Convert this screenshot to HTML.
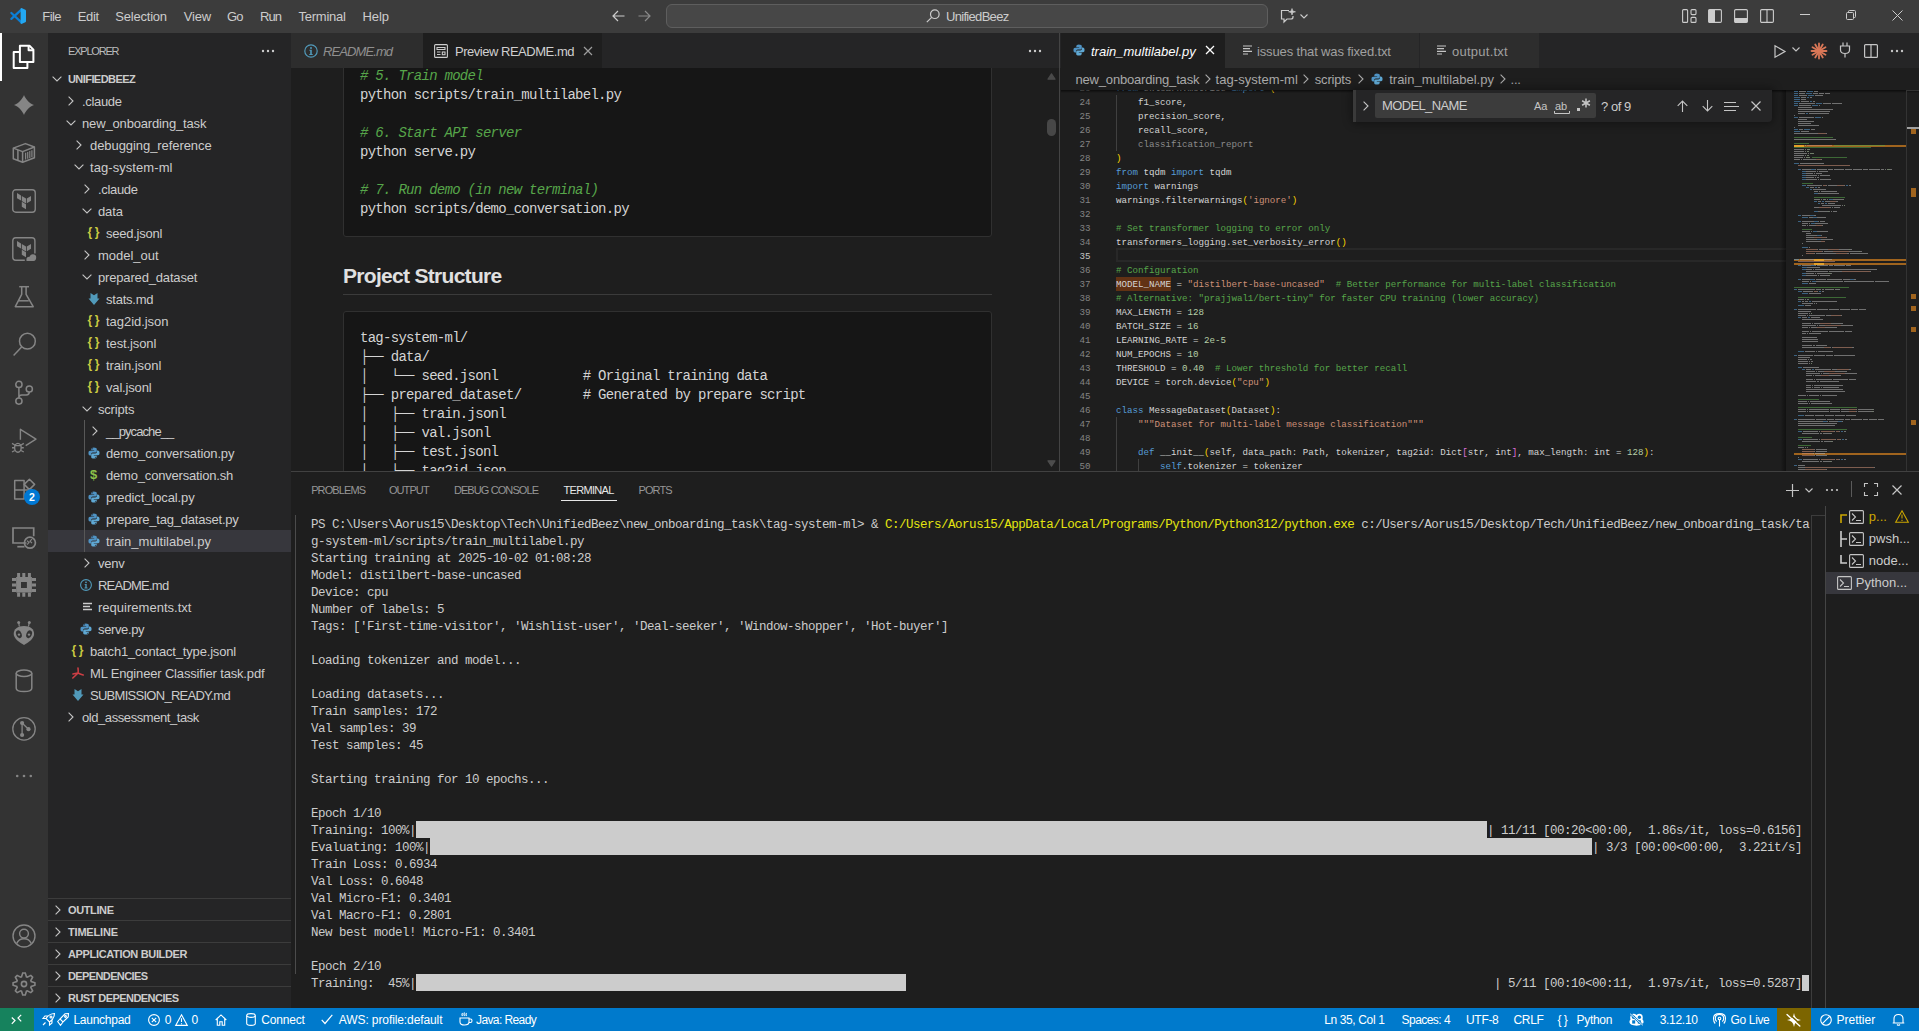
<!DOCTYPE html>
<html><head><meta charset="utf-8">
<style>
*{box-sizing:border-box;margin:0;padding:0}
html,body{width:1919px;height:1031px;overflow:hidden;background:#1e1e1e;font-family:"Liberation Sans",sans-serif;color:#cccccc}
.a{position:absolute}
.t{position:absolute;white-space:pre}
svg{position:absolute;overflow:visible}
#title{left:0;top:0;width:1919px;height:33px;background:#3c3c3c}
#act{left:0;top:33px;width:48px;height:975px;background:#333333}
#side{left:48px;top:33px;width:243px;height:975px;background:#252526}
#ed1{left:291px;top:33px;width:769px;height:438px;background:#1e1e1e}
#ed2{left:1060px;top:33px;width:859px;height:438px;background:#1e1e1e}
#panel{left:291px;top:471px;width:1628px;height:537px;background:#1e1e1e}
#status{left:0;top:1008px;width:1919px;height:23px;background:#007acc;color:#fff}
.menu{font-size:13px;top:0;line-height:33px;color:#cccccc}
.row{position:absolute;left:0;width:243px;height:22px;font-size:13px;line-height:22px;color:#cccccc}
.row span{position:absolute;white-space:pre}
.mono{font-family:"Liberation Mono",monospace}
</style></head>
<body>
<!-- title -->
<div id="title" class="a">
<svg style="left:6px;top:4px" width="24" height="24" viewBox="0 0 24 24"><path d="M5.35 8.95 L15.4 18.4 M5.35 14.9 L15.4 5.6" stroke="#0b7fd6" stroke-width="2.2" stroke-linecap="round"/><path d="M14.6 4.4 Q15.3 3.9 16 4.2 L19.4 5.8 Q20 6.1 20 6.8 V17.2 Q20 17.9 19.4 18.2 L16 19.8 Q15.3 20.1 14.6 19.6 Z" fill="#23a8f2"/></svg>
<span class="t menu" style="left:42.300000000000004px;letter-spacing:-0.554px">File</span>
<span class="t menu" style="left:77.8px;letter-spacing:-0.364px">Edit</span>
<span class="t menu" style="left:115.3px;letter-spacing:-0.212px">Selection</span>
<span class="t menu" style="left:183.7px;letter-spacing:-0.161px">View</span>
<span class="t menu" style="left:227.0px;letter-spacing:-0.9px">Go</span>
<span class="t menu" style="left:259.90000000000003px;letter-spacing:-0.9px">Run</span>
<span class="t menu" style="left:298.40000000000003px;letter-spacing:-0.22px">Terminal</span>
<span class="t menu" style="left:362.6px;letter-spacing:-0.116px">Help</span>
<svg style="left:612px;top:10px" width="13" height="12" viewBox="0 0 13 12" fill="none" stroke="#cccccc" stroke-width="1.2"><path d="M12.5 6 H1 M6 1 L1 6 L6 11"/></svg>
<svg style="left:638px;top:10px" width="13" height="12" viewBox="0 0 13 12" fill="none" stroke="#8a8a8a" stroke-width="1.2"><path d="M0.5 6 H12 M7 1 L12 6 L7 11"/></svg>
<div class="a" style="left:666px;top:4px;width:602px;height:24px;background:#474747;border:1px solid #5e5e5e;border-radius:6px"></div>
<svg style="left:926px;top:9px" width="14" height="14" viewBox="0 0 14 14" fill="none" stroke="#cccccc" stroke-width="1.2"><circle cx="8.8" cy="5.2" r="4.3"/><path d="M5.7 8.3 L0.8 13.2"/></svg>
<span class="t" style="left:946px;top:0;font-size:13px;line-height:33px;color:#cccccc;letter-spacing:-0.69px">UnifiedBeez</span>
<svg style="left:1280px;top:8px" width="17" height="16" viewBox="0 0 17 16" fill="none" stroke="#cccccc" stroke-width="1.2"><path d="M9 2.5 H1.5 V11 H4 V14 L7 11 H11 Q13 11 13 9 V8"/><path d="M12 0.5 L12.8 3 L15.5 3.8 L12.8 4.6 L12 7 L11.2 4.6 L8.5 3.8 L11.2 3 Z" fill="#cccccc" stroke-width="0.6"/></svg>
<svg style="left:1300px;top:14px" width="8" height="5" viewBox="0 0 8 5" fill="none" stroke="#cccccc" stroke-width="1.1"><path d="M0.5 0.5 L4 4 L7.5 0.5"/></svg>
<svg style="left:1682px;top:9px" width="15" height="14" viewBox="0 0 15 14" fill="none" stroke="#cccccc" stroke-width="1.1"><rect x="0.6" y="0.6" width="5" height="12.8" rx="1"/><rect x="9" y="0.6" width="5" height="5" rx="1"/><rect x="9" y="8.4" width="5" height="5" rx="1"/></svg>
<svg style="left:1708px;top:9px" width="14" height="14" viewBox="0 0 14 14"><rect x="0.6" y="0.6" width="12.8" height="12.8" rx="1.2" fill="none" stroke="#cccccc" stroke-width="1.1"/><rect x="0.6" y="0.6" width="6.4" height="12.8" fill="#cccccc"/></svg>
<svg style="left:1734px;top:9px" width="14" height="14" viewBox="0 0 14 14"><rect x="0.6" y="0.6" width="12.8" height="12.8" rx="1.2" fill="none" stroke="#cccccc" stroke-width="1.1"/><rect x="0.6" y="9" width="12.8" height="4.4" fill="#cccccc"/></svg>
<svg style="left:1760px;top:9px" width="14" height="14" viewBox="0 0 14 14" fill="none" stroke="#cccccc" stroke-width="1.1"><rect x="0.6" y="0.6" width="12.8" height="12.8" rx="1.2"/><path d="M7 0.6 V13.4"/></svg>
<div class="a" style="left:1800px;top:14px;width:10px;height:1px;background:#cccccc"></div>
<svg style="left:1846px;top:10px" width="10" height="10" viewBox="0 0 10 10" fill="none" stroke="#cccccc" stroke-width="1"><rect x="0.5" y="2.5" width="7" height="7" rx="1"/><path d="M2.5 2.5 V1.5 Q2.5 0.5 3.5 0.5 H8.5 Q9.5 0.5 9.5 1.5 V6.5 Q9.5 7.5 8.5 7.5 H7.5"/></svg>
<svg style="left:1892px;top:10px" width="11" height="11" viewBox="0 0 11 11" stroke="#cccccc" stroke-width="1"><path d="M0.5 0.5 L10.5 10.5 M10.5 0.5 L0.5 10.5"/></svg>
</div>
<!-- act -->
<div id="act" class="a">
<div class="a" style="left:0;top:0;width:2px;height:48px;background:#ffffff"></div>
<svg style="left:12px;top:11px" width="24" height="24" viewBox="0 0 24 24" fill="none" stroke="#ffffff" stroke-width="2" stroke-linejoin="round"><path d="M7.9 1.7 H17.5 L21.4 5.6 V18 H7.9 Z" /><path d="M16.6 1.7 V6.3 H21.4"/><path d="M7.9 7.9 H1.7 V24 H15.4 V18"/></svg>
<svg style="left:14px;top:62px" width="20" height="20" viewBox="0 0 20 20" ><path d="M10 0 C11 3 15 8.5 20 10 C15 11.5 11 17 10 20 C9 17 5 11.5 0 10 C5 8.5 9 3 10 0 Z" fill="#858585"/></svg>
<svg style="left:12px;top:108px" width="24" height="24" viewBox="0 0 24 24" fill="none" stroke="#858585" stroke-width="1.5" stroke-linejoin="round"><path d="M13.4 2.6 L22.4 6 V16.7 L10.6 21.3 L1.3 17.7 V7.1 Z"/><path d="M1.3 7.1 L10.6 10.6 L22.4 6"/><path d="M10.6 10.6 V21.3"/><path d="M5.9 8.9 V19.4"/><path d="M13.6 11.7 V18.6 M15.7 10.9 V17.8 M17.8 10.1 V17 M19.9 9.3 V16.2" stroke-width="1.2"/></svg>
<svg style="left:12px;top:156px" width="24" height="24" viewBox="0 0 24 24" ><rect x="0.75" y="0.75" width="22.5" height="22.5" rx="3" fill="none" stroke="#858585" stroke-width="1.4"/><path d="M5 4 L9 6.4 V11.5 L5 9.2 Z M9.8 6.9 L14 9.4 V14.4 L9.8 12 Z M14.8 9.4 L19 7 V11.8 L14.8 14.3 Z M9.8 12.8 L14 15.2 V20.2 L9.8 17.8 Z" fill="#858585"/></svg>
<svg style="left:12px;top:204px" width="24" height="24" viewBox="0 0 24 24" ><path d="M12.8 23.2 H3.7 Q0.8 23.2 0.8 20.3 V3.7 Q0.8 0.8 3.7 0.8 H20 Q22.9 0.8 22.9 3.7 V16.4" fill="none" stroke="#858585" stroke-width="1.4"/><path d="M5 4 L9 6.4 V11.5 L5 9.2 Z M9.8 6.9 L14 9.4 V14.4 L9.8 12 Z M14.8 9.4 L19 7 V11.8 L14.8 14.3 Z M9.8 12.8 L14 15.2 V20.2 L9.8 17.8 Z" fill="#858585"/><path d="M14.5 24 Q13.8 19.8 17.5 19.8 Q18.3 17 21 17.2 Q24.3 17.5 24.2 20.3 Q24.2 24 21.5 24 Z" fill="#858585"/></svg>
<svg style="left:12px;top:252px" width="24" height="24" viewBox="0 0 24 24" fill="none" stroke="#858585" stroke-width="1.5" stroke-linejoin="round"><path d="M7.2 1.7 H17"/><path d="M9.7 1.7 V9.3 L3.3 21.7 H21.2 L14.1 9.3 V1.7"/><path d="M7 15.8 H16.8"/></svg>
<svg style="left:12px;top:299px" width="24" height="24" viewBox="0 0 24 24" fill="none" stroke="#858585" stroke-width="1.5" stroke-linejoin="round"><circle cx="15.4" cy="9.2" r="7.9"/><path d="M9.6 15 L1.6 23.5"/></svg>
<svg style="left:12px;top:347px" width="24" height="24" viewBox="0 0 24 24" fill="none" stroke="#858585" stroke-width="1.5" stroke-linejoin="round"><circle cx="6.9" cy="4.4" r="3.1"/><circle cx="6.9" cy="21.1" r="3.1"/><circle cx="17.3" cy="9" r="3.1"/><path d="M6.9 7.5 V18 M17.3 12.1 Q17.3 15 14.3 15 H9.8 Q6.9 15 6.9 18"/></svg>
<svg style="left:12px;top:395px" width="24" height="24" viewBox="0 0 24 24" fill="none" stroke="#858585" stroke-width="1.4" stroke-linejoin="round"><path d="M8.4 11.8 V1.3 L24 11.2 L13.7 17.7"/><ellipse cx="5.9" cy="19.8" rx="3.3" ry="4.4"/><path d="M2.6 17.6 H9.2 M0 15.3 L2.8 17 M0 19.8 H2.6 M0 24 L2.8 22.5 M11.8 15.3 L9 17 M11.8 19.8 H9.2 M11.8 24 L9 22.5"/></svg>
<svg style="left:12px;top:443px" width="24" height="24" viewBox="0 0 24 24" fill="none" stroke="#858585" stroke-width="1.5" stroke-linejoin="round"><path d="M2.7 4.4 H12.1 V23 H2.7 Z M2.7 13.9 H21"/><path d="M17.4 3.2 L22.6 8.4 L17.4 13.6 L12.2 8.4 Z"/></svg>
<div class="a" style="left:24px;top:455.5px;width:16px;height:16px;border-radius:50%;background:#0078d4;color:#fff;font-size:10.5px;line-height:16px;text-align:center;font-weight:bold">2</div>
<svg style="left:12px;top:491px" width="24" height="24" viewBox="0 0 24 24" fill="none" stroke="#858585" stroke-width="1.7"><path d="M14.5 19 H1 V4 H21.7 V12.3"/><path d="M5.3 22.7 H12.5"/><circle cx="17.9" cy="18.7" r="5.5"/><path d="M15 16.6 L17 18.6 L15 20.6 M20 15.2 L18 17.2 L20 19.2" stroke-width="1.2"/></svg>
<svg style="left:12px;top:539px" width="24" height="24" viewBox="0 0 24 24" ><path d="M4.1 5 H19.9 V20.5 H4.1 Z M9 10.1 V15.9 H14.9 V10.1 Z" fill="#858585" fill-rule="evenodd"/><path d="M5.1 1 h3 v4 h-3 Z M10.3 1 h3 v4 h-3 Z M15.9 1 h3 v4 h-3 Z M5.1 20.5 h3 v4.3 h-3 Z M10.3 20.5 h3 v4.3 h-3 Z M15.9 20.5 h3 v4.3 h-3 Z M0 6 h4.1 v3 h-4.1 Z M0 11.4 h4.1 v3 h-4.1 Z M0 16.9 h4.1 v3 h-4.1 Z M19.9 6 h4.1 v3 h-4.1 Z M19.9 11.4 h4.1 v3 h-4.1 Z M19.9 16.9 h4.1 v3 h-4.1 Z" fill="#858585"/></svg>
<svg style="left:12px;top:587px" width="24" height="24" viewBox="0 0 24 24" ><path d="M12 5.9 C18.5 5.9 22.1 9 22.1 14 C22.1 18.5 16 23 12 24.9 C8 23 1.7 18.5 1.7 14 C1.7 9 5.5 5.9 12 5.9 Z" fill="#858585"/><path d="M7.3 6.5 L6.7 2.5 M16.5 6.5 L17.3 2.5" stroke="#858585" stroke-width="1.2"/><circle cx="6.7" cy="2.5" r="1.5" fill="#858585"/><circle cx="17.3" cy="2.5" r="1.5" fill="#858585"/><ellipse cx="6.9" cy="14.3" rx="2.7" ry="4" transform="rotate(-22 6.9 14.3)" fill="#333333"/><ellipse cx="17.1" cy="14.3" rx="2.7" ry="4" transform="rotate(22 17.1 14.3)" fill="#333333"/><circle cx="7" cy="14.6" r="1.2" fill="#858585"/><circle cx="17" cy="14.6" r="1.2" fill="#858585"/></svg>
<svg style="left:12px;top:636px" width="24" height="24" viewBox="0 0 24 24" fill="none" stroke="#858585" stroke-width="1.5" stroke-linejoin="round"><ellipse cx="12" cy="4.3" rx="7.8" ry="3.2"/><path d="M4.2 4.3 V19.3 Q4.2 22.6 12 22.6 Q19.8 22.6 19.8 19.3 V4.3"/></svg>
<svg style="left:12px;top:684px" width="24" height="24" viewBox="0 0 24 24" ><circle cx="12" cy="11.9" r="11.2" fill="none" stroke="#858585" stroke-width="1.3"/><path d="M10.1 6 V18 M10.1 6 L16.5 12.2" stroke="#858585" stroke-width="1.3"/><circle cx="10.1" cy="6" r="2.1" fill="#858585"/><circle cx="10.1" cy="18" r="2.1" fill="#858585"/><circle cx="16.5" cy="12.2" r="2.1" fill="#858585"/></svg>
<svg style="left:12px;top:731px" width="24" height="24" viewBox="0 0 24 24" fill="#858585"><circle cx="5.2" cy="12" r="1.3"/><circle cx="12" cy="12" r="1.3"/><circle cx="18.8" cy="12" r="1.3"/></svg>
<svg style="left:12px;top:890.5px" width="24" height="24" viewBox="0 0 24 24" fill="none" stroke="#858585" stroke-width="1.4"><circle cx="12" cy="12" r="11"/><circle cx="12" cy="9.6" r="4.4"/><path d="M4.6 19.6 Q6.8 14.8 12 14.8 Q17.2 14.8 19.4 19.6"/></svg>
<svg style="left:12px;top:939px" width="24" height="24" viewBox="0 0 24 24" fill="none" stroke="#858585" stroke-width="1.6" stroke-linejoin="miter"><path d="M9.54 4.81 L10.73 1.07 L13.27 1.07 L14.46 4.81 L15.34 5.17 L18.83 3.38 L20.62 5.17 L18.83 8.66 L19.19 9.54 L22.93 10.73 L22.93 13.27 L19.19 14.46 L18.83 15.34 L20.62 18.83 L18.83 20.62 L15.34 18.83 L14.46 19.19 L13.27 22.93 L10.73 22.93 L9.54 19.19 L8.66 18.83 L5.17 20.62 L3.38 18.83 L5.17 15.34 L4.81 14.46 L1.07 13.27 L1.07 10.73 L4.81 9.54 L5.17 8.66 L3.38 5.17 L5.17 3.38 L8.66 5.17 Z"/><circle cx="12" cy="12" r="2.6"/></svg>
</div>
<!-- side -->
<div id="side" class="a">
<span class="t" style="left:20px;top:11px;font-size:11px;line-height:14px;color:#bbbbbb;letter-spacing:-1.2px">EXPLORER</span>
<svg style="left:212px;top:16px" width="16" height="4" viewBox="0 0 16 4" fill="#cccccc"><circle cx="3" cy="2" r="1.2"/><circle cx="8" cy="2" r="1.2"/><circle cx="13" cy="2" r="1.2"/></svg>
<div class="a" style="left:0;top:497px;width:243px;height:22px;background:#37373d"></div>
<div class="a" style="left:36px;top:387px;width:1px;height:132px;background:#585858"></div>
<svg style="left:4px;top:43px" width="10" height="6" viewBox="0 0 10 6" fill="none" stroke="#c5c5c5" stroke-width="1.1"><path d="M0.6 0.6 L5 5 L9.4 0.6"/></svg>
<span class="t" style="left:20px;top:35px;font-size:11px;line-height:22px;font-weight:bold;color:#cccccc;letter-spacing:-0.57px">UNIFIEDBEEZ</span>
<svg style="left:20px;top:63px" width="6" height="10" viewBox="0 0 6 10" fill="none" stroke="#c5c5c5" stroke-width="1.1"><path d="M0.6 0.6 L5 5 L0.6 9.4"/></svg>
<span class="t" style="left:34px;top:57px;font-size:13px;line-height:23px;color:#cccccc;letter-spacing:-0.321px">.claude</span>
<svg style="left:18px;top:87px" width="10" height="6" viewBox="0 0 10 6" fill="none" stroke="#c5c5c5" stroke-width="1.1"><path d="M0.6 0.6 L5 5 L9.4 0.6"/></svg>
<span class="t" style="left:34px;top:79px;font-size:13px;line-height:23px;color:#cccccc;letter-spacing:-0.152px">new_onboarding_task</span>
<svg style="left:28px;top:107px" width="6" height="10" viewBox="0 0 6 10" fill="none" stroke="#c5c5c5" stroke-width="1.1"><path d="M0.6 0.6 L5 5 L0.6 9.4"/></svg>
<span class="t" style="left:42px;top:101px;font-size:13px;line-height:23px;color:#cccccc;letter-spacing:-0.066px">debugging_reference</span>
<svg style="left:26px;top:131px" width="10" height="6" viewBox="0 0 10 6" fill="none" stroke="#c5c5c5" stroke-width="1.1"><path d="M0.6 0.6 L5 5 L9.4 0.6"/></svg>
<span class="t" style="left:42px;top:123px;font-size:13px;line-height:23px;color:#cccccc;letter-spacing:0.066px">tag-system-ml</span>
<svg style="left:36px;top:151px" width="6" height="10" viewBox="0 0 6 10" fill="none" stroke="#c5c5c5" stroke-width="1.1"><path d="M0.6 0.6 L5 5 L0.6 9.4"/></svg>
<span class="t" style="left:50px;top:145px;font-size:13px;line-height:23px;color:#cccccc;letter-spacing:-0.321px">.claude</span>
<svg style="left:34px;top:175px" width="10" height="6" viewBox="0 0 10 6" fill="none" stroke="#c5c5c5" stroke-width="1.1"><path d="M0.6 0.6 L5 5 L9.4 0.6"/></svg>
<span class="t" style="left:50px;top:167px;font-size:13px;line-height:23px;color:#cccccc;letter-spacing:-0.106px">data</span>
<span class="t" style="left:39.5px;top:191px;font-size:12px;line-height:17px;color:#cbcb41;font-weight:bold;letter-spacing:2.5px">{}</span>
<span class="t" style="left:58px;top:189px;font-size:13px;line-height:23px;color:#cccccc;letter-spacing:-0.248px">seed.jsonl</span>
<svg style="left:36px;top:217px" width="6" height="10" viewBox="0 0 6 10" fill="none" stroke="#c5c5c5" stroke-width="1.1"><path d="M0.6 0.6 L5 5 L0.6 9.4"/></svg>
<span class="t" style="left:50px;top:211px;font-size:13px;line-height:23px;color:#cccccc;letter-spacing:-0.014px">model_out</span>
<svg style="left:34px;top:241px" width="10" height="6" viewBox="0 0 10 6" fill="none" stroke="#c5c5c5" stroke-width="1.1"><path d="M0.6 0.6 L5 5 L9.4 0.6"/></svg>
<span class="t" style="left:50px;top:233px;font-size:13px;line-height:23px;color:#cccccc;letter-spacing:-0.168px">prepared_dataset</span>
<svg style="left:40px;top:260px" width="12" height="12" viewBox="0 0 12 12"><path d="M2.5 0 L6 2.2 L9.5 0 V5.6 H11.5 L6 12 L0.5 5.6 H2.5 Z" fill="#519aba"/></svg>
<span class="t" style="left:58px;top:255px;font-size:13px;line-height:23px;color:#cccccc;letter-spacing:-0.234px">stats.md</span>
<span class="t" style="left:39.5px;top:279px;font-size:12px;line-height:17px;color:#cbcb41;font-weight:bold;letter-spacing:2.5px">{}</span>
<span class="t" style="left:58px;top:277px;font-size:13px;line-height:23px;color:#cccccc;letter-spacing:-0.039px">tag2id.json</span>
<span class="t" style="left:39.5px;top:301px;font-size:12px;line-height:17px;color:#cbcb41;font-weight:bold;letter-spacing:2.5px">{}</span>
<span class="t" style="left:58px;top:299px;font-size:13px;line-height:23px;color:#cccccc;letter-spacing:-0.102px">test.jsonl</span>
<span class="t" style="left:39.5px;top:323px;font-size:12px;line-height:17px;color:#cbcb41;font-weight:bold;letter-spacing:2.5px">{}</span>
<span class="t" style="left:58px;top:321px;font-size:13px;line-height:23px;color:#cccccc;letter-spacing:-0.034px">train.jsonl</span>
<span class="t" style="left:39.5px;top:345px;font-size:12px;line-height:17px;color:#cbcb41;font-weight:bold;letter-spacing:2.5px">{}</span>
<span class="t" style="left:58px;top:343px;font-size:13px;line-height:23px;color:#cccccc;letter-spacing:-0.17px">val.jsonl</span>
<svg style="left:34px;top:373px" width="10" height="6" viewBox="0 0 10 6" fill="none" stroke="#c5c5c5" stroke-width="1.1"><path d="M0.6 0.6 L5 5 L9.4 0.6"/></svg>
<span class="t" style="left:50px;top:365px;font-size:13px;line-height:23px;color:#cccccc;letter-spacing:-0.195px">scripts</span>
<svg style="left:44px;top:393px" width="6" height="10" viewBox="0 0 6 10" fill="none" stroke="#c5c5c5" stroke-width="1.1"><path d="M0.6 0.6 L5 5 L0.6 9.4"/></svg>
<span class="t" style="left:58px;top:387px;font-size:13px;line-height:23px;color:#cccccc;letter-spacing:-0.9px">__pycache__</span>
<svg style="left:40px;top:414px" width="12" height="12" viewBox="0 0 12 12"><path d="M5.8 0.4 Q3.3 0.4 3.3 2 V3.2 H6.2 V3.7 H2 Q0.4 3.7 0.4 6 Q0.4 8.6 2 8.6 H3 V7.2 Q3 5.6 4.8 5.6 H7.4 Q8.8 5.6 8.8 4.2 V2 Q8.8 0.4 5.8 0.4 Z" fill="#4f93c4"/><path d="M6.2 11.6 Q8.7 11.6 8.7 10 V8.8 H5.8 V8.3 H10 Q11.6 8.3 11.6 6 Q11.6 3.4 10 3.4 H9 V4.8 Q9 6.4 7.2 6.4 H4.6 Q3.2 6.4 3.2 7.8 V10 Q3.2 11.6 6.2 11.6 Z" fill="#5fa8d3"/><circle cx="4.6" cy="1.7" r="0.55" fill="#252526"/><circle cx="7.4" cy="10.3" r="0.55" fill="#252526"/></svg>
<span class="t" style="left:58px;top:409px;font-size:13px;line-height:23px;color:#cccccc;letter-spacing:-0.122px">demo_conversation.py</span>
<span class="t" style="left:42px;top:433px;font-size:13px;line-height:18px;color:#8dc149;font-weight:bold">$</span>
<span class="t" style="left:58px;top:431px;font-size:13px;line-height:23px;color:#cccccc;letter-spacing:-0.185px">demo_conversation.sh</span>
<svg style="left:40px;top:458px" width="12" height="12" viewBox="0 0 12 12"><path d="M5.8 0.4 Q3.3 0.4 3.3 2 V3.2 H6.2 V3.7 H2 Q0.4 3.7 0.4 6 Q0.4 8.6 2 8.6 H3 V7.2 Q3 5.6 4.8 5.6 H7.4 Q8.8 5.6 8.8 4.2 V2 Q8.8 0.4 5.8 0.4 Z" fill="#4f93c4"/><path d="M6.2 11.6 Q8.7 11.6 8.7 10 V8.8 H5.8 V8.3 H10 Q11.6 8.3 11.6 6 Q11.6 3.4 10 3.4 H9 V4.8 Q9 6.4 7.2 6.4 H4.6 Q3.2 6.4 3.2 7.8 V10 Q3.2 11.6 6.2 11.6 Z" fill="#5fa8d3"/><circle cx="4.6" cy="1.7" r="0.55" fill="#252526"/><circle cx="7.4" cy="10.3" r="0.55" fill="#252526"/></svg>
<span class="t" style="left:58px;top:453px;font-size:13px;line-height:23px;color:#cccccc;letter-spacing:-0.108px">predict_local.py</span>
<svg style="left:40px;top:480px" width="12" height="12" viewBox="0 0 12 12"><path d="M5.8 0.4 Q3.3 0.4 3.3 2 V3.2 H6.2 V3.7 H2 Q0.4 3.7 0.4 6 Q0.4 8.6 2 8.6 H3 V7.2 Q3 5.6 4.8 5.6 H7.4 Q8.8 5.6 8.8 4.2 V2 Q8.8 0.4 5.8 0.4 Z" fill="#4f93c4"/><path d="M6.2 11.6 Q8.7 11.6 8.7 10 V8.8 H5.8 V8.3 H10 Q11.6 8.3 11.6 6 Q11.6 3.4 10 3.4 H9 V4.8 Q9 6.4 7.2 6.4 H4.6 Q3.2 6.4 3.2 7.8 V10 Q3.2 11.6 6.2 11.6 Z" fill="#5fa8d3"/><circle cx="4.6" cy="1.7" r="0.55" fill="#252526"/><circle cx="7.4" cy="10.3" r="0.55" fill="#252526"/></svg>
<span class="t" style="left:58px;top:475px;font-size:13px;line-height:23px;color:#cccccc;letter-spacing:-0.212px">prepare_tag_dataset.py</span>
<svg style="left:40px;top:502px" width="12" height="12" viewBox="0 0 12 12"><path d="M5.8 0.4 Q3.3 0.4 3.3 2 V3.2 H6.2 V3.7 H2 Q0.4 3.7 0.4 6 Q0.4 8.6 2 8.6 H3 V7.2 Q3 5.6 4.8 5.6 H7.4 Q8.8 5.6 8.8 4.2 V2 Q8.8 0.4 5.8 0.4 Z" fill="#4f93c4"/><path d="M6.2 11.6 Q8.7 11.6 8.7 10 V8.8 H5.8 V8.3 H10 Q11.6 8.3 11.6 6 Q11.6 3.4 10 3.4 H9 V4.8 Q9 6.4 7.2 6.4 H4.6 Q3.2 6.4 3.2 7.8 V10 Q3.2 11.6 6.2 11.6 Z" fill="#5fa8d3"/><circle cx="4.6" cy="1.7" r="0.55" fill="#252526"/><circle cx="7.4" cy="10.3" r="0.55" fill="#252526"/></svg>
<span class="t" style="left:58px;top:497px;font-size:13px;line-height:23px;color:#cccccc;letter-spacing:0.012px">train_multilabel.py</span>
<svg style="left:36px;top:525px" width="6" height="10" viewBox="0 0 6 10" fill="none" stroke="#c5c5c5" stroke-width="1.1"><path d="M0.6 0.6 L5 5 L0.6 9.4"/></svg>
<span class="t" style="left:50px;top:519px;font-size:13px;line-height:23px;color:#cccccc;letter-spacing:-0.254px">venv</span>
<svg style="left:32px;top:546px" width="12" height="12" viewBox="0 0 12 12"><circle cx="6" cy="6" r="5.4" fill="none" stroke="#519aba" stroke-width="1.1"/><circle cx="6" cy="3.3" r="0.9" fill="#519aba"/><path d="M4.6 5 H6.7 V8.6 H7.5 V9.4 H4.5 V8.6 H5.3 V5.8 H4.6 Z" fill="#519aba"/></svg>
<span class="t" style="left:50px;top:541px;font-size:13px;line-height:23px;color:#cccccc;letter-spacing:-0.773px">README.md</span>
<svg style="left:35px;top:569px" width="10" height="10" viewBox="0 0 10 10" stroke="#cccccc" stroke-width="1.3"><path d="M0 1.5 H9 M0 4.5 H7 M0 7.5 H9"/></svg>
<span class="t" style="left:50px;top:563px;font-size:13px;line-height:23px;color:#cccccc;letter-spacing:0.013px">requirements.txt</span>
<svg style="left:32px;top:590px" width="12" height="12" viewBox="0 0 12 12"><path d="M5.8 0.4 Q3.3 0.4 3.3 2 V3.2 H6.2 V3.7 H2 Q0.4 3.7 0.4 6 Q0.4 8.6 2 8.6 H3 V7.2 Q3 5.6 4.8 5.6 H7.4 Q8.8 5.6 8.8 4.2 V2 Q8.8 0.4 5.8 0.4 Z" fill="#4f93c4"/><path d="M6.2 11.6 Q8.7 11.6 8.7 10 V8.8 H5.8 V8.3 H10 Q11.6 8.3 11.6 6 Q11.6 3.4 10 3.4 H9 V4.8 Q9 6.4 7.2 6.4 H4.6 Q3.2 6.4 3.2 7.8 V10 Q3.2 11.6 6.2 11.6 Z" fill="#5fa8d3"/><circle cx="4.6" cy="1.7" r="0.55" fill="#252526"/><circle cx="7.4" cy="10.3" r="0.55" fill="#252526"/></svg>
<span class="t" style="left:50px;top:585px;font-size:13px;line-height:23px;color:#cccccc;letter-spacing:-0.363px">serve.py</span>
<span class="t" style="left:23.5px;top:609px;font-size:12px;line-height:17px;color:#cbcb41;font-weight:bold;letter-spacing:2.5px">{}</span>
<span class="t" style="left:42px;top:607px;font-size:13px;line-height:23px;color:#cccccc;letter-spacing:-0.173px">batch1_contact_type.jsonl</span>
<svg style="left:24px;top:634px" width="12" height="12" viewBox="0 0 12 12" fill="none" stroke="#cc3e44" stroke-width="1.6" stroke-linecap="round"><path d="M6 1 Q6.5 5 6 6 M6 6 Q3 9 0.8 11 M6 6 Q9 7.5 11.2 8 M6 6 Q3 6.5 1 7"/></svg>
<span class="t" style="left:42px;top:629px;font-size:13px;line-height:23px;color:#cccccc;letter-spacing:-0.162px">ML Engineer Classifier task.pdf</span>
<svg style="left:24px;top:656px" width="12" height="12" viewBox="0 0 12 12"><path d="M2.5 0 L6 2.2 L9.5 0 V5.6 H11.5 L6 12 L0.5 5.6 H2.5 Z" fill="#519aba"/></svg>
<span class="t" style="left:42px;top:651px;font-size:13px;line-height:23px;color:#cccccc;letter-spacing:-0.724px">SUBMISSION_READY.md</span>
<svg style="left:20px;top:679px" width="6" height="10" viewBox="0 0 6 10" fill="none" stroke="#c5c5c5" stroke-width="1.1"><path d="M0.6 0.6 L5 5 L0.6 9.4"/></svg>
<span class="t" style="left:34px;top:673px;font-size:13px;line-height:23px;color:#cccccc;letter-spacing:-0.426px">old_assessment_task</span>
<div class="a" style="left:0;top:865px;width:243px;height:1px;background:#3c3c3c"></div>
<svg style="left:7px;top:872px" width="6" height="10" viewBox="0 0 6 10" fill="none" stroke="#c5c5c5" stroke-width="1.1"><path d="M0.6 0.6 L5 5 L0.6 9.4"/></svg>
<span class="t" style="left:20px;top:866px;font-size:11px;line-height:22px;font-weight:bold;color:#cccccc;letter-spacing:-0.382px">OUTLINE</span>
<div class="a" style="left:0;top:887px;width:243px;height:1px;background:#3c3c3c"></div>
<svg style="left:7px;top:894px" width="6" height="10" viewBox="0 0 6 10" fill="none" stroke="#c5c5c5" stroke-width="1.1"><path d="M0.6 0.6 L5 5 L0.6 9.4"/></svg>
<span class="t" style="left:20px;top:888px;font-size:11px;line-height:22px;font-weight:bold;color:#cccccc;letter-spacing:-0.192px">TIMELINE</span>
<div class="a" style="left:0;top:909px;width:243px;height:1px;background:#3c3c3c"></div>
<svg style="left:7px;top:916px" width="6" height="10" viewBox="0 0 6 10" fill="none" stroke="#c5c5c5" stroke-width="1.1"><path d="M0.6 0.6 L5 5 L0.6 9.4"/></svg>
<span class="t" style="left:20px;top:910px;font-size:11px;line-height:22px;font-weight:bold;color:#cccccc;letter-spacing:-0.343px">APPLICATION BUILDER</span>
<div class="a" style="left:0;top:931px;width:243px;height:1px;background:#3c3c3c"></div>
<svg style="left:7px;top:938px" width="6" height="10" viewBox="0 0 6 10" fill="none" stroke="#c5c5c5" stroke-width="1.1"><path d="M0.6 0.6 L5 5 L0.6 9.4"/></svg>
<span class="t" style="left:20px;top:932px;font-size:11px;line-height:22px;font-weight:bold;color:#cccccc;letter-spacing:-0.617px">DEPENDENCIES</span>
<div class="a" style="left:0;top:953px;width:243px;height:1px;background:#3c3c3c"></div>
<svg style="left:7px;top:960px" width="6" height="10" viewBox="0 0 6 10" fill="none" stroke="#c5c5c5" stroke-width="1.1"><path d="M0.6 0.6 L5 5 L0.6 9.4"/></svg>
<span class="t" style="left:20px;top:954px;font-size:11px;line-height:22px;font-weight:bold;color:#cccccc;letter-spacing:-0.549px">RUST DEPENDENCIES</span>
</div>
<!-- ed1 -->
<div id="ed1" class="a">
<div class="a" style="left:0;top:0;width:769px;height:35px;background:#252526"></div>
<div class="a" style="left:0;top:0;width:132px;height:35px;background:#2d2d2d"></div>
<div class="a" style="left:132px;top:0;width:179px;height:35px;background:#1e1e1e"></div>
<svg style="left:13px;top:11px" width="14" height="14" viewBox="0 0 14 14"><circle cx="7" cy="7" r="6.2" fill="none" stroke="#519aba" stroke-width="1.2"/><circle cx="7" cy="3.9" r="1" fill="#519aba"/><path d="M5.4 5.8 H7.8 V10 H8.7 V10.9 H5.3 V10 H6.2 V6.7 H5.4 Z" fill="#519aba"/></svg>
<span class="t" style="left:32px;top:0;font-size:13px;line-height:37px;font-style:italic;color:#8f8f8f;letter-spacing:-0.9px">README.md</span>
<svg style="left:143px;top:11px" width="14" height="14" viewBox="0 0 14 14" fill="none" stroke="#cccccc" stroke-width="1.1"><rect x="0.6" y="0.6" width="12.8" height="12.8" rx="1"/><path d="M3 3.5 H11 V5.5 H3 Z M3 8 H6.5 M3 10.5 H6.5"/><rect x="8.3" y="8" width="2.7" height="2.7"/></svg>
<span class="t" style="left:164px;top:0;font-size:13px;line-height:37px;color:#d0d0d0;letter-spacing:-0.48px">Preview README.md</span>
<svg style="left:292px;top:13px" width="10" height="10" viewBox="0 0 10 10" stroke="#9d9d9d" stroke-width="1.2"><path d="M1 1 L9 9 M9 1 L1 9"/></svg>
<svg style="left:736px;top:16px" width="16" height="4" viewBox="0 0 16 4" fill="#cccccc"><circle cx="3" cy="2" r="1.2"/><circle cx="8" cy="2" r="1.2"/><circle cx="13" cy="2" r="1.2"/></svg>
<div class="a" style="left:0;top:35px;width:768px;height:403px;overflow:hidden;background:#1e1e1e">
<div class="a" style="left:52px;top:-48px;width:649px;height:217px;background:#161616;border:1px solid #303030;border-radius:3px"></div>
<span class="t mono" style="left:69px;top:-0.9px;font-size:14px;line-height:19px;letter-spacing:-0.72px;color:#d4d4d4;color:#57a64a;font-style:italic"># 5. Train model</span>
<span class="t mono" style="left:69px;top:18.1px;font-size:14px;line-height:19px;letter-spacing:-0.72px;color:#d4d4d4;">python scripts/train_multilabel.py</span>
<span class="t mono" style="left:69px;top:56.1px;font-size:14px;line-height:19px;letter-spacing:-0.72px;color:#d4d4d4;color:#57a64a;font-style:italic"># 6. Start API server</span>
<span class="t mono" style="left:69px;top:75.1px;font-size:14px;line-height:19px;letter-spacing:-0.72px;color:#d4d4d4;">python serve.py</span>
<span class="t mono" style="left:69px;top:113.1px;font-size:14px;line-height:19px;letter-spacing:-0.72px;color:#d4d4d4;color:#57a64a;font-style:italic"># 7. Run demo (in new terminal)</span>
<span class="t mono" style="left:69px;top:132.1px;font-size:14px;line-height:19px;letter-spacing:-0.72px;color:#d4d4d4;">python scripts/demo_conversation.py</span>
<span class="t" style="left:52px;top:194.8px;font-size:21px;line-height:26px;font-weight:bold;letter-spacing:-0.7px;color:#e0e0e0">Project Structure</span>
<div class="a" style="left:52px;top:226px;width:649px;height:1px;background:#3b3b3b"></div>
<div class="a" style="left:52px;top:243px;width:649px;height:300px;background:#161616;border:1px solid #303030;border-radius:3px"></div>
<span class="t mono" style="left:69px;top:261.0px;font-size:14px;line-height:19px;letter-spacing:-0.72px;color:#d4d4d4">tag-system-ml/</span>
<span class="t mono" style="left:69px;top:280.0px;font-size:14px;line-height:19px;letter-spacing:-0.72px;color:#d4d4d4">├── data/</span>
<span class="t mono" style="left:69px;top:299.0px;font-size:14px;line-height:19px;letter-spacing:-0.72px;color:#d4d4d4">│   └── seed.jsonl           # Original training data</span>
<span class="t mono" style="left:69px;top:318.0px;font-size:14px;line-height:19px;letter-spacing:-0.72px;color:#d4d4d4">├── prepared_dataset/        # Generated by prepare script</span>
<span class="t mono" style="left:69px;top:337.0px;font-size:14px;line-height:19px;letter-spacing:-0.72px;color:#d4d4d4">│   ├── train.jsonl</span>
<span class="t mono" style="left:69px;top:356.0px;font-size:14px;line-height:19px;letter-spacing:-0.72px;color:#d4d4d4">│   ├── val.jsonl</span>
<span class="t mono" style="left:69px;top:375.0px;font-size:14px;line-height:19px;letter-spacing:-0.72px;color:#d4d4d4">│   ├── test.jsonl</span>
<span class="t mono" style="left:69px;top:394.0px;font-size:14px;line-height:19px;letter-spacing:-0.72px;color:#d4d4d4">│   └── tag2id.json</span>
</div>
<svg style="left:756px;top:40px" width="9" height="7" viewBox="0 0 9 7"><path d="M1 6.2 H8 L4.5 0.8 Z" fill="#4a4a4a" stroke="#4a4a4a" stroke-width="1.2" stroke-linejoin="round"/></svg>
<div class="a" style="left:756px;top:86px;width:9px;height:17px;border-radius:5px;background:#474747"></div>
<svg style="left:756px;top:427px" width="9" height="7" viewBox="0 0 9 7"><path d="M1 0.8 H8 L4.5 6.2 Z" fill="#4d4d4d" stroke="#4d4d4d" stroke-width="1.2" stroke-linejoin="round"/></svg>
<div class="a" style="left:768px;top:0;width:1px;height:438px;background:#444444"></div>
</div>
<!-- ed2 -->
<div id="ed2" class="a">
<div class="a" style="left:0;top:0;width:859px;height:35px;background:#252526"></div>
<div class="a" style="left:1px;top:0;width:164px;height:35px;background:#1e1e1e"></div>
<div class="a" style="left:165px;top:0;width:194px;height:35px;background:#2d2d2d"></div>
<div class="a" style="left:359px;top:0;width:1px;height:35px;background:#252526"></div>
<div class="a" style="left:360px;top:0;width:119px;height:35px;background:#2d2d2d"></div>
<svg style="left:13px;top:11px" width="12" height="12" viewBox="0 0 12 12"><path d="M5.8 0.4 Q3.3 0.4 3.3 2 V3.2 H6.2 V3.7 H2 Q0.4 3.7 0.4 6 Q0.4 8.6 2 8.6 H3 V7.2 Q3 5.6 4.8 5.6 H7.4 Q8.8 5.6 8.8 4.2 V2 Q8.8 0.4 5.8 0.4 Z" fill="#4f93c4"/><path d="M6.2 11.6 Q8.7 11.6 8.7 10 V8.8 H5.8 V8.3 H10 Q11.6 8.3 11.6 6 Q11.6 3.4 10 3.4 H9 V4.8 Q9 6.4 7.2 6.4 H4.6 Q3.2 6.4 3.2 7.8 V10 Q3.2 11.6 6.2 11.6 Z" fill="#5fa8d3"/></svg>
<span class="t" style="left:31px;top:0;font-size:13px;line-height:37px;font-style:italic;color:#ffffff">train_multilabel.py</span>
<svg style="left:145px;top:12px" width="10" height="10" viewBox="0 0 10 10" stroke="#ffffff" stroke-width="1.3"><path d="M1 1 L9 9 M9 1 L1 9"/></svg>
<svg style="left:182.5px;top:12px" width="10" height="10" viewBox="0 0 10 10" stroke="#c5c5c5" stroke-width="1.2"><path d="M0 1 H9 M0 3.7 H7 M0 6.3 H9 M0 9 H5"/></svg>
<span class="t" style="left:197px;top:0;font-size:13px;line-height:37px;color:#a0a0a0;letter-spacing:-0.14px">issues that was fixed.txt</span>
<svg style="left:377.3px;top:12px" width="10" height="10" viewBox="0 0 10 10" stroke="#c5c5c5" stroke-width="1.2"><path d="M0 1 H9 M0 3.7 H7 M0 6.3 H9 M0 9 H5"/></svg>
<span class="t" style="left:392px;top:0;font-size:13px;line-height:37px;color:#a0a0a0;letter-spacing:0.25px">output.txt</span>
<svg style="left:714px;top:12px" width="12" height="13" viewBox="0 0 12 13" fill="none" stroke="#c5c5c5" stroke-width="1.2"><path d="M1 0.8 L11 6.5 L1 12.2 Z"/></svg>
<svg style="left:732px;top:14px" width="8" height="5" viewBox="0 0 8 5" fill="none" stroke="#c5c5c5" stroke-width="1.1"><path d="M0.5 0.5 L4 4 L7.5 0.5"/></svg>
<svg style="left:751px;top:10px" width="16" height="16" viewBox="0 0 16 16" stroke="#d97757" stroke-width="1.8" stroke-linecap="round"><path d="M8 8 L15.50 8.00"/><path d="M8 8 L14.50 11.75"/><path d="M8 8 L11.75 14.50"/><path d="M8 8 L8.00 15.50"/><path d="M8 8 L4.25 14.50"/><path d="M8 8 L1.50 11.75"/><path d="M8 8 L0.50 8.00"/><path d="M8 8 L1.50 4.25"/><path d="M8 8 L4.25 1.50"/><path d="M8 8 L8.00 0.50"/><path d="M8 8 L11.75 1.50"/><path d="M8 8 L14.50 4.25"/><circle cx="8" cy="8" r="2.5" fill="#d97757" stroke="none"/></svg>
<svg style="left:779px;top:9px" width="12" height="16" viewBox="0 0 12 16" fill="none" stroke="#c5c5c5" stroke-width="1.2"><path d="M4 0.5 V4 M8 0.5 V4 M1.5 4 H10.5 V8 Q10.5 11.5 6 11.5 Q1.5 11.5 1.5 8 Z M6 11.5 V15.5"/></svg>
<svg style="left:804px;top:11px" width="14" height="14" viewBox="0 0 14 14" fill="none" stroke="#c5c5c5" stroke-width="1.2"><rect x="0.6" y="0.6" width="12.8" height="12.8" rx="1"/><path d="M7 0.6 V13.4"/></svg>
<svg style="left:829px;top:16px" width="16" height="4" viewBox="0 0 16 4" fill="#c5c5c5"><circle cx="3" cy="2" r="1.2"/><circle cx="8" cy="2" r="1.2"/><circle cx="13" cy="2" r="1.2"/></svg>
<span class="t" style="left:15.5px;top:35px;font-size:13px;line-height:23px;color:#a9a9a9;letter-spacing:-0.18px">new_onboarding_task</span>
<svg style="left:144.5px;top:41px" width="6" height="10" viewBox="0 0 6 10" fill="none" stroke="#a9a9a9" stroke-width="1.1"><path d="M0.6 0.6 L5 5 L0.6 9.4"/></svg>
<span class="t" style="left:155.5px;top:35px;font-size:13px;line-height:23px;color:#a9a9a9;letter-spacing:-0.18px;letter-spacing:0.06px">tag-system-ml</span>
<svg style="left:243px;top:41px" width="6" height="10" viewBox="0 0 6 10" fill="none" stroke="#a9a9a9" stroke-width="1.1"><path d="M0.6 0.6 L5 5 L0.6 9.4"/></svg>
<span class="t" style="left:254.79999999999995px;top:35px;font-size:13px;line-height:23px;color:#a9a9a9;letter-spacing:-0.18px">scripts</span>
<svg style="left:298px;top:41px" width="6" height="10" viewBox="0 0 6 10" fill="none" stroke="#a9a9a9" stroke-width="1.1"><path d="M0.6 0.6 L5 5 L0.6 9.4"/></svg>
<svg style="left:311.29999999999995px;top:40px" width="12" height="12" viewBox="0 0 12 12"><path d="M5.8 0.4 Q3.3 0.4 3.3 2 V3.2 H6.2 V3.7 H2 Q0.4 3.7 0.4 6 Q0.4 8.6 2 8.6 H3 V7.2 Q3 5.6 4.8 5.6 H7.4 Q8.8 5.6 8.8 4.2 V2 Q8.8 0.4 5.8 0.4 Z" fill="#4f93c4"/><path d="M6.2 11.6 Q8.7 11.6 8.7 10 V8.8 H5.8 V8.3 H10 Q11.6 8.3 11.6 6 Q11.6 3.4 10 3.4 H9 V4.8 Q9 6.4 7.2 6.4 H4.6 Q3.2 6.4 3.2 7.8 V10 Q3.2 11.6 6.2 11.6 Z" fill="#5fa8d3"/></svg>
<span class="t" style="left:329.20000000000005px;top:35px;font-size:13px;line-height:23px;color:#a9a9a9;letter-spacing:-0.18px;letter-spacing:0px">train_multilabel.py</span>
<svg style="left:440.4000000000001px;top:41px" width="6" height="10" viewBox="0 0 6 10" fill="none" stroke="#a9a9a9" stroke-width="1.1"><path d="M0.6 0.6 L5 5 L0.6 9.4"/></svg>
<span class="t" style="left:450.5px;top:35px;font-size:13px;line-height:23px;color:#a9a9a9;letter-spacing:-0.18px">...</span>
<div class="a" style="left:1px;top:57px;width:858px;height:382px;overflow:hidden">
<div class="a" style="left:55px;top:158.3px;width:670px;height:14px;border:2px solid #282828;border-right:none"></div>
<div class="a" style="left:55px;top:186.5px;width:55px;height:14px;background:#623214"></div>
<div class="a" style="left:55px;top:4.5px;width:1px;height:56px;background:#404040"></div>
<div class="a" style="left:55px;top:326.5px;width:1px;height:56px;background:#404040"></div>
<div class="a" style="left:77px;top:368.5px;width:1px;height:14px;background:#404040"></div>
<span class="t mono" style="left:0;width:29.5px;text-align:right;top:-7.8px;font-size:9.17px;line-height:14px;color:#858585">23</span>
<span class="t mono" style="left:55px;top:-7.8px;font-size:9.17px;line-height:14px"><span style="color:#569cd6">from</span><span style="color:#d4d4d4"> sklearn.metrics </span><span style="color:#569cd6">import</span><span style="color:#d4d4d4"> </span><span style="color:#ffd700">(</span></span>
<span class="t mono" style="left:0;width:29.5px;text-align:right;top:6.2px;font-size:9.17px;line-height:14px;color:#858585">24</span>
<span class="t mono" style="left:55px;top:6.2px;font-size:9.17px;line-height:14px"><span style="color:#d4d4d4">    f1_score,</span></span>
<span class="t mono" style="left:0;width:29.5px;text-align:right;top:20.2px;font-size:9.17px;line-height:14px;color:#858585">25</span>
<span class="t mono" style="left:55px;top:20.2px;font-size:9.17px;line-height:14px"><span style="color:#d4d4d4">    precision_score,</span></span>
<span class="t mono" style="left:0;width:29.5px;text-align:right;top:34.2px;font-size:9.17px;line-height:14px;color:#858585">26</span>
<span class="t mono" style="left:55px;top:34.2px;font-size:9.17px;line-height:14px"><span style="color:#d4d4d4">    recall_score,</span></span>
<span class="t mono" style="left:0;width:29.5px;text-align:right;top:48.2px;font-size:9.17px;line-height:14px;color:#858585">27</span>
<span class="t mono" style="left:55px;top:48.2px;font-size:9.17px;line-height:14px"><span style="color:#d4d4d4">    </span><span style="color:#8b8b8b">classification_report</span></span>
<span class="t mono" style="left:0;width:29.5px;text-align:right;top:62.2px;font-size:9.17px;line-height:14px;color:#858585">28</span>
<span class="t mono" style="left:55px;top:62.2px;font-size:9.17px;line-height:14px"><span style="color:#ffd700">)</span></span>
<span class="t mono" style="left:0;width:29.5px;text-align:right;top:76.2px;font-size:9.17px;line-height:14px;color:#858585">29</span>
<span class="t mono" style="left:55px;top:76.2px;font-size:9.17px;line-height:14px"><span style="color:#569cd6">from</span><span style="color:#d4d4d4"> tqdm </span><span style="color:#569cd6">import</span><span style="color:#d4d4d4"> tqdm</span></span>
<span class="t mono" style="left:0;width:29.5px;text-align:right;top:90.2px;font-size:9.17px;line-height:14px;color:#858585">30</span>
<span class="t mono" style="left:55px;top:90.2px;font-size:9.17px;line-height:14px"><span style="color:#569cd6">import</span><span style="color:#d4d4d4"> warnings</span></span>
<span class="t mono" style="left:0;width:29.5px;text-align:right;top:104.2px;font-size:9.17px;line-height:14px;color:#858585">31</span>
<span class="t mono" style="left:55px;top:104.2px;font-size:9.17px;line-height:14px"><span style="color:#d4d4d4">warnings.filterwarnings</span><span style="color:#ffd700">(</span><span style="color:#ce9178">&#x27;ignore&#x27;</span><span style="color:#ffd700">)</span></span>
<span class="t mono" style="left:0;width:29.5px;text-align:right;top:118.2px;font-size:9.17px;line-height:14px;color:#858585">32</span>
<span class="t mono" style="left:0;width:29.5px;text-align:right;top:132.2px;font-size:9.17px;line-height:14px;color:#858585">33</span>
<span class="t mono" style="left:55px;top:132.2px;font-size:9.17px;line-height:14px"><span style="color:#57a64a"># Set transformer logging to error only</span></span>
<span class="t mono" style="left:0;width:29.5px;text-align:right;top:146.2px;font-size:9.17px;line-height:14px;color:#858585">34</span>
<span class="t mono" style="left:55px;top:146.2px;font-size:9.17px;line-height:14px"><span style="color:#d4d4d4">transformers_logging.set_verbosity_error</span><span style="color:#ffd700">()</span></span>
<span class="t mono" style="left:0;width:29.5px;text-align:right;top:160.2px;font-size:9.17px;line-height:14px;color:#c6c6c6">35</span>
<span class="t mono" style="left:0;width:29.5px;text-align:right;top:174.2px;font-size:9.17px;line-height:14px;color:#858585">36</span>
<span class="t mono" style="left:55px;top:174.2px;font-size:9.17px;line-height:14px"><span style="color:#57a64a"># Configuration</span></span>
<span class="t mono" style="left:0;width:29.5px;text-align:right;top:188.2px;font-size:9.17px;line-height:14px;color:#858585">37</span>
<span class="t mono" style="left:55px;top:188.2px;font-size:9.17px;line-height:14px"><span style="color:#d4d4d4">MODEL_NAME = </span><span style="color:#ce9178">&quot;distilbert-base-uncased&quot;</span><span style="color:#57a64a">  # Better performance for multi-label classification</span></span>
<span class="t mono" style="left:0;width:29.5px;text-align:right;top:202.2px;font-size:9.17px;line-height:14px;color:#858585">38</span>
<span class="t mono" style="left:55px;top:202.2px;font-size:9.17px;line-height:14px"><span style="color:#57a64a"># Alternative: &quot;prajjwal1/bert-tiny&quot; for faster CPU training (lower accuracy)</span></span>
<span class="t mono" style="left:0;width:29.5px;text-align:right;top:216.2px;font-size:9.17px;line-height:14px;color:#858585">39</span>
<span class="t mono" style="left:55px;top:216.2px;font-size:9.17px;line-height:14px"><span style="color:#d4d4d4">MAX_LENGTH = </span><span style="color:#b5cea8">128</span></span>
<span class="t mono" style="left:0;width:29.5px;text-align:right;top:230.2px;font-size:9.17px;line-height:14px;color:#858585">40</span>
<span class="t mono" style="left:55px;top:230.2px;font-size:9.17px;line-height:14px"><span style="color:#d4d4d4">BATCH_SIZE = </span><span style="color:#b5cea8">16</span></span>
<span class="t mono" style="left:0;width:29.5px;text-align:right;top:244.2px;font-size:9.17px;line-height:14px;color:#858585">41</span>
<span class="t mono" style="left:55px;top:244.2px;font-size:9.17px;line-height:14px"><span style="color:#d4d4d4">LEARNING_RATE = </span><span style="color:#b5cea8">2e-5</span></span>
<span class="t mono" style="left:0;width:29.5px;text-align:right;top:258.2px;font-size:9.17px;line-height:14px;color:#858585">42</span>
<span class="t mono" style="left:55px;top:258.2px;font-size:9.17px;line-height:14px"><span style="color:#d4d4d4">NUM_EPOCHS = </span><span style="color:#b5cea8">10</span></span>
<span class="t mono" style="left:0;width:29.5px;text-align:right;top:272.2px;font-size:9.17px;line-height:14px;color:#858585">43</span>
<span class="t mono" style="left:55px;top:272.2px;font-size:9.17px;line-height:14px"><span style="color:#d4d4d4">THRESHOLD = </span><span style="color:#b5cea8">0.40</span><span style="color:#57a64a">  # Lower threshold for better recall</span></span>
<span class="t mono" style="left:0;width:29.5px;text-align:right;top:286.2px;font-size:9.17px;line-height:14px;color:#858585">44</span>
<span class="t mono" style="left:55px;top:286.2px;font-size:9.17px;line-height:14px"><span style="color:#d4d4d4">DEVICE = torch.device</span><span style="color:#ffd700">(</span><span style="color:#ce9178">&quot;cpu&quot;</span><span style="color:#ffd700">)</span></span>
<span class="t mono" style="left:0;width:29.5px;text-align:right;top:300.2px;font-size:9.17px;line-height:14px;color:#858585">45</span>
<span class="t mono" style="left:0;width:29.5px;text-align:right;top:314.2px;font-size:9.17px;line-height:14px;color:#858585">46</span>
<span class="t mono" style="left:55px;top:314.2px;font-size:9.17px;line-height:14px"><span style="color:#569cd6">class</span><span style="color:#d4d4d4"> MessageDataset</span><span style="color:#ffd700">(</span><span style="color:#d4d4d4">Dataset</span><span style="color:#ffd700">)</span><span style="color:#d4d4d4">:</span></span>
<span class="t mono" style="left:0;width:29.5px;text-align:right;top:328.2px;font-size:9.17px;line-height:14px;color:#858585">47</span>
<span class="t mono" style="left:55px;top:328.2px;font-size:9.17px;line-height:14px"><span style="color:#d4d4d4">    </span><span style="color:#ce9178">&quot;&quot;&quot;Dataset for multi-label message classification&quot;&quot;&quot;</span></span>
<span class="t mono" style="left:0;width:29.5px;text-align:right;top:342.2px;font-size:9.17px;line-height:14px;color:#858585">48</span>
<span class="t mono" style="left:0;width:29.5px;text-align:right;top:356.2px;font-size:9.17px;line-height:14px;color:#858585">49</span>
<span class="t mono" style="left:55px;top:356.2px;font-size:9.17px;line-height:14px"><span style="color:#d4d4d4">    </span><span style="color:#569cd6">def</span><span style="color:#d4d4d4"> __init__</span><span style="color:#ffd700">(</span><span style="color:#d4d4d4">self, data_path: Path, tokenizer, tag2id: Dict</span><span style="color:#da70d6">[</span><span style="color:#d4d4d4">str, int</span><span style="color:#da70d6">]</span><span style="color:#d4d4d4">, max_length: int = </span><span style="color:#b5cea8">128</span><span style="color:#ffd700">)</span><span style="color:#d4d4d4">:</span></span>
<span class="t mono" style="left:0;width:29.5px;text-align:right;top:370.2px;font-size:9.17px;line-height:14px;color:#858585">50</span>
<span class="t mono" style="left:55px;top:370.2px;font-size:9.17px;line-height:14px"><span style="color:#d4d4d4">        </span><span style="color:#569cd6">self</span><span style="color:#d4d4d4">.tokenizer = tokenizer</span></span>
<div class="a" style="left:0;top:0;width:858px;height:3px;background:linear-gradient(rgba(0,0,0,0.6),rgba(0,0,0,0))"></div>
</div>
<div class="a" style="left:293px;top:57px;width:419px;height:32px;background:#252526;border-radius:0 0 4px 4px;box-shadow:0 0 8px 2px rgba(0,0,0,0.36)"></div>
<div class="a" style="left:293px;top:57px;width:3px;height:32px;background:#3a3a3a"></div>
<svg style="left:303px;top:68px" width="6" height="10" viewBox="0 0 6 10" fill="none" stroke="#c5c5c5" stroke-width="1.1"><path d="M0.6 0.6 L5 5 L0.6 9.4"/></svg>
<div class="a" style="left:315px;top:60px;width:221px;height:25px;background:#3c3c3c;border-radius:2px"></div>
<span class="t" style="left:322px;top:60px;font-size:13px;line-height:25px;color:#cccccc;letter-spacing:-0.63px">MODEL_NAME</span>
<span class="t" style="left:474px;top:61px;font-size:11px;line-height:25px;color:#c5c5c5">Aa</span>
<span class="t" style="left:495px;top:60.5px;font-size:11px;line-height:25px;color:#c5c5c5">ab</span>
<svg style="left:494px;top:78px" width="16" height="3" viewBox="0 0 16 3" fill="none" stroke="#c5c5c5" stroke-width="1"><path d="M0.5 0 V2.5 H15.5 V0"/></svg>
<div class="a" style="left:517px;top:75px;width:3px;height:3px;background:#c5c5c5"></div>
<svg style="left:521px;top:65px" width="10" height="10" viewBox="0 0 10 10" stroke="#c5c5c5" stroke-width="1.5"><path d="M5 0.5 V9.5 M1.1 2.75 L8.9 7.25 M1.1 7.25 L8.9 2.75"/></svg>
<span class="t" style="left:541px;top:61px;font-size:13px;line-height:25px;color:#cccccc;letter-spacing:-0.44px">? of 9</span>
<svg style="left:617px;top:67px" width="11" height="12" viewBox="0 0 11 12" fill="none" stroke="#c5c5c5" stroke-width="1.1"><path d="M5.5 12 V1 M0.7 5.8 L5.5 1 L10.3 5.8"/></svg>
<svg style="left:642px;top:67px" width="11" height="12" viewBox="0 0 11 12" fill="none" stroke="#c5c5c5" stroke-width="1.1"><path d="M5.5 0 V11 M0.7 6.2 L5.5 11 L10.3 6.2"/></svg>
<svg style="left:664px;top:68px" width="16" height="11" viewBox="0 0 16 11" fill="none" stroke="#c5c5c5" stroke-width="1"><path d="M0 1.5 H12 M0 5.5 H15 M0 9.5 H12"/></svg>
<svg style="left:691px;top:68px" width="10" height="10" viewBox="0 0 10 10" stroke="#c5c5c5" stroke-width="1.2"><path d="M0.5 0.5 L9.5 9.5 M9.5 0.5 L0.5 9.5"/></svg>
</div>
<!-- minimap -->
<div id="minimap" class="a" style="left:1786px;top:90px;width:120px;height:382px;overflow:hidden">
<div class="a" style="left:8px;top:55px;width:112px;height:2px;background:#a0641e"></div>
<div class="a" style="left:8px;top:169px;width:112px;height:2px;background:#a0641e"></div>
<div class="a" style="left:8px;top:173px;width:112px;height:2px;background:#a0641e"></div>
<div class="a" style="left:8px;top:363px;width:112px;height:2px;background:#a0641e"></div>
<div class="a" style="left:8px;top:-1px;width:6px;height:1.3px;background:#569cd6;opacity:0.55"></div>
<div class="a" style="left:15px;top:-1px;width:4px;height:1.3px;background:#b4b4b4;opacity:0.55"></div>
<div class="a" style="left:8px;top:1px;width:4px;height:1.3px;background:#569cd6;opacity:0.55"></div>
<div class="a" style="left:13px;top:1px;width:7px;height:1.3px;background:#b4b4b4;opacity:0.55"></div>
<div class="a" style="left:21px;top:1px;width:6px;height:1.3px;background:#569cd6;opacity:0.55"></div>
<div class="a" style="left:28px;top:1px;width:4px;height:1.3px;background:#b4b4b4;opacity:0.55"></div>
<div class="a" style="left:8px;top:3px;width:4px;height:1.3px;background:#569cd6;opacity:0.55"></div>
<div class="a" style="left:13px;top:3px;width:6px;height:1.3px;background:#b4b4b4;opacity:0.55"></div>
<div class="a" style="left:20px;top:3px;width:6px;height:1.3px;background:#569cd6;opacity:0.55"></div>
<div class="a" style="left:27px;top:3px;width:4px;height:1.3px;background:#b4b4b4;opacity:0.55"></div>
<div class="a" style="left:31px;top:3px;width:1px;height:1.3px;background:#b4b4b4;opacity:0.55"></div>
<div class="a" style="left:33px;top:3px;width:4px;height:1.3px;background:#b4b4b4;opacity:0.55"></div>
<div class="a" style="left:37px;top:3px;width:1px;height:1.3px;background:#b4b4b4;opacity:0.55"></div>
<div class="a" style="left:39px;top:3px;width:5px;height:1.3px;background:#b4b4b4;opacity:0.55"></div>
<div class="a" style="left:8px;top:5px;width:4px;height:1.3px;background:#569cd6;opacity:0.55"></div>
<div class="a" style="left:13px;top:5px;width:8px;height:1.3px;background:#b4b4b4;opacity:0.55"></div>
<div class="a" style="left:22px;top:5px;width:6px;height:1.3px;background:#569cd6;opacity:0.55"></div>
<div class="a" style="left:29px;top:5px;width:8px;height:1.3px;background:#b4b4b4;opacity:0.55"></div>
<div class="a" style="left:8px;top:7px;width:6px;height:1.3px;background:#569cd6;opacity:0.55"></div>
<div class="a" style="left:15px;top:7px;width:5px;height:1.3px;background:#b4b4b4;opacity:0.55"></div>
<div class="a" style="left:21px;top:7px;width:2px;height:1.3px;background:#569cd6;opacity:0.55"></div>
<div class="a" style="left:24px;top:7px;width:2px;height:1.3px;background:#b4b4b4;opacity:0.55"></div>
<div class="a" style="left:8px;top:9px;width:6px;height:1.3px;background:#569cd6;opacity:0.55"></div>
<div class="a" style="left:15px;top:9px;width:5px;height:1.3px;background:#b4b4b4;opacity:0.55"></div>
<div class="a" style="left:8px;top:11px;width:6px;height:1.3px;background:#569cd6;opacity:0.55"></div>
<div class="a" style="left:15px;top:11px;width:5px;height:1.3px;background:#b4b4b4;opacity:0.55"></div>
<div class="a" style="left:20px;top:11px;width:1px;height:1.3px;background:#b4b4b4;opacity:0.55"></div>
<div class="a" style="left:21px;top:11px;width:2px;height:1.3px;background:#b4b4b4;opacity:0.55"></div>
<div class="a" style="left:24px;top:11px;width:2px;height:1.3px;background:#569cd6;opacity:0.55"></div>
<div class="a" style="left:27px;top:11px;width:2px;height:1.3px;background:#b4b4b4;opacity:0.55"></div>
<div class="a" style="left:8px;top:13px;width:4px;height:1.3px;background:#569cd6;opacity:0.55"></div>
<div class="a" style="left:13px;top:13px;width:5px;height:1.3px;background:#b4b4b4;opacity:0.55"></div>
<div class="a" style="left:18px;top:13px;width:1px;height:1.3px;background:#b4b4b4;opacity:0.55"></div>
<div class="a" style="left:19px;top:13px;width:5px;height:1.3px;background:#b4b4b4;opacity:0.55"></div>
<div class="a" style="left:24px;top:13px;width:1px;height:1.3px;background:#b4b4b4;opacity:0.55"></div>
<div class="a" style="left:25px;top:13px;width:4px;height:1.3px;background:#b4b4b4;opacity:0.55"></div>
<div class="a" style="left:30px;top:13px;width:6px;height:1.3px;background:#569cd6;opacity:0.55"></div>
<div class="a" style="left:37px;top:13px;width:7px;height:1.3px;background:#b4b4b4;opacity:0.55"></div>
<div class="a" style="left:44px;top:13px;width:1px;height:1.3px;background:#b4b4b4;opacity:0.55"></div>
<div class="a" style="left:46px;top:13px;width:10px;height:1.3px;background:#b4b4b4;opacity:0.55"></div>
<div class="a" style="left:8px;top:15px;width:4px;height:1.3px;background:#569cd6;opacity:0.55"></div>
<div class="a" style="left:13px;top:15px;width:12px;height:1.3px;background:#b4b4b4;opacity:0.55"></div>
<div class="a" style="left:26px;top:15px;width:6px;height:1.3px;background:#569cd6;opacity:0.55"></div>
<div class="a" style="left:33px;top:15px;width:1px;height:1.3px;background:#b4b4b4;opacity:0.55"></div>
<div class="a" style="left:12px;top:17px;width:13px;height:1.3px;background:#b4b4b4;opacity:0.55"></div>
<div class="a" style="left:25px;top:17px;width:1px;height:1.3px;background:#b4b4b4;opacity:0.55"></div>
<div class="a" style="left:12px;top:19px;width:34px;height:1.3px;background:#b4b4b4;opacity:0.55"></div>
<div class="a" style="left:46px;top:19px;width:1px;height:1.3px;background:#b4b4b4;opacity:0.55"></div>
<div class="a" style="left:12px;top:21px;width:31px;height:1.3px;background:#b4b4b4;opacity:0.55"></div>
<div class="a" style="left:43px;top:21px;width:1px;height:1.3px;background:#b4b4b4;opacity:0.55"></div>
<div class="a" style="left:12px;top:23px;width:7px;height:1.3px;background:#b4b4b4;opacity:0.55"></div>
<div class="a" style="left:20px;top:23px;width:2px;height:1.3px;background:#569cd6;opacity:0.55"></div>
<div class="a" style="left:23px;top:23px;width:20px;height:1.3px;background:#b4b4b4;opacity:0.55"></div>
<div class="a" style="left:8px;top:25px;width:1px;height:1.3px;background:#b4b4b4;opacity:0.55"></div>
<div class="a" style="left:8px;top:27px;width:4px;height:1.3px;background:#569cd6;opacity:0.55"></div>
<div class="a" style="left:13px;top:27px;width:7px;height:1.3px;background:#b4b4b4;opacity:0.55"></div>
<div class="a" style="left:20px;top:27px;width:1px;height:1.3px;background:#b4b4b4;opacity:0.55"></div>
<div class="a" style="left:21px;top:27px;width:7px;height:1.3px;background:#b4b4b4;opacity:0.55"></div>
<div class="a" style="left:29px;top:27px;width:6px;height:1.3px;background:#569cd6;opacity:0.55"></div>
<div class="a" style="left:36px;top:27px;width:1px;height:1.3px;background:#b4b4b4;opacity:0.55"></div>
<div class="a" style="left:12px;top:29px;width:8px;height:1.3px;background:#b4b4b4;opacity:0.55"></div>
<div class="a" style="left:20px;top:29px;width:1px;height:1.3px;background:#b4b4b4;opacity:0.55"></div>
<div class="a" style="left:12px;top:31px;width:15px;height:1.3px;background:#b4b4b4;opacity:0.55"></div>
<div class="a" style="left:27px;top:31px;width:1px;height:1.3px;background:#b4b4b4;opacity:0.55"></div>
<div class="a" style="left:12px;top:33px;width:12px;height:1.3px;background:#b4b4b4;opacity:0.55"></div>
<div class="a" style="left:24px;top:33px;width:1px;height:1.3px;background:#b4b4b4;opacity:0.55"></div>
<div class="a" style="left:12px;top:35px;width:21px;height:1.3px;background:#b4b4b4;opacity:0.55"></div>
<div class="a" style="left:8px;top:37px;width:1px;height:1.3px;background:#b4b4b4;opacity:0.55"></div>
<div class="a" style="left:8px;top:39px;width:4px;height:1.3px;background:#569cd6;opacity:0.55"></div>
<div class="a" style="left:13px;top:39px;width:4px;height:1.3px;background:#b4b4b4;opacity:0.55"></div>
<div class="a" style="left:18px;top:39px;width:6px;height:1.3px;background:#569cd6;opacity:0.55"></div>
<div class="a" style="left:25px;top:39px;width:4px;height:1.3px;background:#b4b4b4;opacity:0.55"></div>
<div class="a" style="left:8px;top:41px;width:6px;height:1.3px;background:#569cd6;opacity:0.55"></div>
<div class="a" style="left:15px;top:41px;width:8px;height:1.3px;background:#b4b4b4;opacity:0.55"></div>
<div class="a" style="left:8px;top:43px;width:8px;height:1.3px;background:#b4b4b4;opacity:0.55"></div>
<div class="a" style="left:16px;top:43px;width:1px;height:1.3px;background:#b4b4b4;opacity:0.55"></div>
<div class="a" style="left:17px;top:43px;width:14px;height:1.3px;background:#b4b4b4;opacity:0.55"></div>
<div class="a" style="left:31px;top:43px;width:1px;height:1.3px;background:#b4b4b4;opacity:0.55"></div>
<div class="a" style="left:32px;top:43px;width:8px;height:1.3px;background:#ce9178;opacity:0.55"></div>
<div class="a" style="left:40px;top:43px;width:1px;height:1.3px;background:#b4b4b4;opacity:0.55"></div>
<div class="a" style="left:8px;top:47px;width:39px;height:1.3px;background:#57a64a;opacity:0.55"></div>
<div class="a" style="left:8px;top:49px;width:20px;height:1.3px;background:#b4b4b4;opacity:0.55"></div>
<div class="a" style="left:28px;top:49px;width:1px;height:1.3px;background:#b4b4b4;opacity:0.55"></div>
<div class="a" style="left:29px;top:49px;width:19px;height:1.3px;background:#b4b4b4;opacity:0.55"></div>
<div class="a" style="left:48px;top:49px;width:1px;height:1.3px;background:#b4b4b4;opacity:0.55"></div>
<div class="a" style="left:49px;top:49px;width:1px;height:1.3px;background:#b4b4b4;opacity:0.55"></div>
<div class="a" style="left:8px;top:53px;width:15px;height:1.3px;background:#57a64a;opacity:0.55"></div>
<div class="a" style="left:8px;top:55px;width:10px;height:1.3px;background:#b4b4b4;opacity:0.55"></div>
<div class="a" style="left:19px;top:55px;width:1px;height:1.3px;background:#b4b4b4;opacity:0.55"></div>
<div class="a" style="left:21px;top:55px;width:25px;height:1.3px;background:#ce9178;opacity:0.55"></div>
<div class="a" style="left:48px;top:55px;width:51px;height:1.3px;background:#57a64a;opacity:0.55"></div>
<div class="a" style="left:8px;top:57px;width:77px;height:1.3px;background:#57a64a;opacity:0.55"></div>
<div class="a" style="left:8px;top:59px;width:10px;height:1.3px;background:#b4b4b4;opacity:0.55"></div>
<div class="a" style="left:19px;top:59px;width:1px;height:1.3px;background:#b4b4b4;opacity:0.55"></div>
<div class="a" style="left:21px;top:59px;width:3px;height:1.3px;background:#b5cea8;opacity:0.55"></div>
<div class="a" style="left:8px;top:61px;width:10px;height:1.3px;background:#b4b4b4;opacity:0.55"></div>
<div class="a" style="left:19px;top:61px;width:1px;height:1.3px;background:#b4b4b4;opacity:0.55"></div>
<div class="a" style="left:21px;top:61px;width:2px;height:1.3px;background:#b5cea8;opacity:0.55"></div>
<div class="a" style="left:8px;top:63px;width:13px;height:1.3px;background:#b4b4b4;opacity:0.55"></div>
<div class="a" style="left:22px;top:63px;width:1px;height:1.3px;background:#b4b4b4;opacity:0.55"></div>
<div class="a" style="left:24px;top:63px;width:4px;height:1.3px;background:#b5cea8;opacity:0.55"></div>
<div class="a" style="left:8px;top:65px;width:10px;height:1.3px;background:#b4b4b4;opacity:0.55"></div>
<div class="a" style="left:19px;top:65px;width:1px;height:1.3px;background:#b4b4b4;opacity:0.55"></div>
<div class="a" style="left:21px;top:65px;width:2px;height:1.3px;background:#b5cea8;opacity:0.55"></div>
<div class="a" style="left:8px;top:67px;width:9px;height:1.3px;background:#b4b4b4;opacity:0.55"></div>
<div class="a" style="left:18px;top:67px;width:1px;height:1.3px;background:#b4b4b4;opacity:0.55"></div>
<div class="a" style="left:20px;top:67px;width:4px;height:1.3px;background:#b5cea8;opacity:0.55"></div>
<div class="a" style="left:26px;top:67px;width:35px;height:1.3px;background:#57a64a;opacity:0.55"></div>
<div class="a" style="left:8px;top:69px;width:6px;height:1.3px;background:#b4b4b4;opacity:0.55"></div>
<div class="a" style="left:15px;top:69px;width:1px;height:1.3px;background:#b4b4b4;opacity:0.55"></div>
<div class="a" style="left:17px;top:69px;width:5px;height:1.3px;background:#b4b4b4;opacity:0.55"></div>
<div class="a" style="left:22px;top:69px;width:1px;height:1.3px;background:#b4b4b4;opacity:0.55"></div>
<div class="a" style="left:23px;top:69px;width:6px;height:1.3px;background:#b4b4b4;opacity:0.55"></div>
<div class="a" style="left:29px;top:69px;width:1px;height:1.3px;background:#b4b4b4;opacity:0.55"></div>
<div class="a" style="left:30px;top:69px;width:5px;height:1.3px;background:#ce9178;opacity:0.55"></div>
<div class="a" style="left:35px;top:69px;width:1px;height:1.3px;background:#b4b4b4;opacity:0.55"></div>
<div class="a" style="left:8px;top:73px;width:5px;height:1.3px;background:#569cd6;opacity:0.55"></div>
<div class="a" style="left:14px;top:73px;width:14px;height:1.3px;background:#b4b4b4;opacity:0.55"></div>
<div class="a" style="left:28px;top:73px;width:1px;height:1.3px;background:#b4b4b4;opacity:0.55"></div>
<div class="a" style="left:29px;top:73px;width:7px;height:1.3px;background:#b4b4b4;opacity:0.55"></div>
<div class="a" style="left:36px;top:73px;width:1px;height:1.3px;background:#b4b4b4;opacity:0.55"></div>
<div class="a" style="left:37px;top:73px;width:1px;height:1.3px;background:#b4b4b4;opacity:0.55"></div>
<div class="a" style="left:12px;top:75px;width:2px;height:1.3px;background:#ce9178;opacity:0.55"></div>
<div class="a" style="left:14px;top:75px;width:48px;height:1.3px;background:#ce9178;opacity:0.55"></div>
<div class="a" style="left:62px;top:75px;width:2px;height:1.3px;background:#ce9178;opacity:0.55"></div>
<div class="a" style="left:12px;top:79px;width:3px;height:1.3px;background:#569cd6;opacity:0.55"></div>
<div class="a" style="left:16px;top:79px;width:8px;height:1.3px;background:#b4b4b4;opacity:0.55"></div>
<div class="a" style="left:24px;top:79px;width:1px;height:1.3px;background:#b4b4b4;opacity:0.55"></div>
<div class="a" style="left:25px;top:79px;width:4px;height:1.3px;background:#569cd6;opacity:0.55"></div>
<div class="a" style="left:29px;top:79px;width:1px;height:1.3px;background:#b4b4b4;opacity:0.55"></div>
<div class="a" style="left:31px;top:79px;width:9px;height:1.3px;background:#b4b4b4;opacity:0.55"></div>
<div class="a" style="left:40px;top:79px;width:1px;height:1.3px;background:#b4b4b4;opacity:0.55"></div>
<div class="a" style="left:42px;top:79px;width:4px;height:1.3px;background:#b4b4b4;opacity:0.55"></div>
<div class="a" style="left:46px;top:79px;width:1px;height:1.3px;background:#b4b4b4;opacity:0.55"></div>
<div class="a" style="left:48px;top:79px;width:9px;height:1.3px;background:#b4b4b4;opacity:0.55"></div>
<div class="a" style="left:57px;top:79px;width:1px;height:1.3px;background:#b4b4b4;opacity:0.55"></div>
<div class="a" style="left:59px;top:79px;width:6px;height:1.3px;background:#b4b4b4;opacity:0.55"></div>
<div class="a" style="left:65px;top:79px;width:1px;height:1.3px;background:#b4b4b4;opacity:0.55"></div>
<div class="a" style="left:67px;top:79px;width:4px;height:1.3px;background:#b4b4b4;opacity:0.55"></div>
<div class="a" style="left:71px;top:79px;width:1px;height:1.3px;background:#b4b4b4;opacity:0.55"></div>
<div class="a" style="left:72px;top:79px;width:3px;height:1.3px;background:#b4b4b4;opacity:0.55"></div>
<div class="a" style="left:75px;top:79px;width:1px;height:1.3px;background:#b4b4b4;opacity:0.55"></div>
<div class="a" style="left:77px;top:79px;width:3px;height:1.3px;background:#b4b4b4;opacity:0.55"></div>
<div class="a" style="left:80px;top:79px;width:1px;height:1.3px;background:#b4b4b4;opacity:0.55"></div>
<div class="a" style="left:81px;top:79px;width:1px;height:1.3px;background:#b4b4b4;opacity:0.55"></div>
<div class="a" style="left:83px;top:79px;width:10px;height:1.3px;background:#b4b4b4;opacity:0.55"></div>
<div class="a" style="left:93px;top:79px;width:1px;height:1.3px;background:#b4b4b4;opacity:0.55"></div>
<div class="a" style="left:95px;top:79px;width:3px;height:1.3px;background:#b4b4b4;opacity:0.55"></div>
<div class="a" style="left:99px;top:79px;width:1px;height:1.3px;background:#b4b4b4;opacity:0.55"></div>
<div class="a" style="left:101px;top:79px;width:3px;height:1.3px;background:#b5cea8;opacity:0.55"></div>
<div class="a" style="left:104px;top:79px;width:1px;height:1.3px;background:#b4b4b4;opacity:0.55"></div>
<div class="a" style="left:105px;top:79px;width:1px;height:1.3px;background:#b4b4b4;opacity:0.55"></div>
<div class="a" style="left:16px;top:81px;width:4px;height:1.3px;background:#569cd6;opacity:0.55"></div>
<div class="a" style="left:20px;top:81px;width:1px;height:1.3px;background:#b4b4b4;opacity:0.55"></div>
<div class="a" style="left:21px;top:81px;width:9px;height:1.3px;background:#b4b4b4;opacity:0.55"></div>
<div class="a" style="left:31px;top:81px;width:1px;height:1.3px;background:#b4b4b4;opacity:0.55"></div>
<div class="a" style="left:33px;top:81px;width:9px;height:1.3px;background:#b4b4b4;opacity:0.55"></div>
<div class="a" style="left:16px;top:83px;width:4px;height:1.3px;background:#569cd6;opacity:0.55"></div>
<div class="a" style="left:20px;top:83px;width:1px;height:1.3px;background:#b4b4b4;opacity:0.55"></div>
<div class="a" style="left:21px;top:83px;width:6px;height:1.3px;background:#b4b4b4;opacity:0.55"></div>
<div class="a" style="left:28px;top:83px;width:1px;height:1.3px;background:#b4b4b4;opacity:0.55"></div>
<div class="a" style="left:30px;top:83px;width:6px;height:1.3px;background:#b4b4b4;opacity:0.55"></div>
<div class="a" style="left:16px;top:85px;width:4px;height:1.3px;background:#569cd6;opacity:0.55"></div>
<div class="a" style="left:20px;top:85px;width:1px;height:1.3px;background:#b4b4b4;opacity:0.55"></div>
<div class="a" style="left:21px;top:85px;width:10px;height:1.3px;background:#b4b4b4;opacity:0.55"></div>
<div class="a" style="left:32px;top:85px;width:1px;height:1.3px;background:#b4b4b4;opacity:0.55"></div>
<div class="a" style="left:34px;top:85px;width:10px;height:1.3px;background:#b4b4b4;opacity:0.55"></div>
<div class="a" style="left:16px;top:87px;width:4px;height:1.3px;background:#569cd6;opacity:0.55"></div>
<div class="a" style="left:20px;top:87px;width:1px;height:1.3px;background:#b4b4b4;opacity:0.55"></div>
<div class="a" style="left:21px;top:87px;width:7px;height:1.3px;background:#b4b4b4;opacity:0.55"></div>
<div class="a" style="left:29px;top:87px;width:1px;height:1.3px;background:#b4b4b4;opacity:0.55"></div>
<div class="a" style="left:31px;top:87px;width:1px;height:1.3px;background:#b4b4b4;opacity:0.55"></div>
<div class="a" style="left:32px;top:87px;width:1px;height:1.3px;background:#b4b4b4;opacity:0.55"></div>
<div class="a" style="left:16px;top:89px;width:4px;height:1.3px;background:#569cd6;opacity:0.55"></div>
<div class="a" style="left:20px;top:89px;width:1px;height:1.3px;background:#b4b4b4;opacity:0.55"></div>
<div class="a" style="left:21px;top:89px;width:10px;height:1.3px;background:#b4b4b4;opacity:0.55"></div>
<div class="a" style="left:32px;top:89px;width:1px;height:1.3px;background:#b4b4b4;opacity:0.55"></div>
<div class="a" style="left:34px;top:89px;width:3px;height:1.3px;background:#b4b4b4;opacity:0.55"></div>
<div class="a" style="left:37px;top:89px;width:1px;height:1.3px;background:#b4b4b4;opacity:0.55"></div>
<div class="a" style="left:38px;top:89px;width:6px;height:1.3px;background:#b4b4b4;opacity:0.55"></div>
<div class="a" style="left:44px;top:89px;width:1px;height:1.3px;background:#b4b4b4;opacity:0.55"></div>
<div class="a" style="left:16px;top:93px;width:11px;height:1.3px;background:#57a64a;opacity:0.55"></div>
<div class="a" style="left:16px;top:95px;width:4px;height:1.3px;background:#569cd6;opacity:0.55"></div>
<div class="a" style="left:21px;top:95px;width:4px;height:1.3px;background:#b4b4b4;opacity:0.55"></div>
<div class="a" style="left:25px;top:95px;width:1px;height:1.3px;background:#b4b4b4;opacity:0.55"></div>
<div class="a" style="left:26px;top:95px;width:9px;height:1.3px;background:#b4b4b4;opacity:0.55"></div>
<div class="a" style="left:35px;top:95px;width:1px;height:1.3px;background:#b4b4b4;opacity:0.55"></div>
<div class="a" style="left:37px;top:95px;width:3px;height:1.3px;background:#ce9178;opacity:0.55"></div>
<div class="a" style="left:40px;top:95px;width:1px;height:1.3px;background:#b4b4b4;opacity:0.55"></div>
<div class="a" style="left:42px;top:95px;width:8px;height:1.3px;background:#b4b4b4;opacity:0.55"></div>
<div class="a" style="left:50px;top:95px;width:1px;height:1.3px;background:#b4b4b4;opacity:0.55"></div>
<div class="a" style="left:51px;top:95px;width:7px;height:1.3px;background:#ce9178;opacity:0.55"></div>
<div class="a" style="left:58px;top:95px;width:1px;height:1.3px;background:#b4b4b4;opacity:0.55"></div>
<div class="a" style="left:60px;top:95px;width:2px;height:1.3px;background:#569cd6;opacity:0.55"></div>
<div class="a" style="left:63px;top:95px;width:1px;height:1.3px;background:#b4b4b4;opacity:0.55"></div>
<div class="a" style="left:64px;top:95px;width:1px;height:1.3px;background:#b4b4b4;opacity:0.55"></div>
<div class="a" style="left:20px;top:97px;width:3px;height:1.3px;background:#569cd6;opacity:0.55"></div>
<div class="a" style="left:24px;top:97px;width:4px;height:1.3px;background:#b4b4b4;opacity:0.55"></div>
<div class="a" style="left:29px;top:97px;width:2px;height:1.3px;background:#569cd6;opacity:0.55"></div>
<div class="a" style="left:32px;top:97px;width:1px;height:1.3px;background:#b4b4b4;opacity:0.55"></div>
<div class="a" style="left:33px;top:97px;width:1px;height:1.3px;background:#b4b4b4;opacity:0.55"></div>
<div class="a" style="left:24px;top:99px;width:2px;height:1.3px;background:#569cd6;opacity:0.55"></div>
<div class="a" style="left:27px;top:99px;width:4px;height:1.3px;background:#b4b4b4;opacity:0.55"></div>
<div class="a" style="left:31px;top:99px;width:1px;height:1.3px;background:#b4b4b4;opacity:0.55"></div>
<div class="a" style="left:32px;top:99px;width:5px;height:1.3px;background:#b4b4b4;opacity:0.55"></div>
<div class="a" style="left:37px;top:99px;width:1px;height:1.3px;background:#b4b4b4;opacity:0.55"></div>
<div class="a" style="left:38px;top:99px;width:1px;height:1.3px;background:#b4b4b4;opacity:0.55"></div>
<div class="a" style="left:39px;top:99px;width:1px;height:1.3px;background:#b4b4b4;opacity:0.55"></div>
<div class="a" style="left:28px;top:101px;width:4px;height:1.3px;background:#b4b4b4;opacity:0.55"></div>
<div class="a" style="left:33px;top:101px;width:1px;height:1.3px;background:#b4b4b4;opacity:0.55"></div>
<div class="a" style="left:35px;top:101px;width:4px;height:1.3px;background:#b4b4b4;opacity:0.55"></div>
<div class="a" style="left:39px;top:101px;width:1px;height:1.3px;background:#b4b4b4;opacity:0.55"></div>
<div class="a" style="left:40px;top:101px;width:5px;height:1.3px;background:#b4b4b4;opacity:0.55"></div>
<div class="a" style="left:45px;top:101px;width:1px;height:1.3px;background:#b4b4b4;opacity:0.55"></div>
<div class="a" style="left:46px;top:101px;width:4px;height:1.3px;background:#b4b4b4;opacity:0.55"></div>
<div class="a" style="left:50px;top:101px;width:1px;height:1.3px;background:#b4b4b4;opacity:0.55"></div>
<div class="a" style="left:28px;top:103px;width:4px;height:1.3px;background:#569cd6;opacity:0.55"></div>
<div class="a" style="left:32px;top:103px;width:1px;height:1.3px;background:#b4b4b4;opacity:0.55"></div>
<div class="a" style="left:33px;top:103px;width:7px;height:1.3px;background:#b4b4b4;opacity:0.55"></div>
<div class="a" style="left:40px;top:103px;width:1px;height:1.3px;background:#b4b4b4;opacity:0.55"></div>
<div class="a" style="left:41px;top:103px;width:6px;height:1.3px;background:#b4b4b4;opacity:0.55"></div>
<div class="a" style="left:47px;top:103px;width:1px;height:1.3px;background:#b4b4b4;opacity:0.55"></div>
<div class="a" style="left:48px;top:103px;width:4px;height:1.3px;background:#b4b4b4;opacity:0.55"></div>
<div class="a" style="left:52px;top:103px;width:1px;height:1.3px;background:#b4b4b4;opacity:0.55"></div>
<div class="a" style="left:28px;top:107px;width:31px;height:1.3px;background:#57a64a;opacity:0.55"></div>
<div class="a" style="left:28px;top:109px;width:6px;height:1.3px;background:#b4b4b4;opacity:0.55"></div>
<div class="a" style="left:35px;top:109px;width:1px;height:1.3px;background:#b4b4b4;opacity:0.55"></div>
<div class="a" style="left:37px;top:109px;width:1px;height:1.3px;background:#b4b4b4;opacity:0.55"></div>
<div class="a" style="left:38px;top:109px;width:1px;height:1.3px;background:#b5cea8;opacity:0.55"></div>
<div class="a" style="left:39px;top:109px;width:1px;height:1.3px;background:#b4b4b4;opacity:0.55"></div>
<div class="a" style="left:41px;top:109px;width:1px;height:1.3px;background:#b4b4b4;opacity:0.55"></div>
<div class="a" style="left:43px;top:109px;width:4px;height:1.3px;background:#569cd6;opacity:0.55"></div>
<div class="a" style="left:47px;top:109px;width:1px;height:1.3px;background:#b4b4b4;opacity:0.55"></div>
<div class="a" style="left:48px;top:109px;width:10px;height:1.3px;background:#b4b4b4;opacity:0.55"></div>
<div class="a" style="left:28px;top:111px;width:3px;height:1.3px;background:#569cd6;opacity:0.55"></div>
<div class="a" style="left:32px;top:111px;width:3px;height:1.3px;background:#b4b4b4;opacity:0.55"></div>
<div class="a" style="left:36px;top:111px;width:2px;height:1.3px;background:#569cd6;opacity:0.55"></div>
<div class="a" style="left:39px;top:111px;width:4px;height:1.3px;background:#b4b4b4;opacity:0.55"></div>
<div class="a" style="left:43px;top:111px;width:1px;height:1.3px;background:#b4b4b4;opacity:0.55"></div>
<div class="a" style="left:44px;top:111px;width:6px;height:1.3px;background:#ce9178;opacity:0.55"></div>
<div class="a" style="left:50px;top:111px;width:1px;height:1.3px;background:#b4b4b4;opacity:0.55"></div>
<div class="a" style="left:51px;top:111px;width:1px;height:1.3px;background:#b4b4b4;opacity:0.55"></div>
<div class="a" style="left:32px;top:113px;width:2px;height:1.3px;background:#569cd6;opacity:0.55"></div>
<div class="a" style="left:35px;top:113px;width:3px;height:1.3px;background:#b4b4b4;opacity:0.55"></div>
<div class="a" style="left:39px;top:113px;width:2px;height:1.3px;background:#569cd6;opacity:0.55"></div>
<div class="a" style="left:42px;top:113px;width:6px;height:1.3px;background:#b4b4b4;opacity:0.55"></div>
<div class="a" style="left:48px;top:113px;width:1px;height:1.3px;background:#b4b4b4;opacity:0.55"></div>
<div class="a" style="left:36px;top:115px;width:6px;height:1.3px;background:#b4b4b4;opacity:0.55"></div>
<div class="a" style="left:42px;top:115px;width:1px;height:1.3px;background:#b4b4b4;opacity:0.55"></div>
<div class="a" style="left:43px;top:115px;width:6px;height:1.3px;background:#b4b4b4;opacity:0.55"></div>
<div class="a" style="left:49px;top:115px;width:1px;height:1.3px;background:#b4b4b4;opacity:0.55"></div>
<div class="a" style="left:50px;top:115px;width:3px;height:1.3px;background:#b4b4b4;opacity:0.55"></div>
<div class="a" style="left:53px;top:115px;width:1px;height:1.3px;background:#b4b4b4;opacity:0.55"></div>
<div class="a" style="left:54px;top:115px;width:1px;height:1.3px;background:#b4b4b4;opacity:0.55"></div>
<div class="a" style="left:56px;top:115px;width:1px;height:1.3px;background:#b4b4b4;opacity:0.55"></div>
<div class="a" style="left:58px;top:115px;width:1px;height:1.3px;background:#b5cea8;opacity:0.55"></div>
<div class="a" style="left:28px;top:117px;width:4px;height:1.3px;background:#b4b4b4;opacity:0.55"></div>
<div class="a" style="left:32px;top:117px;width:1px;height:1.3px;background:#b4b4b4;opacity:0.55"></div>
<div class="a" style="left:33px;top:117px;width:11px;height:1.3px;background:#ce9178;opacity:0.55"></div>
<div class="a" style="left:44px;top:117px;width:1px;height:1.3px;background:#b4b4b4;opacity:0.55"></div>
<div class="a" style="left:46px;top:117px;width:1px;height:1.3px;background:#b4b4b4;opacity:0.55"></div>
<div class="a" style="left:48px;top:117px;width:6px;height:1.3px;background:#b4b4b4;opacity:0.55"></div>
<div class="a" style="left:28px;top:121px;width:4px;height:1.3px;background:#569cd6;opacity:0.55"></div>
<div class="a" style="left:32px;top:121px;width:1px;height:1.3px;background:#b4b4b4;opacity:0.55"></div>
<div class="a" style="left:33px;top:121px;width:7px;height:1.3px;background:#b4b4b4;opacity:0.55"></div>
<div class="a" style="left:40px;top:121px;width:1px;height:1.3px;background:#b4b4b4;opacity:0.55"></div>
<div class="a" style="left:41px;top:121px;width:1px;height:1.3px;background:#b4b4b4;opacity:0.55"></div>
<div class="a" style="left:42px;top:121px;width:1px;height:1.3px;background:#b5cea8;opacity:0.55"></div>
<div class="a" style="left:43px;top:121px;width:1px;height:1.3px;background:#b4b4b4;opacity:0.55"></div>
<div class="a" style="left:45px;top:121px;width:1px;height:1.3px;background:#b4b4b4;opacity:0.55"></div>
<div class="a" style="left:47px;top:121px;width:4px;height:1.3px;background:#b4b4b4;opacity:0.55"></div>
<div class="a" style="left:12px;top:125px;width:3px;height:1.3px;background:#569cd6;opacity:0.55"></div>
<div class="a" style="left:16px;top:125px;width:7px;height:1.3px;background:#b4b4b4;opacity:0.55"></div>
<div class="a" style="left:23px;top:125px;width:1px;height:1.3px;background:#b4b4b4;opacity:0.55"></div>
<div class="a" style="left:24px;top:125px;width:4px;height:1.3px;background:#569cd6;opacity:0.55"></div>
<div class="a" style="left:28px;top:125px;width:1px;height:1.3px;background:#b4b4b4;opacity:0.55"></div>
<div class="a" style="left:29px;top:125px;width:1px;height:1.3px;background:#b4b4b4;opacity:0.55"></div>
<div class="a" style="left:16px;top:127px;width:6px;height:1.3px;background:#569cd6;opacity:0.55"></div>
<div class="a" style="left:23px;top:127px;width:3px;height:1.3px;background:#b4b4b4;opacity:0.55"></div>
<div class="a" style="left:26px;top:127px;width:1px;height:1.3px;background:#b4b4b4;opacity:0.55"></div>
<div class="a" style="left:27px;top:127px;width:4px;height:1.3px;background:#569cd6;opacity:0.55"></div>
<div class="a" style="left:31px;top:127px;width:1px;height:1.3px;background:#b4b4b4;opacity:0.55"></div>
<div class="a" style="left:32px;top:127px;width:7px;height:1.3px;background:#b4b4b4;opacity:0.55"></div>
<div class="a" style="left:39px;top:127px;width:1px;height:1.3px;background:#b4b4b4;opacity:0.55"></div>
<div class="a" style="left:12px;top:131px;width:3px;height:1.3px;background:#569cd6;opacity:0.55"></div>
<div class="a" style="left:16px;top:131px;width:11px;height:1.3px;background:#b4b4b4;opacity:0.55"></div>
<div class="a" style="left:27px;top:131px;width:1px;height:1.3px;background:#b4b4b4;opacity:0.55"></div>
<div class="a" style="left:28px;top:131px;width:4px;height:1.3px;background:#569cd6;opacity:0.55"></div>
<div class="a" style="left:32px;top:131px;width:1px;height:1.3px;background:#b4b4b4;opacity:0.55"></div>
<div class="a" style="left:34px;top:131px;width:3px;height:1.3px;background:#b4b4b4;opacity:0.55"></div>
<div class="a" style="left:37px;top:131px;width:1px;height:1.3px;background:#b4b4b4;opacity:0.55"></div>
<div class="a" style="left:38px;top:131px;width:1px;height:1.3px;background:#b4b4b4;opacity:0.55"></div>
<div class="a" style="left:16px;top:133px;width:6px;height:1.3px;background:#b4b4b4;opacity:0.55"></div>
<div class="a" style="left:23px;top:133px;width:1px;height:1.3px;background:#b4b4b4;opacity:0.55"></div>
<div class="a" style="left:25px;top:133px;width:4px;height:1.3px;background:#569cd6;opacity:0.55"></div>
<div class="a" style="left:29px;top:133px;width:1px;height:1.3px;background:#b4b4b4;opacity:0.55"></div>
<div class="a" style="left:30px;top:133px;width:7px;height:1.3px;background:#b4b4b4;opacity:0.55"></div>
<div class="a" style="left:37px;top:133px;width:1px;height:1.3px;background:#b4b4b4;opacity:0.55"></div>
<div class="a" style="left:38px;top:133px;width:3px;height:1.3px;background:#b4b4b4;opacity:0.55"></div>
<div class="a" style="left:41px;top:133px;width:1px;height:1.3px;background:#b4b4b4;opacity:0.55"></div>
<div class="a" style="left:16px;top:135px;width:4px;height:1.3px;background:#b4b4b4;opacity:0.55"></div>
<div class="a" style="left:21px;top:135px;width:1px;height:1.3px;background:#b4b4b4;opacity:0.55"></div>
<div class="a" style="left:23px;top:135px;width:6px;height:1.3px;background:#b4b4b4;opacity:0.55"></div>
<div class="a" style="left:29px;top:135px;width:1px;height:1.3px;background:#b4b4b4;opacity:0.55"></div>
<div class="a" style="left:30px;top:135px;width:6px;height:1.3px;background:#ce9178;opacity:0.55"></div>
<div class="a" style="left:36px;top:135px;width:1px;height:1.3px;background:#b4b4b4;opacity:0.55"></div>
<div class="a" style="left:16px;top:139px;width:10px;height:1.3px;background:#57a64a;opacity:0.55"></div>
<div class="a" style="left:16px;top:141px;width:8px;height:1.3px;background:#b4b4b4;opacity:0.55"></div>
<div class="a" style="left:25px;top:141px;width:1px;height:1.3px;background:#b4b4b4;opacity:0.55"></div>
<div class="a" style="left:27px;top:141px;width:4px;height:1.3px;background:#569cd6;opacity:0.55"></div>
<div class="a" style="left:31px;top:141px;width:1px;height:1.3px;background:#b4b4b4;opacity:0.55"></div>
<div class="a" style="left:32px;top:141px;width:9px;height:1.3px;background:#b4b4b4;opacity:0.55"></div>
<div class="a" style="left:41px;top:141px;width:1px;height:1.3px;background:#b4b4b4;opacity:0.55"></div>
<div class="a" style="left:20px;top:143px;width:4px;height:1.3px;background:#b4b4b4;opacity:0.55"></div>
<div class="a" style="left:24px;top:143px;width:1px;height:1.3px;background:#b4b4b4;opacity:0.55"></div>
<div class="a" style="left:20px;top:145px;width:10px;height:1.3px;background:#b4b4b4;opacity:0.55"></div>
<div class="a" style="left:30px;top:145px;width:1px;height:1.3px;background:#b4b4b4;opacity:0.55"></div>
<div class="a" style="left:31px;top:145px;width:4px;height:1.3px;background:#569cd6;opacity:0.55"></div>
<div class="a" style="left:35px;top:145px;width:1px;height:1.3px;background:#b4b4b4;opacity:0.55"></div>
<div class="a" style="left:20px;top:147px;width:7px;height:1.3px;background:#b4b4b4;opacity:0.55"></div>
<div class="a" style="left:27px;top:147px;width:1px;height:1.3px;background:#b4b4b4;opacity:0.55"></div>
<div class="a" style="left:28px;top:147px;width:12px;height:1.3px;background:#ce9178;opacity:0.55"></div>
<div class="a" style="left:40px;top:147px;width:1px;height:1.3px;background:#b4b4b4;opacity:0.55"></div>
<div class="a" style="left:20px;top:149px;width:10px;height:1.3px;background:#b4b4b4;opacity:0.55"></div>
<div class="a" style="left:30px;top:149px;width:1px;height:1.3px;background:#b4b4b4;opacity:0.55"></div>
<div class="a" style="left:31px;top:149px;width:4px;height:1.3px;background:#569cd6;opacity:0.55"></div>
<div class="a" style="left:35px;top:149px;width:1px;height:1.3px;background:#b4b4b4;opacity:0.55"></div>
<div class="a" style="left:36px;top:149px;width:10px;height:1.3px;background:#b4b4b4;opacity:0.55"></div>
<div class="a" style="left:46px;top:149px;width:1px;height:1.3px;background:#b4b4b4;opacity:0.55"></div>
<div class="a" style="left:20px;top:151px;width:14px;height:1.3px;background:#b4b4b4;opacity:0.55"></div>
<div class="a" style="left:34px;top:151px;width:1px;height:1.3px;background:#b4b4b4;opacity:0.55"></div>
<div class="a" style="left:35px;top:151px;width:4px;height:1.3px;background:#ce9178;opacity:0.55"></div>
<div class="a" style="left:16px;top:153px;width:1px;height:1.3px;background:#b4b4b4;opacity:0.55"></div>
<div class="a" style="left:16px;top:157px;width:6px;height:1.3px;background:#569cd6;opacity:0.55"></div>
<div class="a" style="left:23px;top:157px;width:1px;height:1.3px;background:#b4b4b4;opacity:0.55"></div>
<div class="a" style="left:20px;top:159px;width:11px;height:1.3px;background:#ce9178;opacity:0.55"></div>
<div class="a" style="left:31px;top:159px;width:1px;height:1.3px;background:#b4b4b4;opacity:0.55"></div>
<div class="a" style="left:33px;top:159px;width:8px;height:1.3px;background:#b4b4b4;opacity:0.55"></div>
<div class="a" style="left:41px;top:159px;width:1px;height:1.3px;background:#b4b4b4;opacity:0.55"></div>
<div class="a" style="left:42px;top:159px;width:11px;height:1.3px;background:#ce9178;opacity:0.55"></div>
<div class="a" style="left:53px;top:159px;width:1px;height:1.3px;background:#b4b4b4;opacity:0.55"></div>
<div class="a" style="left:54px;top:159px;width:1px;height:1.3px;background:#b4b4b4;opacity:0.55"></div>
<div class="a" style="left:55px;top:159px;width:7px;height:1.3px;background:#b4b4b4;opacity:0.55"></div>
<div class="a" style="left:62px;top:159px;width:1px;height:1.3px;background:#b4b4b4;opacity:0.55"></div>
<div class="a" style="left:63px;top:159px;width:1px;height:1.3px;background:#b5cea8;opacity:0.55"></div>
<div class="a" style="left:64px;top:159px;width:1px;height:1.3px;background:#b4b4b4;opacity:0.55"></div>
<div class="a" style="left:65px;top:159px;width:1px;height:1.3px;background:#b4b4b4;opacity:0.55"></div>
<div class="a" style="left:20px;top:161px;width:16px;height:1.3px;background:#ce9178;opacity:0.55"></div>
<div class="a" style="left:36px;top:161px;width:1px;height:1.3px;background:#b4b4b4;opacity:0.55"></div>
<div class="a" style="left:38px;top:161px;width:8px;height:1.3px;background:#b4b4b4;opacity:0.55"></div>
<div class="a" style="left:46px;top:161px;width:1px;height:1.3px;background:#b4b4b4;opacity:0.55"></div>
<div class="a" style="left:47px;top:161px;width:16px;height:1.3px;background:#ce9178;opacity:0.55"></div>
<div class="a" style="left:63px;top:161px;width:1px;height:1.3px;background:#b4b4b4;opacity:0.55"></div>
<div class="a" style="left:64px;top:161px;width:1px;height:1.3px;background:#b4b4b4;opacity:0.55"></div>
<div class="a" style="left:65px;top:161px;width:7px;height:1.3px;background:#b4b4b4;opacity:0.55"></div>
<div class="a" style="left:72px;top:161px;width:1px;height:1.3px;background:#b4b4b4;opacity:0.55"></div>
<div class="a" style="left:73px;top:161px;width:1px;height:1.3px;background:#b5cea8;opacity:0.55"></div>
<div class="a" style="left:74px;top:161px;width:1px;height:1.3px;background:#b4b4b4;opacity:0.55"></div>
<div class="a" style="left:75px;top:161px;width:1px;height:1.3px;background:#b4b4b4;opacity:0.55"></div>
<div class="a" style="left:20px;top:163px;width:8px;height:1.3px;background:#ce9178;opacity:0.55"></div>
<div class="a" style="left:28px;top:163px;width:1px;height:1.3px;background:#b4b4b4;opacity:0.55"></div>
<div class="a" style="left:30px;top:163px;width:5px;height:1.3px;background:#b4b4b4;opacity:0.55"></div>
<div class="a" style="left:35px;top:163px;width:1px;height:1.3px;background:#b4b4b4;opacity:0.55"></div>
<div class="a" style="left:36px;top:163px;width:6px;height:1.3px;background:#b4b4b4;opacity:0.55"></div>
<div class="a" style="left:42px;top:163px;width:1px;height:1.3px;background:#b4b4b4;opacity:0.55"></div>
<div class="a" style="left:43px;top:163px;width:6px;height:1.3px;background:#b4b4b4;opacity:0.55"></div>
<div class="a" style="left:49px;top:163px;width:1px;height:1.3px;background:#b4b4b4;opacity:0.55"></div>
<div class="a" style="left:50px;top:163px;width:11px;height:1.3px;background:#ce9178;opacity:0.55"></div>
<div class="a" style="left:61px;top:163px;width:1px;height:1.3px;background:#b4b4b4;opacity:0.55"></div>
<div class="a" style="left:62px;top:163px;width:1px;height:1.3px;background:#b4b4b4;opacity:0.55"></div>
<div class="a" style="left:64px;top:163px;width:5px;height:1.3px;background:#b4b4b4;opacity:0.55"></div>
<div class="a" style="left:69px;top:163px;width:1px;height:1.3px;background:#b4b4b4;opacity:0.55"></div>
<div class="a" style="left:70px;top:163px;width:5px;height:1.3px;background:#b4b4b4;opacity:0.55"></div>
<div class="a" style="left:75px;top:163px;width:1px;height:1.3px;background:#b4b4b4;opacity:0.55"></div>
<div class="a" style="left:76px;top:163px;width:5px;height:1.3px;background:#b4b4b4;opacity:0.55"></div>
<div class="a" style="left:81px;top:163px;width:1px;height:1.3px;background:#b4b4b4;opacity:0.55"></div>
<div class="a" style="left:16px;top:165px;width:1px;height:1.3px;background:#b4b4b4;opacity:0.55"></div>
<div class="a" style="left:8px;top:169px;width:5px;height:1.3px;background:#569cd6;opacity:0.55"></div>
<div class="a" style="left:14px;top:169px;width:20px;height:1.3px;background:#b4b4b4;opacity:0.55"></div>
<div class="a" style="left:34px;top:169px;width:1px;height:1.3px;background:#b4b4b4;opacity:0.55"></div>
<div class="a" style="left:35px;top:169px;width:2px;height:1.3px;background:#b4b4b4;opacity:0.55"></div>
<div class="a" style="left:37px;top:169px;width:1px;height:1.3px;background:#b4b4b4;opacity:0.55"></div>
<div class="a" style="left:38px;top:169px;width:6px;height:1.3px;background:#b4b4b4;opacity:0.55"></div>
<div class="a" style="left:44px;top:169px;width:1px;height:1.3px;background:#b4b4b4;opacity:0.55"></div>
<div class="a" style="left:45px;top:169px;width:1px;height:1.3px;background:#b4b4b4;opacity:0.55"></div>
<div class="a" style="left:12px;top:171px;width:2px;height:1.3px;background:#ce9178;opacity:0.55"></div>
<div class="a" style="left:14px;top:171px;width:33px;height:1.3px;background:#ce9178;opacity:0.55"></div>
<div class="a" style="left:47px;top:171px;width:2px;height:1.3px;background:#ce9178;opacity:0.55"></div>
<div class="a" style="left:12px;top:175px;width:3px;height:1.3px;background:#569cd6;opacity:0.55"></div>
<div class="a" style="left:16px;top:175px;width:8px;height:1.3px;background:#b4b4b4;opacity:0.55"></div>
<div class="a" style="left:24px;top:175px;width:1px;height:1.3px;background:#b4b4b4;opacity:0.55"></div>
<div class="a" style="left:25px;top:175px;width:4px;height:1.3px;background:#569cd6;opacity:0.55"></div>
<div class="a" style="left:29px;top:175px;width:1px;height:1.3px;background:#b4b4b4;opacity:0.55"></div>
<div class="a" style="left:31px;top:175px;width:10px;height:1.3px;background:#b4b4b4;opacity:0.55"></div>
<div class="a" style="left:41px;top:175px;width:1px;height:1.3px;background:#b4b4b4;opacity:0.55"></div>
<div class="a" style="left:43px;top:175px;width:3px;height:1.3px;background:#b4b4b4;opacity:0.55"></div>
<div class="a" style="left:46px;top:175px;width:1px;height:1.3px;background:#b4b4b4;opacity:0.55"></div>
<div class="a" style="left:48px;top:175px;width:10px;height:1.3px;background:#b4b4b4;opacity:0.55"></div>
<div class="a" style="left:58px;top:175px;width:1px;height:1.3px;background:#b4b4b4;opacity:0.55"></div>
<div class="a" style="left:60px;top:175px;width:3px;height:1.3px;background:#b4b4b4;opacity:0.55"></div>
<div class="a" style="left:63px;top:175px;width:1px;height:1.3px;background:#b4b4b4;opacity:0.55"></div>
<div class="a" style="left:64px;top:175px;width:1px;height:1.3px;background:#b4b4b4;opacity:0.55"></div>
<div class="a" style="left:16px;top:177px;width:5px;height:1.3px;background:#569cd6;opacity:0.55"></div>
<div class="a" style="left:21px;top:177px;width:1px;height:1.3px;background:#b4b4b4;opacity:0.55"></div>
<div class="a" style="left:22px;top:177px;width:1px;height:1.3px;background:#b4b4b4;opacity:0.55"></div>
<div class="a" style="left:23px;top:177px;width:1px;height:1.3px;background:#b4b4b4;opacity:0.55"></div>
<div class="a" style="left:24px;top:177px;width:8px;height:1.3px;background:#b4b4b4;opacity:0.55"></div>
<div class="a" style="left:32px;top:177px;width:1px;height:1.3px;background:#b4b4b4;opacity:0.55"></div>
<div class="a" style="left:33px;top:177px;width:1px;height:1.3px;background:#b4b4b4;opacity:0.55"></div>
<div class="a" style="left:16px;top:179px;width:4px;height:1.3px;background:#569cd6;opacity:0.55"></div>
<div class="a" style="left:20px;top:179px;width:1px;height:1.3px;background:#b4b4b4;opacity:0.55"></div>
<div class="a" style="left:21px;top:179px;width:5px;height:1.3px;background:#b4b4b4;opacity:0.55"></div>
<div class="a" style="left:27px;top:179px;width:1px;height:1.3px;background:#b4b4b4;opacity:0.55"></div>
<div class="a" style="left:29px;top:179px;width:34px;height:1.3px;background:#b4b4b4;opacity:0.55"></div>
<div class="a" style="left:63px;top:179px;width:1px;height:1.3px;background:#b4b4b4;opacity:0.55"></div>
<div class="a" style="left:64px;top:179px;width:15px;height:1.3px;background:#b4b4b4;opacity:0.55"></div>
<div class="a" style="left:79px;top:179px;width:1px;height:1.3px;background:#b4b4b4;opacity:0.55"></div>
<div class="a" style="left:80px;top:179px;width:10px;height:1.3px;background:#b4b4b4;opacity:0.55"></div>
<div class="a" style="left:90px;top:179px;width:1px;height:1.3px;background:#b4b4b4;opacity:0.55"></div>
<div class="a" style="left:20px;top:181px;width:10px;height:1.3px;background:#b4b4b4;opacity:0.55"></div>
<div class="a" style="left:30px;top:181px;width:1px;height:1.3px;background:#b4b4b4;opacity:0.55"></div>
<div class="a" style="left:31px;top:181px;width:10px;height:1.3px;background:#b4b4b4;opacity:0.55"></div>
<div class="a" style="left:41px;top:181px;width:1px;height:1.3px;background:#b4b4b4;opacity:0.55"></div>
<div class="a" style="left:43px;top:181px;width:12px;height:1.3px;background:#b4b4b4;opacity:0.55"></div>
<div class="a" style="left:55px;top:181px;width:1px;height:1.3px;background:#b4b4b4;opacity:0.55"></div>
<div class="a" style="left:56px;top:181px;width:28px;height:1.3px;background:#ce9178;opacity:0.55"></div>
<div class="a" style="left:84px;top:181px;width:1px;height:1.3px;background:#b4b4b4;opacity:0.55"></div>
<div class="a" style="left:16px;top:183px;width:4px;height:1.3px;background:#569cd6;opacity:0.55"></div>
<div class="a" style="left:20px;top:183px;width:1px;height:1.3px;background:#b4b4b4;opacity:0.55"></div>
<div class="a" style="left:21px;top:183px;width:7px;height:1.3px;background:#b4b4b4;opacity:0.55"></div>
<div class="a" style="left:29px;top:183px;width:1px;height:1.3px;background:#b4b4b4;opacity:0.55"></div>
<div class="a" style="left:31px;top:183px;width:2px;height:1.3px;background:#b4b4b4;opacity:0.55"></div>
<div class="a" style="left:33px;top:183px;width:1px;height:1.3px;background:#b4b4b4;opacity:0.55"></div>
<div class="a" style="left:34px;top:183px;width:7px;height:1.3px;background:#b4b4b4;opacity:0.55"></div>
<div class="a" style="left:41px;top:183px;width:1px;height:1.3px;background:#b4b4b4;opacity:0.55"></div>
<div class="a" style="left:42px;top:183px;width:3px;height:1.3px;background:#b5cea8;opacity:0.55"></div>
<div class="a" style="left:45px;top:183px;width:1px;height:1.3px;background:#b4b4b4;opacity:0.55"></div>
<div class="a" style="left:16px;top:185px;width:4px;height:1.3px;background:#569cd6;opacity:0.55"></div>
<div class="a" style="left:20px;top:185px;width:1px;height:1.3px;background:#b4b4b4;opacity:0.55"></div>
<div class="a" style="left:21px;top:185px;width:10px;height:1.3px;background:#b4b4b4;opacity:0.55"></div>
<div class="a" style="left:32px;top:185px;width:1px;height:1.3px;background:#b4b4b4;opacity:0.55"></div>
<div class="a" style="left:34px;top:185px;width:10px;height:1.3px;background:#b4b4b4;opacity:0.55"></div>
<div class="a" style="left:12px;top:189px;width:3px;height:1.3px;background:#569cd6;opacity:0.55"></div>
<div class="a" style="left:16px;top:189px;width:7px;height:1.3px;background:#b4b4b4;opacity:0.55"></div>
<div class="a" style="left:23px;top:189px;width:1px;height:1.3px;background:#b4b4b4;opacity:0.55"></div>
<div class="a" style="left:24px;top:189px;width:4px;height:1.3px;background:#569cd6;opacity:0.55"></div>
<div class="a" style="left:28px;top:189px;width:1px;height:1.3px;background:#b4b4b4;opacity:0.55"></div>
<div class="a" style="left:30px;top:189px;width:9px;height:1.3px;background:#b4b4b4;opacity:0.55"></div>
<div class="a" style="left:39px;top:189px;width:1px;height:1.3px;background:#b4b4b4;opacity:0.55"></div>
<div class="a" style="left:41px;top:189px;width:14px;height:1.3px;background:#b4b4b4;opacity:0.55"></div>
<div class="a" style="left:55px;top:189px;width:1px;height:1.3px;background:#b4b4b4;opacity:0.55"></div>
<div class="a" style="left:57px;top:189px;width:6px;height:1.3px;background:#b4b4b4;opacity:0.55"></div>
<div class="a" style="left:63px;top:189px;width:1px;height:1.3px;background:#b4b4b4;opacity:0.55"></div>
<div class="a" style="left:64px;top:189px;width:4px;height:1.3px;background:#569cd6;opacity:0.55"></div>
<div class="a" style="left:68px;top:189px;width:1px;height:1.3px;background:#b4b4b4;opacity:0.55"></div>
<div class="a" style="left:69px;top:189px;width:1px;height:1.3px;background:#b4b4b4;opacity:0.55"></div>
<div class="a" style="left:16px;top:191px;width:7px;height:1.3px;background:#b4b4b4;opacity:0.55"></div>
<div class="a" style="left:24px;top:191px;width:1px;height:1.3px;background:#b4b4b4;opacity:0.55"></div>
<div class="a" style="left:26px;top:191px;width:4px;height:1.3px;background:#569cd6;opacity:0.55"></div>
<div class="a" style="left:30px;top:191px;width:1px;height:1.3px;background:#b4b4b4;opacity:0.55"></div>
<div class="a" style="left:31px;top:191px;width:5px;height:1.3px;background:#b4b4b4;opacity:0.55"></div>
<div class="a" style="left:36px;top:191px;width:1px;height:1.3px;background:#b4b4b4;opacity:0.55"></div>
<div class="a" style="left:37px;top:191px;width:9px;height:1.3px;background:#b4b4b4;opacity:0.55"></div>
<div class="a" style="left:46px;top:191px;width:1px;height:1.3px;background:#b4b4b4;opacity:0.55"></div>
<div class="a" style="left:47px;top:191px;width:9px;height:1.3px;background:#b4b4b4;opacity:0.55"></div>
<div class="a" style="left:56px;top:191px;width:1px;height:1.3px;background:#b4b4b4;opacity:0.55"></div>
<div class="a" style="left:58px;top:191px;width:14px;height:1.3px;background:#b4b4b4;opacity:0.55"></div>
<div class="a" style="left:72px;top:191px;width:1px;height:1.3px;background:#b4b4b4;opacity:0.55"></div>
<div class="a" style="left:73px;top:191px;width:14px;height:1.3px;background:#b4b4b4;opacity:0.55"></div>
<div class="a" style="left:87px;top:191px;width:1px;height:1.3px;background:#b4b4b4;opacity:0.55"></div>
<div class="a" style="left:89px;top:191px;width:6px;height:1.3px;background:#b4b4b4;opacity:0.55"></div>
<div class="a" style="left:95px;top:191px;width:1px;height:1.3px;background:#b4b4b4;opacity:0.55"></div>
<div class="a" style="left:96px;top:191px;width:6px;height:1.3px;background:#b4b4b4;opacity:0.55"></div>
<div class="a" style="left:102px;top:191px;width:1px;height:1.3px;background:#b4b4b4;opacity:0.55"></div>
<div class="a" style="left:16px;top:193px;width:6px;height:1.3px;background:#569cd6;opacity:0.55"></div>
<div class="a" style="left:23px;top:193px;width:7px;height:1.3px;background:#b4b4b4;opacity:0.55"></div>
<div class="a" style="left:8px;top:197px;width:55px;height:1.3px;background:#57a64a;opacity:0.55"></div>
<div class="a" style="left:8px;top:199px;width:3px;height:1.3px;background:#569cd6;opacity:0.55"></div>
<div class="a" style="left:12px;top:199px;width:11px;height:1.3px;background:#b4b4b4;opacity:0.55"></div>
<div class="a" style="left:23px;top:199px;width:1px;height:1.3px;background:#b4b4b4;opacity:0.55"></div>
<div class="a" style="left:24px;top:199px;width:4px;height:1.3px;background:#b4b4b4;opacity:0.55"></div>
<div class="a" style="left:28px;top:199px;width:1px;height:1.3px;background:#b4b4b4;opacity:0.55"></div>
<div class="a" style="left:30px;top:199px;width:4px;height:1.3px;background:#b4b4b4;opacity:0.55"></div>
<div class="a" style="left:34px;top:199px;width:1px;height:1.3px;background:#b4b4b4;opacity:0.55"></div>
<div class="a" style="left:36px;top:199px;width:1px;height:1.3px;background:#b4b4b4;opacity:0.55"></div>
<div class="a" style="left:37px;top:199px;width:1px;height:1.3px;background:#b4b4b4;opacity:0.55"></div>
<div class="a" style="left:39px;top:199px;width:4px;height:1.3px;background:#b4b4b4;opacity:0.55"></div>
<div class="a" style="left:43px;top:199px;width:1px;height:1.3px;background:#b4b4b4;opacity:0.55"></div>
<div class="a" style="left:44px;top:199px;width:3px;height:1.3px;background:#b4b4b4;opacity:0.55"></div>
<div class="a" style="left:47px;top:199px;width:1px;height:1.3px;background:#b4b4b4;opacity:0.55"></div>
<div class="a" style="left:49px;top:199px;width:3px;height:1.3px;background:#b4b4b4;opacity:0.55"></div>
<div class="a" style="left:52px;top:199px;width:1px;height:1.3px;background:#b4b4b4;opacity:0.55"></div>
<div class="a" style="left:53px;top:199px;width:1px;height:1.3px;background:#b4b4b4;opacity:0.55"></div>
<div class="a" style="left:12px;top:201px;width:4px;height:1.3px;background:#569cd6;opacity:0.55"></div>
<div class="a" style="left:17px;top:201px;width:4px;height:1.3px;background:#b4b4b4;opacity:0.55"></div>
<div class="a" style="left:21px;top:201px;width:1px;height:1.3px;background:#b4b4b4;opacity:0.55"></div>
<div class="a" style="left:22px;top:201px;width:4px;height:1.3px;background:#b4b4b4;opacity:0.55"></div>
<div class="a" style="left:26px;top:201px;width:1px;height:1.3px;background:#b4b4b4;opacity:0.55"></div>
<div class="a" style="left:28px;top:201px;width:3px;height:1.3px;background:#ce9178;opacity:0.55"></div>
<div class="a" style="left:31px;top:201px;width:1px;height:1.3px;background:#b4b4b4;opacity:0.55"></div>
<div class="a" style="left:33px;top:201px;width:2px;height:1.3px;background:#569cd6;opacity:0.55"></div>
<div class="a" style="left:36px;top:201px;width:1px;height:1.3px;background:#b4b4b4;opacity:0.55"></div>
<div class="a" style="left:37px;top:201px;width:1px;height:1.3px;background:#b4b4b4;opacity:0.55"></div>
<div class="a" style="left:16px;top:203px;width:6px;height:1.3px;background:#569cd6;opacity:0.55"></div>
<div class="a" style="left:23px;top:203px;width:4px;height:1.3px;background:#b4b4b4;opacity:0.55"></div>
<div class="a" style="left:27px;top:203px;width:1px;height:1.3px;background:#b4b4b4;opacity:0.55"></div>
<div class="a" style="left:28px;top:203px;width:4px;height:1.3px;background:#b4b4b4;opacity:0.55"></div>
<div class="a" style="left:32px;top:203px;width:1px;height:1.3px;background:#b4b4b4;opacity:0.55"></div>
<div class="a" style="left:33px;top:203px;width:1px;height:1.3px;background:#b4b4b4;opacity:0.55"></div>
<div class="a" style="left:34px;top:203px;width:1px;height:1.3px;background:#b4b4b4;opacity:0.55"></div>
<div class="a" style="left:12px;top:207px;width:48px;height:1.3px;background:#57a64a;opacity:0.55"></div>
<div class="a" style="left:12px;top:209px;width:6px;height:1.3px;background:#b4b4b4;opacity:0.55"></div>
<div class="a" style="left:19px;top:209px;width:1px;height:1.3px;background:#b4b4b4;opacity:0.55"></div>
<div class="a" style="left:21px;top:209px;width:1px;height:1.3px;background:#b4b4b4;opacity:0.55"></div>
<div class="a" style="left:22px;top:209px;width:1px;height:1.3px;background:#b4b4b4;opacity:0.55"></div>
<div class="a" style="left:12px;top:211px;width:3px;height:1.3px;background:#569cd6;opacity:0.55"></div>
<div class="a" style="left:16px;top:211px;width:1px;height:1.3px;background:#b4b4b4;opacity:0.55"></div>
<div class="a" style="left:17px;top:211px;width:1px;height:1.3px;background:#b4b4b4;opacity:0.55"></div>
<div class="a" style="left:19px;top:211px;width:3px;height:1.3px;background:#b4b4b4;opacity:0.55"></div>
<div class="a" style="left:23px;top:211px;width:2px;height:1.3px;background:#569cd6;opacity:0.55"></div>
<div class="a" style="left:26px;top:211px;width:9px;height:1.3px;background:#b4b4b4;opacity:0.55"></div>
<div class="a" style="left:35px;top:211px;width:1px;height:1.3px;background:#b4b4b4;opacity:0.55"></div>
<div class="a" style="left:36px;top:211px;width:6px;height:1.3px;background:#b4b4b4;opacity:0.55"></div>
<div class="a" style="left:42px;top:211px;width:1px;height:1.3px;background:#b4b4b4;opacity:0.55"></div>
<div class="a" style="left:43px;top:211px;width:3px;height:1.3px;background:#b4b4b4;opacity:0.55"></div>
<div class="a" style="left:46px;top:211px;width:1px;height:1.3px;background:#b4b4b4;opacity:0.55"></div>
<div class="a" style="left:47px;top:211px;width:1px;height:1.3px;background:#b4b4b4;opacity:0.55"></div>
<div class="a" style="left:48px;top:211px;width:1px;height:1.3px;background:#b4b4b4;opacity:0.55"></div>
<div class="a" style="left:49px;top:211px;width:1px;height:1.3px;background:#b4b4b4;opacity:0.55"></div>
<div class="a" style="left:50px;top:211px;width:1px;height:1.3px;background:#b4b4b4;opacity:0.55"></div>
<div class="a" style="left:16px;top:213px;width:6px;height:1.3px;background:#b4b4b4;opacity:0.55"></div>
<div class="a" style="left:22px;top:213px;width:1px;height:1.3px;background:#b4b4b4;opacity:0.55"></div>
<div class="a" style="left:23px;top:213px;width:3px;height:1.3px;background:#b4b4b4;opacity:0.55"></div>
<div class="a" style="left:26px;top:213px;width:1px;height:1.3px;background:#b4b4b4;opacity:0.55"></div>
<div class="a" style="left:28px;top:213px;width:1px;height:1.3px;background:#b4b4b4;opacity:0.55"></div>
<div class="a" style="left:30px;top:213px;width:1px;height:1.3px;background:#b4b4b4;opacity:0.55"></div>
<div class="a" style="left:12px;top:215px;width:6px;height:1.3px;background:#569cd6;opacity:0.55"></div>
<div class="a" style="left:19px;top:215px;width:6px;height:1.3px;background:#b4b4b4;opacity:0.55"></div>
<div class="a" style="left:8px;top:219px;width:3px;height:1.3px;background:#569cd6;opacity:0.55"></div>
<div class="a" style="left:12px;top:219px;width:11px;height:1.3px;background:#b4b4b4;opacity:0.55"></div>
<div class="a" style="left:23px;top:219px;width:1px;height:1.3px;background:#b4b4b4;opacity:0.55"></div>
<div class="a" style="left:24px;top:219px;width:5px;height:1.3px;background:#b4b4b4;opacity:0.55"></div>
<div class="a" style="left:29px;top:219px;width:1px;height:1.3px;background:#b4b4b4;opacity:0.55"></div>
<div class="a" style="left:31px;top:219px;width:10px;height:1.3px;background:#b4b4b4;opacity:0.55"></div>
<div class="a" style="left:41px;top:219px;width:1px;height:1.3px;background:#b4b4b4;opacity:0.55"></div>
<div class="a" style="left:43px;top:219px;width:9px;height:1.3px;background:#b4b4b4;opacity:0.55"></div>
<div class="a" style="left:52px;top:219px;width:1px;height:1.3px;background:#b4b4b4;opacity:0.55"></div>
<div class="a" style="left:54px;top:219px;width:9px;height:1.3px;background:#b4b4b4;opacity:0.55"></div>
<div class="a" style="left:63px;top:219px;width:1px;height:1.3px;background:#b4b4b4;opacity:0.55"></div>
<div class="a" style="left:65px;top:219px;width:6px;height:1.3px;background:#b4b4b4;opacity:0.55"></div>
<div class="a" style="left:71px;top:219px;width:1px;height:1.3px;background:#b4b4b4;opacity:0.55"></div>
<div class="a" style="left:73px;top:219px;width:5px;height:1.3px;background:#b4b4b4;opacity:0.55"></div>
<div class="a" style="left:78px;top:219px;width:1px;height:1.3px;background:#b4b4b4;opacity:0.55"></div>
<div class="a" style="left:79px;top:219px;width:1px;height:1.3px;background:#b4b4b4;opacity:0.55"></div>
<div class="a" style="left:12px;top:221px;width:5px;height:1.3px;background:#b4b4b4;opacity:0.55"></div>
<div class="a" style="left:17px;top:221px;width:1px;height:1.3px;background:#b4b4b4;opacity:0.55"></div>
<div class="a" style="left:18px;top:221px;width:5px;height:1.3px;background:#b4b4b4;opacity:0.55"></div>
<div class="a" style="left:23px;top:221px;width:1px;height:1.3px;background:#b4b4b4;opacity:0.55"></div>
<div class="a" style="left:24px;top:221px;width:1px;height:1.3px;background:#b4b4b4;opacity:0.55"></div>
<div class="a" style="left:12px;top:223px;width:10px;height:1.3px;background:#b4b4b4;opacity:0.55"></div>
<div class="a" style="left:23px;top:223px;width:1px;height:1.3px;background:#b4b4b4;opacity:0.55"></div>
<div class="a" style="left:25px;top:223px;width:1px;height:1.3px;background:#b5cea8;opacity:0.55"></div>
<div class="a" style="left:12px;top:225px;width:8px;height:1.3px;background:#b4b4b4;opacity:0.55"></div>
<div class="a" style="left:21px;top:225px;width:1px;height:1.3px;background:#b4b4b4;opacity:0.55"></div>
<div class="a" style="left:23px;top:225px;width:4px;height:1.3px;background:#b4b4b4;opacity:0.55"></div>
<div class="a" style="left:27px;top:225px;width:1px;height:1.3px;background:#b4b4b4;opacity:0.55"></div>
<div class="a" style="left:28px;top:225px;width:10px;height:1.3px;background:#b4b4b4;opacity:0.55"></div>
<div class="a" style="left:38px;top:225px;width:1px;height:1.3px;background:#b4b4b4;opacity:0.55"></div>
<div class="a" style="left:40px;top:225px;width:4px;height:1.3px;background:#b4b4b4;opacity:0.55"></div>
<div class="a" style="left:44px;top:225px;width:1px;height:1.3px;background:#b4b4b4;opacity:0.55"></div>
<div class="a" style="left:45px;top:225px;width:10px;height:1.3px;background:#ce9178;opacity:0.55"></div>
<div class="a" style="left:55px;top:225px;width:1px;height:1.3px;background:#b4b4b4;opacity:0.55"></div>
<div class="a" style="left:12px;top:227px;width:3px;height:1.3px;background:#569cd6;opacity:0.55"></div>
<div class="a" style="left:16px;top:227px;width:5px;height:1.3px;background:#b4b4b4;opacity:0.55"></div>
<div class="a" style="left:22px;top:227px;width:2px;height:1.3px;background:#569cd6;opacity:0.55"></div>
<div class="a" style="left:25px;top:227px;width:8px;height:1.3px;background:#b4b4b4;opacity:0.55"></div>
<div class="a" style="left:33px;top:227px;width:1px;height:1.3px;background:#b4b4b4;opacity:0.55"></div>
<div class="a" style="left:16px;top:229px;width:9px;height:1.3px;background:#b4b4b4;opacity:0.55"></div>
<div class="a" style="left:25px;top:229px;width:1px;height:1.3px;background:#b4b4b4;opacity:0.55"></div>
<div class="a" style="left:26px;top:229px;width:9px;height:1.3px;background:#b4b4b4;opacity:0.55"></div>
<div class="a" style="left:35px;top:229px;width:1px;height:1.3px;background:#b4b4b4;opacity:0.55"></div>
<div class="a" style="left:36px;top:229px;width:1px;height:1.3px;background:#b4b4b4;opacity:0.55"></div>
<div class="a" style="left:16px;top:233px;width:9px;height:1.3px;background:#b4b4b4;opacity:0.55"></div>
<div class="a" style="left:26px;top:233px;width:1px;height:1.3px;background:#b4b4b4;opacity:0.55"></div>
<div class="a" style="left:28px;top:233px;width:5px;height:1.3px;background:#b4b4b4;opacity:0.55"></div>
<div class="a" style="left:33px;top:233px;width:1px;height:1.3px;background:#b4b4b4;opacity:0.55"></div>
<div class="a" style="left:34px;top:233px;width:11px;height:1.3px;background:#ce9178;opacity:0.55"></div>
<div class="a" style="left:45px;top:233px;width:1px;height:1.3px;background:#b4b4b4;opacity:0.55"></div>
<div class="a" style="left:46px;top:233px;width:1px;height:1.3px;background:#b4b4b4;opacity:0.55"></div>
<div class="a" style="left:47px;top:233px;width:2px;height:1.3px;background:#b4b4b4;opacity:0.55"></div>
<div class="a" style="left:49px;top:233px;width:1px;height:1.3px;background:#b4b4b4;opacity:0.55"></div>
<div class="a" style="left:50px;top:233px;width:6px;height:1.3px;background:#b4b4b4;opacity:0.55"></div>
<div class="a" style="left:56px;top:233px;width:1px;height:1.3px;background:#b4b4b4;opacity:0.55"></div>
<div class="a" style="left:16px;top:235px;width:14px;height:1.3px;background:#b4b4b4;opacity:0.55"></div>
<div class="a" style="left:31px;top:235px;width:1px;height:1.3px;background:#b4b4b4;opacity:0.55"></div>
<div class="a" style="left:33px;top:235px;width:5px;height:1.3px;background:#b4b4b4;opacity:0.55"></div>
<div class="a" style="left:38px;top:235px;width:1px;height:1.3px;background:#b4b4b4;opacity:0.55"></div>
<div class="a" style="left:39px;top:235px;width:16px;height:1.3px;background:#ce9178;opacity:0.55"></div>
<div class="a" style="left:55px;top:235px;width:1px;height:1.3px;background:#b4b4b4;opacity:0.55"></div>
<div class="a" style="left:56px;top:235px;width:1px;height:1.3px;background:#b4b4b4;opacity:0.55"></div>
<div class="a" style="left:57px;top:235px;width:2px;height:1.3px;background:#b4b4b4;opacity:0.55"></div>
<div class="a" style="left:59px;top:235px;width:1px;height:1.3px;background:#b4b4b4;opacity:0.55"></div>
<div class="a" style="left:60px;top:235px;width:6px;height:1.3px;background:#b4b4b4;opacity:0.55"></div>
<div class="a" style="left:66px;top:235px;width:1px;height:1.3px;background:#b4b4b4;opacity:0.55"></div>
<div class="a" style="left:16px;top:237px;width:6px;height:1.3px;background:#b4b4b4;opacity:0.55"></div>
<div class="a" style="left:23px;top:237px;width:1px;height:1.3px;background:#b4b4b4;opacity:0.55"></div>
<div class="a" style="left:25px;top:237px;width:5px;height:1.3px;background:#b4b4b4;opacity:0.55"></div>
<div class="a" style="left:30px;top:237px;width:1px;height:1.3px;background:#b4b4b4;opacity:0.55"></div>
<div class="a" style="left:31px;top:237px;width:8px;height:1.3px;background:#ce9178;opacity:0.55"></div>
<div class="a" style="left:39px;top:237px;width:1px;height:1.3px;background:#b4b4b4;opacity:0.55"></div>
<div class="a" style="left:40px;top:237px;width:1px;height:1.3px;background:#b4b4b4;opacity:0.55"></div>
<div class="a" style="left:41px;top:237px;width:2px;height:1.3px;background:#b4b4b4;opacity:0.55"></div>
<div class="a" style="left:43px;top:237px;width:1px;height:1.3px;background:#b4b4b4;opacity:0.55"></div>
<div class="a" style="left:44px;top:237px;width:6px;height:1.3px;background:#b4b4b4;opacity:0.55"></div>
<div class="a" style="left:50px;top:237px;width:1px;height:1.3px;background:#b4b4b4;opacity:0.55"></div>
<div class="a" style="left:16px;top:241px;width:7px;height:1.3px;background:#b4b4b4;opacity:0.55"></div>
<div class="a" style="left:24px;top:241px;width:1px;height:1.3px;background:#b4b4b4;opacity:0.55"></div>
<div class="a" style="left:26px;top:241px;width:5px;height:1.3px;background:#b4b4b4;opacity:0.55"></div>
<div class="a" style="left:31px;top:241px;width:1px;height:1.3px;background:#b4b4b4;opacity:0.55"></div>
<div class="a" style="left:32px;top:241px;width:9px;height:1.3px;background:#b4b4b4;opacity:0.55"></div>
<div class="a" style="left:41px;top:241px;width:1px;height:1.3px;background:#b4b4b4;opacity:0.55"></div>
<div class="a" style="left:43px;top:241px;width:14px;height:1.3px;background:#b4b4b4;opacity:0.55"></div>
<div class="a" style="left:57px;top:241px;width:1px;height:1.3px;background:#b4b4b4;opacity:0.55"></div>
<div class="a" style="left:59px;top:241px;width:6px;height:1.3px;background:#b4b4b4;opacity:0.55"></div>
<div class="a" style="left:65px;top:241px;width:1px;height:1.3px;background:#b4b4b4;opacity:0.55"></div>
<div class="a" style="left:16px;top:243px;width:4px;height:1.3px;background:#b4b4b4;opacity:0.55"></div>
<div class="a" style="left:21px;top:243px;width:1px;height:1.3px;background:#b4b4b4;opacity:0.55"></div>
<div class="a" style="left:23px;top:243px;width:7px;height:1.3px;background:#b4b4b4;opacity:0.55"></div>
<div class="a" style="left:30px;top:243px;width:1px;height:1.3px;background:#b4b4b4;opacity:0.55"></div>
<div class="a" style="left:31px;top:243px;width:4px;height:1.3px;background:#b4b4b4;opacity:0.55"></div>
<div class="a" style="left:16px;top:247px;width:4px;height:1.3px;background:#b4b4b4;opacity:0.55"></div>
<div class="a" style="left:20px;top:247px;width:1px;height:1.3px;background:#b4b4b4;opacity:0.55"></div>
<div class="a" style="left:21px;top:247px;width:8px;height:1.3px;background:#b4b4b4;opacity:0.55"></div>
<div class="a" style="left:29px;top:247px;width:1px;height:1.3px;background:#b4b4b4;opacity:0.55"></div>
<div class="a" style="left:30px;top:247px;width:1px;height:1.3px;background:#b4b4b4;opacity:0.55"></div>
<div class="a" style="left:16px;top:249px;width:9px;height:1.3px;background:#b4b4b4;opacity:0.55"></div>
<div class="a" style="left:25px;top:249px;width:1px;height:1.3px;background:#b4b4b4;opacity:0.55"></div>
<div class="a" style="left:26px;top:249px;width:4px;height:1.3px;background:#b4b4b4;opacity:0.55"></div>
<div class="a" style="left:30px;top:249px;width:1px;height:1.3px;background:#b4b4b4;opacity:0.55"></div>
<div class="a" style="left:31px;top:249px;width:1px;height:1.3px;background:#b4b4b4;opacity:0.55"></div>
<div class="a" style="left:16px;top:251px;width:9px;height:1.3px;background:#b4b4b4;opacity:0.55"></div>
<div class="a" style="left:25px;top:251px;width:1px;height:1.3px;background:#b4b4b4;opacity:0.55"></div>
<div class="a" style="left:26px;top:251px;width:4px;height:1.3px;background:#b4b4b4;opacity:0.55"></div>
<div class="a" style="left:30px;top:251px;width:1px;height:1.3px;background:#b4b4b4;opacity:0.55"></div>
<div class="a" style="left:31px;top:251px;width:1px;height:1.3px;background:#b4b4b4;opacity:0.55"></div>
<div class="a" style="left:16px;top:255px;width:10px;height:1.3px;background:#b4b4b4;opacity:0.55"></div>
<div class="a" style="left:27px;top:255px;width:1px;height:1.3px;background:#b4b4b4;opacity:0.55"></div>
<div class="a" style="left:28px;top:255px;width:1px;height:1.3px;background:#b4b4b4;opacity:0.55"></div>
<div class="a" style="left:30px;top:255px;width:4px;height:1.3px;background:#b4b4b4;opacity:0.55"></div>
<div class="a" style="left:34px;top:255px;width:1px;height:1.3px;background:#b4b4b4;opacity:0.55"></div>
<div class="a" style="left:35px;top:255px;width:4px;height:1.3px;background:#b4b4b4;opacity:0.55"></div>
<div class="a" style="left:39px;top:255px;width:1px;height:1.3px;background:#b4b4b4;opacity:0.55"></div>
<div class="a" style="left:40px;top:255px;width:1px;height:1.3px;background:#b4b4b4;opacity:0.55"></div>
<div class="a" style="left:16px;top:257px;width:8px;height:1.3px;background:#b4b4b4;opacity:0.55"></div>
<div class="a" style="left:24px;top:257px;width:1px;height:1.3px;background:#b4b4b4;opacity:0.55"></div>
<div class="a" style="left:25px;top:257px;width:11px;height:1.3px;background:#b4b4b4;opacity:0.55"></div>
<div class="a" style="left:36px;top:257px;width:1px;height:1.3px;background:#b4b4b4;opacity:0.55"></div>
<div class="a" style="left:37px;top:257px;width:1px;height:1.3px;background:#b4b4b4;opacity:0.55"></div>
<div class="a" style="left:38px;top:257px;width:6px;height:1.3px;background:#ce9178;opacity:0.55"></div>
<div class="a" style="left:44px;top:257px;width:1px;height:1.3px;background:#b4b4b4;opacity:0.55"></div>
<div class="a" style="left:46px;top:257px;width:1px;height:1.3px;background:#b4b4b4;opacity:0.55"></div>
<div class="a" style="left:47px;top:257px;width:19px;height:1.3px;background:#ce9178;opacity:0.55"></div>
<div class="a" style="left:66px;top:257px;width:1px;height:1.3px;background:#b4b4b4;opacity:0.55"></div>
<div class="a" style="left:67px;top:257px;width:1px;height:1.3px;background:#b4b4b4;opacity:0.55"></div>
<div class="a" style="left:12px;top:261px;width:6px;height:1.3px;background:#569cd6;opacity:0.55"></div>
<div class="a" style="left:19px;top:261px;width:10px;height:1.3px;background:#b4b4b4;opacity:0.55"></div>
<div class="a" style="left:30px;top:261px;width:1px;height:1.3px;background:#b4b4b4;opacity:0.55"></div>
<div class="a" style="left:32px;top:261px;width:3px;height:1.3px;background:#b4b4b4;opacity:0.55"></div>
<div class="a" style="left:35px;top:261px;width:1px;height:1.3px;background:#b4b4b4;opacity:0.55"></div>
<div class="a" style="left:36px;top:261px;width:10px;height:1.3px;background:#b4b4b4;opacity:0.55"></div>
<div class="a" style="left:46px;top:261px;width:1px;height:1.3px;background:#b4b4b4;opacity:0.55"></div>
<div class="a" style="left:8px;top:265px;width:3px;height:1.3px;background:#569cd6;opacity:0.55"></div>
<div class="a" style="left:12px;top:265px;width:8px;height:1.3px;background:#b4b4b4;opacity:0.55"></div>
<div class="a" style="left:20px;top:265px;width:1px;height:1.3px;background:#b4b4b4;opacity:0.55"></div>
<div class="a" style="left:21px;top:265px;width:5px;height:1.3px;background:#b4b4b4;opacity:0.55"></div>
<div class="a" style="left:26px;top:265px;width:1px;height:1.3px;background:#b4b4b4;opacity:0.55"></div>
<div class="a" style="left:28px;top:265px;width:10px;height:1.3px;background:#b4b4b4;opacity:0.55"></div>
<div class="a" style="left:38px;top:265px;width:1px;height:1.3px;background:#b4b4b4;opacity:0.55"></div>
<div class="a" style="left:40px;top:265px;width:6px;height:1.3px;background:#b4b4b4;opacity:0.55"></div>
<div class="a" style="left:46px;top:265px;width:1px;height:1.3px;background:#b4b4b4;opacity:0.55"></div>
<div class="a" style="left:48px;top:265px;width:9px;height:1.3px;background:#b4b4b4;opacity:0.55"></div>
<div class="a" style="left:57px;top:265px;width:1px;height:1.3px;background:#b4b4b4;opacity:0.55"></div>
<div class="a" style="left:58px;top:265px;width:9px;height:1.3px;background:#b4b4b4;opacity:0.55"></div>
<div class="a" style="left:67px;top:265px;width:1px;height:1.3px;background:#b4b4b4;opacity:0.55"></div>
<div class="a" style="left:68px;top:265px;width:1px;height:1.3px;background:#b4b4b4;opacity:0.55"></div>
<div class="a" style="left:12px;top:267px;width:5px;height:1.3px;background:#b4b4b4;opacity:0.55"></div>
<div class="a" style="left:17px;top:267px;width:1px;height:1.3px;background:#b4b4b4;opacity:0.55"></div>
<div class="a" style="left:18px;top:267px;width:4px;height:1.3px;background:#b4b4b4;opacity:0.55"></div>
<div class="a" style="left:22px;top:267px;width:1px;height:1.3px;background:#b4b4b4;opacity:0.55"></div>
<div class="a" style="left:23px;top:267px;width:1px;height:1.3px;background:#b4b4b4;opacity:0.55"></div>
<div class="a" style="left:12px;top:269px;width:9px;height:1.3px;background:#b4b4b4;opacity:0.55"></div>
<div class="a" style="left:22px;top:269px;width:1px;height:1.3px;background:#b4b4b4;opacity:0.55"></div>
<div class="a" style="left:24px;top:269px;width:1px;height:1.3px;background:#b4b4b4;opacity:0.55"></div>
<div class="a" style="left:25px;top:269px;width:1px;height:1.3px;background:#b4b4b4;opacity:0.55"></div>
<div class="a" style="left:12px;top:271px;width:10px;height:1.3px;background:#b4b4b4;opacity:0.55"></div>
<div class="a" style="left:23px;top:271px;width:1px;height:1.3px;background:#b4b4b4;opacity:0.55"></div>
<div class="a" style="left:25px;top:271px;width:1px;height:1.3px;background:#b4b4b4;opacity:0.55"></div>
<div class="a" style="left:26px;top:271px;width:1px;height:1.3px;background:#b4b4b4;opacity:0.55"></div>
<div class="a" style="left:12px;top:273px;width:10px;height:1.3px;background:#b4b4b4;opacity:0.55"></div>
<div class="a" style="left:23px;top:273px;width:1px;height:1.3px;background:#b4b4b4;opacity:0.55"></div>
<div class="a" style="left:25px;top:273px;width:1px;height:1.3px;background:#b5cea8;opacity:0.55"></div>
<div class="a" style="left:12px;top:277px;width:4px;height:1.3px;background:#569cd6;opacity:0.55"></div>
<div class="a" style="left:17px;top:277px;width:5px;height:1.3px;background:#b4b4b4;opacity:0.55"></div>
<div class="a" style="left:22px;top:277px;width:1px;height:1.3px;background:#b4b4b4;opacity:0.55"></div>
<div class="a" style="left:23px;top:277px;width:7px;height:1.3px;background:#b4b4b4;opacity:0.55"></div>
<div class="a" style="left:30px;top:277px;width:1px;height:1.3px;background:#b4b4b4;opacity:0.55"></div>
<div class="a" style="left:31px;top:277px;width:1px;height:1.3px;background:#b4b4b4;opacity:0.55"></div>
<div class="a" style="left:32px;top:277px;width:1px;height:1.3px;background:#b4b4b4;opacity:0.55"></div>
<div class="a" style="left:16px;top:279px;width:3px;height:1.3px;background:#569cd6;opacity:0.55"></div>
<div class="a" style="left:20px;top:279px;width:5px;height:1.3px;background:#b4b4b4;opacity:0.55"></div>
<div class="a" style="left:26px;top:279px;width:2px;height:1.3px;background:#569cd6;opacity:0.55"></div>
<div class="a" style="left:29px;top:279px;width:4px;height:1.3px;background:#b4b4b4;opacity:0.55"></div>
<div class="a" style="left:33px;top:279px;width:1px;height:1.3px;background:#b4b4b4;opacity:0.55"></div>
<div class="a" style="left:34px;top:279px;width:10px;height:1.3px;background:#b4b4b4;opacity:0.55"></div>
<div class="a" style="left:44px;top:279px;width:1px;height:1.3px;background:#b4b4b4;opacity:0.55"></div>
<div class="a" style="left:46px;top:279px;width:4px;height:1.3px;background:#b4b4b4;opacity:0.55"></div>
<div class="a" style="left:50px;top:279px;width:1px;height:1.3px;background:#b4b4b4;opacity:0.55"></div>
<div class="a" style="left:51px;top:279px;width:12px;height:1.3px;background:#ce9178;opacity:0.55"></div>
<div class="a" style="left:63px;top:279px;width:1px;height:1.3px;background:#b4b4b4;opacity:0.55"></div>
<div class="a" style="left:64px;top:279px;width:1px;height:1.3px;background:#b4b4b4;opacity:0.55"></div>
<div class="a" style="left:20px;top:281px;width:9px;height:1.3px;background:#b4b4b4;opacity:0.55"></div>
<div class="a" style="left:30px;top:281px;width:1px;height:1.3px;background:#b4b4b4;opacity:0.55"></div>
<div class="a" style="left:32px;top:281px;width:5px;height:1.3px;background:#b4b4b4;opacity:0.55"></div>
<div class="a" style="left:37px;top:281px;width:1px;height:1.3px;background:#b4b4b4;opacity:0.55"></div>
<div class="a" style="left:38px;top:281px;width:11px;height:1.3px;background:#ce9178;opacity:0.55"></div>
<div class="a" style="left:49px;top:281px;width:1px;height:1.3px;background:#b4b4b4;opacity:0.55"></div>
<div class="a" style="left:50px;top:281px;width:1px;height:1.3px;background:#b4b4b4;opacity:0.55"></div>
<div class="a" style="left:51px;top:281px;width:2px;height:1.3px;background:#b4b4b4;opacity:0.55"></div>
<div class="a" style="left:53px;top:281px;width:1px;height:1.3px;background:#b4b4b4;opacity:0.55"></div>
<div class="a" style="left:54px;top:281px;width:6px;height:1.3px;background:#b4b4b4;opacity:0.55"></div>
<div class="a" style="left:60px;top:281px;width:1px;height:1.3px;background:#b4b4b4;opacity:0.55"></div>
<div class="a" style="left:20px;top:283px;width:14px;height:1.3px;background:#b4b4b4;opacity:0.55"></div>
<div class="a" style="left:35px;top:283px;width:1px;height:1.3px;background:#b4b4b4;opacity:0.55"></div>
<div class="a" style="left:37px;top:283px;width:5px;height:1.3px;background:#b4b4b4;opacity:0.55"></div>
<div class="a" style="left:42px;top:283px;width:1px;height:1.3px;background:#b4b4b4;opacity:0.55"></div>
<div class="a" style="left:43px;top:283px;width:16px;height:1.3px;background:#ce9178;opacity:0.55"></div>
<div class="a" style="left:59px;top:283px;width:1px;height:1.3px;background:#b4b4b4;opacity:0.55"></div>
<div class="a" style="left:60px;top:283px;width:1px;height:1.3px;background:#b4b4b4;opacity:0.55"></div>
<div class="a" style="left:61px;top:283px;width:2px;height:1.3px;background:#b4b4b4;opacity:0.55"></div>
<div class="a" style="left:63px;top:283px;width:1px;height:1.3px;background:#b4b4b4;opacity:0.55"></div>
<div class="a" style="left:64px;top:283px;width:6px;height:1.3px;background:#b4b4b4;opacity:0.55"></div>
<div class="a" style="left:70px;top:283px;width:1px;height:1.3px;background:#b4b4b4;opacity:0.55"></div>
<div class="a" style="left:20px;top:285px;width:6px;height:1.3px;background:#b4b4b4;opacity:0.55"></div>
<div class="a" style="left:27px;top:285px;width:1px;height:1.3px;background:#b4b4b4;opacity:0.55"></div>
<div class="a" style="left:29px;top:285px;width:5px;height:1.3px;background:#b4b4b4;opacity:0.55"></div>
<div class="a" style="left:34px;top:285px;width:1px;height:1.3px;background:#b4b4b4;opacity:0.55"></div>
<div class="a" style="left:35px;top:285px;width:8px;height:1.3px;background:#ce9178;opacity:0.55"></div>
<div class="a" style="left:43px;top:285px;width:1px;height:1.3px;background:#b4b4b4;opacity:0.55"></div>
<div class="a" style="left:44px;top:285px;width:1px;height:1.3px;background:#b4b4b4;opacity:0.55"></div>
<div class="a" style="left:45px;top:285px;width:2px;height:1.3px;background:#b4b4b4;opacity:0.55"></div>
<div class="a" style="left:47px;top:285px;width:1px;height:1.3px;background:#b4b4b4;opacity:0.55"></div>
<div class="a" style="left:48px;top:285px;width:6px;height:1.3px;background:#b4b4b4;opacity:0.55"></div>
<div class="a" style="left:54px;top:285px;width:1px;height:1.3px;background:#b4b4b4;opacity:0.55"></div>
<div class="a" style="left:20px;top:289px;width:7px;height:1.3px;background:#b4b4b4;opacity:0.55"></div>
<div class="a" style="left:28px;top:289px;width:1px;height:1.3px;background:#b4b4b4;opacity:0.55"></div>
<div class="a" style="left:30px;top:289px;width:5px;height:1.3px;background:#b4b4b4;opacity:0.55"></div>
<div class="a" style="left:35px;top:289px;width:1px;height:1.3px;background:#b4b4b4;opacity:0.55"></div>
<div class="a" style="left:36px;top:289px;width:9px;height:1.3px;background:#b4b4b4;opacity:0.55"></div>
<div class="a" style="left:45px;top:289px;width:1px;height:1.3px;background:#b4b4b4;opacity:0.55"></div>
<div class="a" style="left:47px;top:289px;width:14px;height:1.3px;background:#b4b4b4;opacity:0.55"></div>
<div class="a" style="left:61px;top:289px;width:1px;height:1.3px;background:#b4b4b4;opacity:0.55"></div>
<div class="a" style="left:63px;top:289px;width:6px;height:1.3px;background:#b4b4b4;opacity:0.55"></div>
<div class="a" style="left:69px;top:289px;width:1px;height:1.3px;background:#b4b4b4;opacity:0.55"></div>
<div class="a" style="left:20px;top:291px;width:10px;height:1.3px;background:#b4b4b4;opacity:0.55"></div>
<div class="a" style="left:31px;top:291px;width:1px;height:1.3px;background:#b4b4b4;opacity:0.55"></div>
<div class="a" style="left:32px;top:291px;width:1px;height:1.3px;background:#b4b4b4;opacity:0.55"></div>
<div class="a" style="left:34px;top:291px;width:7px;height:1.3px;background:#b4b4b4;opacity:0.55"></div>
<div class="a" style="left:41px;top:291px;width:1px;height:1.3px;background:#b4b4b4;opacity:0.55"></div>
<div class="a" style="left:42px;top:291px;width:4px;height:1.3px;background:#b4b4b4;opacity:0.55"></div>
<div class="a" style="left:46px;top:291px;width:1px;height:1.3px;background:#b4b4b4;opacity:0.55"></div>
<div class="a" style="left:47px;top:291px;width:4px;height:1.3px;background:#b4b4b4;opacity:0.55"></div>
<div class="a" style="left:51px;top:291px;width:1px;height:1.3px;background:#b4b4b4;opacity:0.55"></div>
<div class="a" style="left:52px;top:291px;width:1px;height:1.3px;background:#b4b4b4;opacity:0.55"></div>
<div class="a" style="left:20px;top:295px;width:5px;height:1.3px;background:#b4b4b4;opacity:0.55"></div>
<div class="a" style="left:26px;top:295px;width:1px;height:1.3px;background:#b4b4b4;opacity:0.55"></div>
<div class="a" style="left:28px;top:295px;width:5px;height:1.3px;background:#b4b4b4;opacity:0.55"></div>
<div class="a" style="left:33px;top:295px;width:1px;height:1.3px;background:#b4b4b4;opacity:0.55"></div>
<div class="a" style="left:34px;top:295px;width:7px;height:1.3px;background:#b4b4b4;opacity:0.55"></div>
<div class="a" style="left:41px;top:295px;width:1px;height:1.3px;background:#b4b4b4;opacity:0.55"></div>
<div class="a" style="left:42px;top:295px;width:7px;height:1.3px;background:#b4b4b4;opacity:0.55"></div>
<div class="a" style="left:49px;top:295px;width:1px;height:1.3px;background:#b4b4b4;opacity:0.55"></div>
<div class="a" style="left:50px;top:295px;width:6px;height:1.3px;background:#b4b4b4;opacity:0.55"></div>
<div class="a" style="left:56px;top:295px;width:1px;height:1.3px;background:#b4b4b4;opacity:0.55"></div>
<div class="a" style="left:20px;top:297px;width:5px;height:1.3px;background:#b4b4b4;opacity:0.55"></div>
<div class="a" style="left:26px;top:297px;width:1px;height:1.3px;background:#b4b4b4;opacity:0.55"></div>
<div class="a" style="left:28px;top:297px;width:1px;height:1.3px;background:#b4b4b4;opacity:0.55"></div>
<div class="a" style="left:29px;top:297px;width:5px;height:1.3px;background:#b4b4b4;opacity:0.55"></div>
<div class="a" style="left:35px;top:297px;width:1px;height:1.3px;background:#b4b4b4;opacity:0.55"></div>
<div class="a" style="left:37px;top:297px;width:9px;height:1.3px;background:#b4b4b4;opacity:0.55"></div>
<div class="a" style="left:46px;top:297px;width:1px;height:1.3px;background:#b4b4b4;opacity:0.55"></div>
<div class="a" style="left:47px;top:297px;width:1px;height:1.3px;background:#b4b4b4;opacity:0.55"></div>
<div class="a" style="left:48px;top:297px;width:3px;height:1.3px;background:#b4b4b4;opacity:0.55"></div>
<div class="a" style="left:51px;top:297px;width:1px;height:1.3px;background:#b4b4b4;opacity:0.55"></div>
<div class="a" style="left:52px;top:297px;width:1px;height:1.3px;background:#b4b4b4;opacity:0.55"></div>
<div class="a" style="left:20px;top:299px;width:9px;height:1.3px;background:#b4b4b4;opacity:0.55"></div>
<div class="a" style="left:29px;top:299px;width:1px;height:1.3px;background:#b4b4b4;opacity:0.55"></div>
<div class="a" style="left:30px;top:299px;width:6px;height:1.3px;background:#b4b4b4;opacity:0.55"></div>
<div class="a" style="left:36px;top:299px;width:1px;height:1.3px;background:#b4b4b4;opacity:0.55"></div>
<div class="a" style="left:37px;top:299px;width:5px;height:1.3px;background:#b4b4b4;opacity:0.55"></div>
<div class="a" style="left:42px;top:299px;width:1px;height:1.3px;background:#b4b4b4;opacity:0.55"></div>
<div class="a" style="left:43px;top:299px;width:3px;height:1.3px;background:#b4b4b4;opacity:0.55"></div>
<div class="a" style="left:46px;top:299px;width:1px;height:1.3px;background:#b4b4b4;opacity:0.55"></div>
<div class="a" style="left:47px;top:299px;width:1px;height:1.3px;background:#b4b4b4;opacity:0.55"></div>
<div class="a" style="left:48px;top:299px;width:1px;height:1.3px;background:#b4b4b4;opacity:0.55"></div>
<div class="a" style="left:49px;top:299px;width:5px;height:1.3px;background:#b4b4b4;opacity:0.55"></div>
<div class="a" style="left:54px;top:299px;width:1px;height:1.3px;background:#b4b4b4;opacity:0.55"></div>
<div class="a" style="left:55px;top:299px;width:1px;height:1.3px;background:#b4b4b4;opacity:0.55"></div>
<div class="a" style="left:56px;top:299px;width:1px;height:1.3px;background:#b4b4b4;opacity:0.55"></div>
<div class="a" style="left:20px;top:301px;width:10px;height:1.3px;background:#b4b4b4;opacity:0.55"></div>
<div class="a" style="left:30px;top:301px;width:1px;height:1.3px;background:#b4b4b4;opacity:0.55"></div>
<div class="a" style="left:31px;top:301px;width:6px;height:1.3px;background:#b4b4b4;opacity:0.55"></div>
<div class="a" style="left:37px;top:301px;width:1px;height:1.3px;background:#b4b4b4;opacity:0.55"></div>
<div class="a" style="left:38px;top:301px;width:6px;height:1.3px;background:#b4b4b4;opacity:0.55"></div>
<div class="a" style="left:44px;top:301px;width:1px;height:1.3px;background:#b4b4b4;opacity:0.55"></div>
<div class="a" style="left:45px;top:301px;width:3px;height:1.3px;background:#b4b4b4;opacity:0.55"></div>
<div class="a" style="left:48px;top:301px;width:1px;height:1.3px;background:#b4b4b4;opacity:0.55"></div>
<div class="a" style="left:49px;top:301px;width:1px;height:1.3px;background:#b4b4b4;opacity:0.55"></div>
<div class="a" style="left:50px;top:301px;width:1px;height:1.3px;background:#b4b4b4;opacity:0.55"></div>
<div class="a" style="left:51px;top:301px;width:5px;height:1.3px;background:#b4b4b4;opacity:0.55"></div>
<div class="a" style="left:56px;top:301px;width:1px;height:1.3px;background:#b4b4b4;opacity:0.55"></div>
<div class="a" style="left:57px;top:301px;width:1px;height:1.3px;background:#b4b4b4;opacity:0.55"></div>
<div class="a" style="left:58px;top:301px;width:1px;height:1.3px;background:#b4b4b4;opacity:0.55"></div>
<div class="a" style="left:12px;top:305px;width:8px;height:1.3px;background:#b4b4b4;opacity:0.55"></div>
<div class="a" style="left:21px;top:305px;width:1px;height:1.3px;background:#b4b4b4;opacity:0.55"></div>
<div class="a" style="left:23px;top:305px;width:10px;height:1.3px;background:#b4b4b4;opacity:0.55"></div>
<div class="a" style="left:34px;top:305px;width:1px;height:1.3px;background:#b4b4b4;opacity:0.55"></div>
<div class="a" style="left:36px;top:305px;width:3px;height:1.3px;background:#b4b4b4;opacity:0.55"></div>
<div class="a" style="left:39px;top:305px;width:1px;height:1.3px;background:#b4b4b4;opacity:0.55"></div>
<div class="a" style="left:40px;top:305px;width:10px;height:1.3px;background:#b4b4b4;opacity:0.55"></div>
<div class="a" style="left:50px;top:305px;width:1px;height:1.3px;background:#b4b4b4;opacity:0.55"></div>
<div class="a" style="left:12px;top:309px;width:21px;height:1.3px;background:#57a64a;opacity:0.55"></div>
<div class="a" style="left:12px;top:311px;width:9px;height:1.3px;background:#b4b4b4;opacity:0.55"></div>
<div class="a" style="left:22px;top:311px;width:1px;height:1.3px;background:#b4b4b4;opacity:0.55"></div>
<div class="a" style="left:24px;top:311px;width:2px;height:1.3px;background:#b4b4b4;opacity:0.55"></div>
<div class="a" style="left:26px;top:311px;width:1px;height:1.3px;background:#b4b4b4;opacity:0.55"></div>
<div class="a" style="left:27px;top:311px;width:6px;height:1.3px;background:#b4b4b4;opacity:0.55"></div>
<div class="a" style="left:33px;top:311px;width:1px;height:1.3px;background:#b4b4b4;opacity:0.55"></div>
<div class="a" style="left:34px;top:311px;width:9px;height:1.3px;background:#b4b4b4;opacity:0.55"></div>
<div class="a" style="left:43px;top:311px;width:1px;height:1.3px;background:#b4b4b4;opacity:0.55"></div>
<div class="a" style="left:12px;top:313px;width:10px;height:1.3px;background:#b4b4b4;opacity:0.55"></div>
<div class="a" style="left:23px;top:313px;width:1px;height:1.3px;background:#b4b4b4;opacity:0.55"></div>
<div class="a" style="left:25px;top:313px;width:2px;height:1.3px;background:#b4b4b4;opacity:0.55"></div>
<div class="a" style="left:27px;top:313px;width:1px;height:1.3px;background:#b4b4b4;opacity:0.55"></div>
<div class="a" style="left:28px;top:313px;width:6px;height:1.3px;background:#b4b4b4;opacity:0.55"></div>
<div class="a" style="left:34px;top:313px;width:1px;height:1.3px;background:#b4b4b4;opacity:0.55"></div>
<div class="a" style="left:35px;top:313px;width:10px;height:1.3px;background:#b4b4b4;opacity:0.55"></div>
<div class="a" style="left:45px;top:313px;width:1px;height:1.3px;background:#b4b4b4;opacity:0.55"></div>
<div class="a" style="left:12px;top:317px;width:59px;height:1.3px;background:#57a64a;opacity:0.55"></div>
<div class="a" style="left:12px;top:319px;width:8px;height:1.3px;background:#b4b4b4;opacity:0.55"></div>
<div class="a" style="left:21px;top:319px;width:1px;height:1.3px;background:#b4b4b4;opacity:0.55"></div>
<div class="a" style="left:23px;top:319px;width:8px;height:1.3px;background:#b4b4b4;opacity:0.55"></div>
<div class="a" style="left:31px;top:319px;width:1px;height:1.3px;background:#b4b4b4;opacity:0.55"></div>
<div class="a" style="left:32px;top:319px;width:10px;height:1.3px;background:#b4b4b4;opacity:0.55"></div>
<div class="a" style="left:42px;top:319px;width:1px;height:1.3px;background:#b4b4b4;opacity:0.55"></div>
<div class="a" style="left:44px;top:319px;width:9px;height:1.3px;background:#b4b4b4;opacity:0.55"></div>
<div class="a" style="left:53px;top:319px;width:1px;height:1.3px;background:#b4b4b4;opacity:0.55"></div>
<div class="a" style="left:55px;top:319px;width:7px;height:1.3px;background:#b4b4b4;opacity:0.55"></div>
<div class="a" style="left:62px;top:319px;width:1px;height:1.3px;background:#b4b4b4;opacity:0.55"></div>
<div class="a" style="left:63px;top:319px;width:7px;height:1.3px;background:#ce9178;opacity:0.55"></div>
<div class="a" style="left:70px;top:319px;width:1px;height:1.3px;background:#b4b4b4;opacity:0.55"></div>
<div class="a" style="left:72px;top:319px;width:13px;height:1.3px;background:#b4b4b4;opacity:0.55"></div>
<div class="a" style="left:85px;top:319px;width:1px;height:1.3px;background:#b4b4b4;opacity:0.55"></div>
<div class="a" style="left:86px;top:319px;width:1px;height:1.3px;background:#b5cea8;opacity:0.55"></div>
<div class="a" style="left:87px;top:319px;width:1px;height:1.3px;background:#b4b4b4;opacity:0.55"></div>
<div class="a" style="left:12px;top:321px;width:8px;height:1.3px;background:#b4b4b4;opacity:0.55"></div>
<div class="a" style="left:21px;top:321px;width:1px;height:1.3px;background:#b4b4b4;opacity:0.55"></div>
<div class="a" style="left:23px;top:321px;width:8px;height:1.3px;background:#b4b4b4;opacity:0.55"></div>
<div class="a" style="left:31px;top:321px;width:1px;height:1.3px;background:#b4b4b4;opacity:0.55"></div>
<div class="a" style="left:32px;top:321px;width:10px;height:1.3px;background:#b4b4b4;opacity:0.55"></div>
<div class="a" style="left:42px;top:321px;width:1px;height:1.3px;background:#b4b4b4;opacity:0.55"></div>
<div class="a" style="left:44px;top:321px;width:9px;height:1.3px;background:#b4b4b4;opacity:0.55"></div>
<div class="a" style="left:53px;top:321px;width:1px;height:1.3px;background:#b4b4b4;opacity:0.55"></div>
<div class="a" style="left:55px;top:321px;width:7px;height:1.3px;background:#b4b4b4;opacity:0.55"></div>
<div class="a" style="left:62px;top:321px;width:1px;height:1.3px;background:#b4b4b4;opacity:0.55"></div>
<div class="a" style="left:63px;top:321px;width:7px;height:1.3px;background:#ce9178;opacity:0.55"></div>
<div class="a" style="left:70px;top:321px;width:1px;height:1.3px;background:#b4b4b4;opacity:0.55"></div>
<div class="a" style="left:72px;top:321px;width:13px;height:1.3px;background:#b4b4b4;opacity:0.55"></div>
<div class="a" style="left:85px;top:321px;width:1px;height:1.3px;background:#b4b4b4;opacity:0.55"></div>
<div class="a" style="left:86px;top:321px;width:1px;height:1.3px;background:#b5cea8;opacity:0.55"></div>
<div class="a" style="left:87px;top:321px;width:1px;height:1.3px;background:#b4b4b4;opacity:0.55"></div>
<div class="a" style="left:12px;top:325px;width:6px;height:1.3px;background:#569cd6;opacity:0.55"></div>
<div class="a" style="left:19px;top:325px;width:8px;height:1.3px;background:#b4b4b4;opacity:0.55"></div>
<div class="a" style="left:27px;top:325px;width:1px;height:1.3px;background:#b4b4b4;opacity:0.55"></div>
<div class="a" style="left:29px;top:325px;width:8px;height:1.3px;background:#b4b4b4;opacity:0.55"></div>
<div class="a" style="left:37px;top:325px;width:1px;height:1.3px;background:#b4b4b4;opacity:0.55"></div>
<div class="a" style="left:39px;top:325px;width:8px;height:1.3px;background:#b4b4b4;opacity:0.55"></div>
<div class="a" style="left:47px;top:325px;width:1px;height:1.3px;background:#b4b4b4;opacity:0.55"></div>
<div class="a" style="left:49px;top:325px;width:9px;height:1.3px;background:#b4b4b4;opacity:0.55"></div>
<div class="a" style="left:58px;top:325px;width:1px;height:1.3px;background:#b4b4b4;opacity:0.55"></div>
<div class="a" style="left:60px;top:325px;width:10px;height:1.3px;background:#b4b4b4;opacity:0.55"></div>
<div class="a" style="left:8px;top:329px;width:3px;height:1.3px;background:#569cd6;opacity:0.55"></div>
<div class="a" style="left:12px;top:329px;width:10px;height:1.3px;background:#b4b4b4;opacity:0.55"></div>
<div class="a" style="left:22px;top:329px;width:1px;height:1.3px;background:#b4b4b4;opacity:0.55"></div>
<div class="a" style="left:23px;top:329px;width:5px;height:1.3px;background:#b4b4b4;opacity:0.55"></div>
<div class="a" style="left:28px;top:329px;width:1px;height:1.3px;background:#b4b4b4;opacity:0.55"></div>
<div class="a" style="left:30px;top:329px;width:9px;height:1.3px;background:#b4b4b4;opacity:0.55"></div>
<div class="a" style="left:39px;top:329px;width:1px;height:1.3px;background:#b4b4b4;opacity:0.55"></div>
<div class="a" style="left:41px;top:329px;width:6px;height:1.3px;background:#b4b4b4;opacity:0.55"></div>
<div class="a" style="left:47px;top:329px;width:1px;height:1.3px;background:#b4b4b4;opacity:0.55"></div>
<div class="a" style="left:49px;top:329px;width:4px;height:1.3px;background:#b4b4b4;opacity:0.55"></div>
<div class="a" style="left:53px;top:329px;width:1px;height:1.3px;background:#b4b4b4;opacity:0.55"></div>
<div class="a" style="left:54px;top:329px;width:3px;height:1.3px;background:#b4b4b4;opacity:0.55"></div>
<div class="a" style="left:57px;top:329px;width:1px;height:1.3px;background:#b4b4b4;opacity:0.55"></div>
<div class="a" style="left:59px;top:329px;width:3px;height:1.3px;background:#b4b4b4;opacity:0.55"></div>
<div class="a" style="left:62px;top:329px;width:1px;height:1.3px;background:#b4b4b4;opacity:0.55"></div>
<div class="a" style="left:63px;top:329px;width:1px;height:1.3px;background:#b4b4b4;opacity:0.55"></div>
<div class="a" style="left:65px;top:329px;width:10px;height:1.3px;background:#b4b4b4;opacity:0.55"></div>
<div class="a" style="left:75px;top:329px;width:1px;height:1.3px;background:#b4b4b4;opacity:0.55"></div>
<div class="a" style="left:77px;top:329px;width:4px;height:1.3px;background:#b4b4b4;opacity:0.55"></div>
<div class="a" style="left:81px;top:329px;width:1px;height:1.3px;background:#b4b4b4;opacity:0.55"></div>
<div class="a" style="left:83px;top:329px;width:7px;height:1.3px;background:#b4b4b4;opacity:0.55"></div>
<div class="a" style="left:90px;top:329px;width:1px;height:1.3px;background:#b4b4b4;opacity:0.55"></div>
<div class="a" style="left:92px;top:329px;width:4px;height:1.3px;background:#b4b4b4;opacity:0.55"></div>
<div class="a" style="left:96px;top:329px;width:1px;height:1.3px;background:#b4b4b4;opacity:0.55"></div>
<div class="a" style="left:97px;top:329px;width:1px;height:1.3px;background:#b4b4b4;opacity:0.55"></div>
<div class="a" style="left:12px;top:331px;width:10px;height:1.3px;background:#b4b4b4;opacity:0.55"></div>
<div class="a" style="left:22px;top:331px;width:1px;height:1.3px;background:#b4b4b4;opacity:0.55"></div>
<div class="a" style="left:23px;top:331px;width:5px;height:1.3px;background:#b4b4b4;opacity:0.55"></div>
<div class="a" style="left:28px;top:331px;width:1px;height:1.3px;background:#b4b4b4;opacity:0.55"></div>
<div class="a" style="left:29px;top:331px;width:7px;height:1.3px;background:#b4b4b4;opacity:0.55"></div>
<div class="a" style="left:36px;top:331px;width:1px;height:1.3px;background:#b4b4b4;opacity:0.55"></div>
<div class="a" style="left:37px;top:331px;width:4px;height:1.3px;background:#569cd6;opacity:0.55"></div>
<div class="a" style="left:41px;top:331px;width:1px;height:1.3px;background:#b4b4b4;opacity:0.55"></div>
<div class="a" style="left:43px;top:331px;width:8px;height:1.3px;background:#b4b4b4;opacity:0.55"></div>
<div class="a" style="left:51px;top:331px;width:1px;height:1.3px;background:#b4b4b4;opacity:0.55"></div>
<div class="a" style="left:52px;top:331px;width:4px;height:1.3px;background:#569cd6;opacity:0.55"></div>
<div class="a" style="left:56px;top:331px;width:1px;height:1.3px;background:#b4b4b4;opacity:0.55"></div>
<div class="a" style="left:12px;top:333px;width:5px;height:1.3px;background:#b4b4b4;opacity:0.55"></div>
<div class="a" style="left:17px;top:333px;width:1px;height:1.3px;background:#b4b4b4;opacity:0.55"></div>
<div class="a" style="left:18px;top:333px;width:5px;height:1.3px;background:#b4b4b4;opacity:0.55"></div>
<div class="a" style="left:23px;top:333px;width:1px;height:1.3px;background:#b4b4b4;opacity:0.55"></div>
<div class="a" style="left:24px;top:333px;width:15px;height:1.3px;background:#b4b4b4;opacity:0.55"></div>
<div class="a" style="left:39px;top:333px;width:1px;height:1.3px;background:#b4b4b4;opacity:0.55"></div>
<div class="a" style="left:40px;top:333px;width:10px;height:1.3px;background:#b4b4b4;opacity:0.55"></div>
<div class="a" style="left:50px;top:333px;width:1px;height:1.3px;background:#b4b4b4;opacity:0.55"></div>
<div class="a" style="left:12px;top:335px;width:9px;height:1.3px;background:#b4b4b4;opacity:0.55"></div>
<div class="a" style="left:21px;top:335px;width:1px;height:1.3px;background:#b4b4b4;opacity:0.55"></div>
<div class="a" style="left:22px;top:335px;width:15px;height:1.3px;background:#b4b4b4;opacity:0.55"></div>
<div class="a" style="left:37px;top:335px;width:1px;height:1.3px;background:#b4b4b4;opacity:0.55"></div>
<div class="a" style="left:38px;top:335px;width:10px;height:1.3px;background:#b4b4b4;opacity:0.55"></div>
<div class="a" style="left:48px;top:335px;width:1px;height:1.3px;background:#b4b4b4;opacity:0.55"></div>
<div class="a" style="left:12px;top:339px;width:49px;height:1.3px;background:#57a64a;opacity:0.55"></div>
<div class="a" style="left:12px;top:341px;width:4px;height:1.3px;background:#569cd6;opacity:0.55"></div>
<div class="a" style="left:17px;top:341px;width:4px;height:1.3px;background:#b4b4b4;opacity:0.55"></div>
<div class="a" style="left:21px;top:341px;width:1px;height:1.3px;background:#b4b4b4;opacity:0.55"></div>
<div class="a" style="left:22px;top:341px;width:10px;height:1.3px;background:#b4b4b4;opacity:0.55"></div>
<div class="a" style="left:33px;top:341px;width:1px;height:1.3px;background:#b4b4b4;opacity:0.55"></div>
<div class="a" style="left:35px;top:341px;width:13px;height:1.3px;background:#ce9178;opacity:0.55"></div>
<div class="a" style="left:48px;top:341px;width:1px;height:1.3px;background:#b4b4b4;opacity:0.55"></div>
<div class="a" style="left:50px;top:341px;width:3px;height:1.3px;background:#ce9178;opacity:0.55"></div>
<div class="a" style="left:53px;top:341px;width:1px;height:1.3px;background:#b4b4b4;opacity:0.55"></div>
<div class="a" style="left:55px;top:341px;width:2px;height:1.3px;background:#569cd6;opacity:0.55"></div>
<div class="a" style="left:58px;top:341px;width:1px;height:1.3px;background:#b4b4b4;opacity:0.55"></div>
<div class="a" style="left:59px;top:341px;width:1px;height:1.3px;background:#b4b4b4;opacity:0.55"></div>
<div class="a" style="left:16px;top:343px;width:4px;height:1.3px;background:#b4b4b4;opacity:0.55"></div>
<div class="a" style="left:20px;top:343px;width:1px;height:1.3px;background:#b4b4b4;opacity:0.55"></div>
<div class="a" style="left:21px;top:343px;width:4px;height:1.3px;background:#b4b4b4;opacity:0.55"></div>
<div class="a" style="left:25px;top:343px;width:1px;height:1.3px;background:#b4b4b4;opacity:0.55"></div>
<div class="a" style="left:26px;top:343px;width:6px;height:1.3px;background:#b4b4b4;opacity:0.55"></div>
<div class="a" style="left:32px;top:343px;width:1px;height:1.3px;background:#b4b4b4;opacity:0.55"></div>
<div class="a" style="left:34px;top:343px;width:1px;height:1.3px;background:#b4b4b4;opacity:0.55"></div>
<div class="a" style="left:35px;top:343px;width:1px;height:1.3px;background:#b4b4b4;opacity:0.55"></div>
<div class="a" style="left:37px;top:343px;width:6px;height:1.3px;background:#b4b4b4;opacity:0.55"></div>
<div class="a" style="left:43px;top:343px;width:1px;height:1.3px;background:#b4b4b4;opacity:0.55"></div>
<div class="a" style="left:44px;top:343px;width:1px;height:1.3px;background:#b5cea8;opacity:0.55"></div>
<div class="a" style="left:45px;top:343px;width:1px;height:1.3px;background:#b4b4b4;opacity:0.55"></div>
<div class="a" style="left:12px;top:347px;width:14px;height:1.3px;background:#57a64a;opacity:0.55"></div>
<div class="a" style="left:12px;top:349px;width:4px;height:1.3px;background:#569cd6;opacity:0.55"></div>
<div class="a" style="left:17px;top:349px;width:4px;height:1.3px;background:#b4b4b4;opacity:0.55"></div>
<div class="a" style="left:21px;top:349px;width:1px;height:1.3px;background:#b4b4b4;opacity:0.55"></div>
<div class="a" style="left:22px;top:349px;width:10px;height:1.3px;background:#b4b4b4;opacity:0.55"></div>
<div class="a" style="left:33px;top:349px;width:1px;height:1.3px;background:#b4b4b4;opacity:0.55"></div>
<div class="a" style="left:35px;top:349px;width:14px;height:1.3px;background:#ce9178;opacity:0.55"></div>
<div class="a" style="left:49px;top:349px;width:1px;height:1.3px;background:#b4b4b4;opacity:0.55"></div>
<div class="a" style="left:51px;top:349px;width:3px;height:1.3px;background:#ce9178;opacity:0.55"></div>
<div class="a" style="left:54px;top:349px;width:1px;height:1.3px;background:#b4b4b4;opacity:0.55"></div>
<div class="a" style="left:56px;top:349px;width:2px;height:1.3px;background:#569cd6;opacity:0.55"></div>
<div class="a" style="left:59px;top:349px;width:1px;height:1.3px;background:#b4b4b4;opacity:0.55"></div>
<div class="a" style="left:60px;top:349px;width:1px;height:1.3px;background:#b4b4b4;opacity:0.55"></div>
<div class="a" style="left:16px;top:351px;width:4px;height:1.3px;background:#b4b4b4;opacity:0.55"></div>
<div class="a" style="left:20px;top:351px;width:1px;height:1.3px;background:#b4b4b4;opacity:0.55"></div>
<div class="a" style="left:21px;top:351px;width:4px;height:1.3px;background:#b4b4b4;opacity:0.55"></div>
<div class="a" style="left:25px;top:351px;width:1px;height:1.3px;background:#b4b4b4;opacity:0.55"></div>
<div class="a" style="left:26px;top:351px;width:7px;height:1.3px;background:#b4b4b4;opacity:0.55"></div>
<div class="a" style="left:33px;top:351px;width:1px;height:1.3px;background:#b4b4b4;opacity:0.55"></div>
<div class="a" style="left:35px;top:351px;width:1px;height:1.3px;background:#b4b4b4;opacity:0.55"></div>
<div class="a" style="left:36px;top:351px;width:1px;height:1.3px;background:#b4b4b4;opacity:0.55"></div>
<div class="a" style="left:38px;top:351px;width:6px;height:1.3px;background:#b4b4b4;opacity:0.55"></div>
<div class="a" style="left:44px;top:351px;width:1px;height:1.3px;background:#b4b4b4;opacity:0.55"></div>
<div class="a" style="left:45px;top:351px;width:1px;height:1.3px;background:#b5cea8;opacity:0.55"></div>
<div class="a" style="left:46px;top:351px;width:1px;height:1.3px;background:#b4b4b4;opacity:0.55"></div>
<div class="a" style="left:12px;top:355px;width:13px;height:1.3px;background:#57a64a;opacity:0.55"></div>
<div class="a" style="left:12px;top:357px;width:6px;height:1.3px;background:#b4b4b4;opacity:0.55"></div>
<div class="a" style="left:19px;top:357px;width:1px;height:1.3px;background:#b4b4b4;opacity:0.55"></div>
<div class="a" style="left:21px;top:357px;width:1px;height:1.3px;background:#b4b4b4;opacity:0.55"></div>
<div class="a" style="left:16px;top:359px;width:12px;height:1.3px;background:#ce9178;opacity:0.55"></div>
<div class="a" style="left:28px;top:359px;width:1px;height:1.3px;background:#b4b4b4;opacity:0.55"></div>
<div class="a" style="left:30px;top:359px;width:10px;height:1.3px;background:#b4b4b4;opacity:0.55"></div>
<div class="a" style="left:40px;top:359px;width:1px;height:1.3px;background:#b4b4b4;opacity:0.55"></div>
<div class="a" style="left:16px;top:361px;width:12px;height:1.3px;background:#ce9178;opacity:0.55"></div>
<div class="a" style="left:28px;top:361px;width:1px;height:1.3px;background:#b4b4b4;opacity:0.55"></div>
<div class="a" style="left:30px;top:361px;width:10px;height:1.3px;background:#b4b4b4;opacity:0.55"></div>
<div class="a" style="left:40px;top:361px;width:1px;height:1.3px;background:#b4b4b4;opacity:0.55"></div>
<div class="a" style="left:16px;top:363px;width:11px;height:1.3px;background:#ce9178;opacity:0.55"></div>
<div class="a" style="left:27px;top:363px;width:1px;height:1.3px;background:#b4b4b4;opacity:0.55"></div>
<div class="a" style="left:29px;top:363px;width:9px;height:1.3px;background:#b4b4b4;opacity:0.55"></div>
<div class="a" style="left:38px;top:363px;width:1px;height:1.3px;background:#b4b4b4;opacity:0.55"></div>
<div class="a" style="left:16px;top:365px;width:12px;height:1.3px;background:#ce9178;opacity:0.55"></div>
<div class="a" style="left:28px;top:365px;width:1px;height:1.3px;background:#b4b4b4;opacity:0.55"></div>
<div class="a" style="left:30px;top:365px;width:3px;height:1.3px;background:#b4b4b4;opacity:0.55"></div>
<div class="a" style="left:33px;top:365px;width:1px;height:1.3px;background:#b4b4b4;opacity:0.55"></div>
<div class="a" style="left:34px;top:365px;width:6px;height:1.3px;background:#b4b4b4;opacity:0.55"></div>
<div class="a" style="left:40px;top:365px;width:1px;height:1.3px;background:#b4b4b4;opacity:0.55"></div>
<div class="a" style="left:12px;top:367px;width:1px;height:1.3px;background:#b4b4b4;opacity:0.55"></div>
<div class="a" style="left:12px;top:369px;width:4px;height:1.3px;background:#569cd6;opacity:0.55"></div>
<div class="a" style="left:17px;top:369px;width:4px;height:1.3px;background:#b4b4b4;opacity:0.55"></div>
<div class="a" style="left:21px;top:369px;width:1px;height:1.3px;background:#b4b4b4;opacity:0.55"></div>
<div class="a" style="left:22px;top:369px;width:10px;height:1.3px;background:#b4b4b4;opacity:0.55"></div>
<div class="a" style="left:33px;top:369px;width:1px;height:1.3px;background:#b4b4b4;opacity:0.55"></div>
<div class="a" style="left:35px;top:369px;width:13px;height:1.3px;background:#ce9178;opacity:0.55"></div>
<div class="a" style="left:48px;top:369px;width:1px;height:1.3px;background:#b4b4b4;opacity:0.55"></div>
<div class="a" style="left:50px;top:369px;width:3px;height:1.3px;background:#ce9178;opacity:0.55"></div>
<div class="a" style="left:53px;top:369px;width:1px;height:1.3px;background:#b4b4b4;opacity:0.55"></div>
<div class="a" style="left:55px;top:369px;width:2px;height:1.3px;background:#569cd6;opacity:0.55"></div>
<div class="a" style="left:58px;top:369px;width:1px;height:1.3px;background:#b4b4b4;opacity:0.55"></div>
<div class="a" style="left:59px;top:369px;width:1px;height:1.3px;background:#b4b4b4;opacity:0.55"></div>
<div class="a" style="left:16px;top:371px;width:4px;height:1.3px;background:#b4b4b4;opacity:0.55"></div>
<div class="a" style="left:20px;top:371px;width:1px;height:1.3px;background:#b4b4b4;opacity:0.55"></div>
<div class="a" style="left:21px;top:371px;width:4px;height:1.3px;background:#b4b4b4;opacity:0.55"></div>
<div class="a" style="left:25px;top:371px;width:1px;height:1.3px;background:#b4b4b4;opacity:0.55"></div>
<div class="a" style="left:26px;top:371px;width:6px;height:1.3px;background:#b4b4b4;opacity:0.55"></div>
<div class="a" style="left:32px;top:371px;width:1px;height:1.3px;background:#b4b4b4;opacity:0.55"></div>
<div class="a" style="left:34px;top:371px;width:1px;height:1.3px;background:#b4b4b4;opacity:0.55"></div>
<div class="a" style="left:35px;top:371px;width:1px;height:1.3px;background:#b4b4b4;opacity:0.55"></div>
<div class="a" style="left:37px;top:371px;width:6px;height:1.3px;background:#b4b4b4;opacity:0.55"></div>
<div class="a" style="left:43px;top:371px;width:1px;height:1.3px;background:#b4b4b4;opacity:0.55"></div>
<div class="a" style="left:44px;top:371px;width:1px;height:1.3px;background:#b5cea8;opacity:0.55"></div>
<div class="a" style="left:45px;top:371px;width:1px;height:1.3px;background:#b4b4b4;opacity:0.55"></div>
<div class="a" style="left:8px;top:375px;width:3px;height:1.3px;background:#569cd6;opacity:0.55"></div>
<div class="a" style="left:12px;top:375px;width:4px;height:1.3px;background:#b4b4b4;opacity:0.55"></div>
<div class="a" style="left:16px;top:375px;width:1px;height:1.3px;background:#b4b4b4;opacity:0.55"></div>
<div class="a" style="left:17px;top:375px;width:1px;height:1.3px;background:#b4b4b4;opacity:0.55"></div>
<div class="a" style="left:18px;top:375px;width:1px;height:1.3px;background:#b4b4b4;opacity:0.55"></div>
<div class="a" style="left:12px;top:377px;width:5px;height:1.3px;background:#b4b4b4;opacity:0.55"></div>
<div class="a" style="left:17px;top:377px;width:1px;height:1.3px;background:#b4b4b4;opacity:0.55"></div>
<div class="a" style="left:18px;top:377px;width:1px;height:1.3px;background:#b4b4b4;opacity:0.55"></div>
<div class="a" style="left:19px;top:377px;width:69px;height:1.3px;background:#ce9178;opacity:0.55"></div>
<div class="a" style="left:88px;top:377px;width:1px;height:1.3px;background:#b4b4b4;opacity:0.55"></div>
<div class="a" style="left:12px;top:379px;width:5px;height:1.3px;background:#b4b4b4;opacity:0.55"></div>
<div class="a" style="left:17px;top:379px;width:1px;height:1.3px;background:#b4b4b4;opacity:0.55"></div>
<div class="a" style="left:18px;top:379px;width:1px;height:1.3px;background:#b4b4b4;opacity:0.55"></div>
<div class="a" style="left:19px;top:379px;width:21px;height:1.3px;background:#ce9178;opacity:0.55"></div>
<div class="a" style="left:40px;top:379px;width:1px;height:1.3px;background:#b4b4b4;opacity:0.55"></div>
<div class="a" style="left:12px;top:381px;width:5px;height:1.3px;background:#b4b4b4;opacity:0.55"></div>
<div class="a" style="left:17px;top:381px;width:1px;height:1.3px;background:#b4b4b4;opacity:0.55"></div>
<div class="a" style="left:18px;top:381px;width:1px;height:1.3px;background:#b4b4b4;opacity:0.55"></div>
<div class="a" style="left:19px;top:381px;width:18px;height:1.3px;background:#ce9178;opacity:0.55"></div>
<div class="a" style="left:37px;top:381px;width:1px;height:1.3px;background:#b4b4b4;opacity:0.55"></div>
<div class="a" style="left:8px;top:55px;width:10px;height:2px;background:#e5a02a"></div>
<div class="a" style="left:28px;top:169px;width:10px;height:2px;background:#e5a02a"></div>
<div class="a" style="left:28px;top:173px;width:10px;height:2px;background:#e5a02a"></div>
</div>
<div class="a" style="left:1780px;top:90px;width:6px;height:381px;background:linear-gradient(90deg,rgba(0,0,0,0),rgba(0,0,0,0.45))"></div>
<div class="a" style="left:1906px;top:90px;width:1px;height:382px;background:#333333"></div>
<div class="a" style="left:1906px;top:90px;width:13px;height:1px;background:#333333"></div>
<div class="a" style="left:1907px;top:127px;width:12px;height:2px;background:#a0a0a0"></div>
<div class="a" style="left:1911px;top:128.5px;width:5px;height:5.5px;background:#a0641e"></div>
<div class="a" style="left:1911px;top:188px;width:5px;height:9px;background:#a0641e"></div>
<div class="a" style="left:1911px;top:294px;width:5px;height:5px;background:#a0641e"></div>
<div class="a" style="left:1911px;top:306px;width:5px;height:5px;background:#a0641e"></div>
<div class="a" style="left:1911px;top:327px;width:5px;height:5px;background:#a0641e"></div>
<div class="a" style="left:1911px;top:420px;width:5px;height:5px;background:#a0641e"></div>
<!-- panel -->
<div id="panel" class="a">
<div class="a" style="left:0;top:0;width:1628px;height:1px;background:#414141"></div>
<span class="t" style="left:20.2px;top:8px;font-size:11px;line-height:22px;color:#969696;letter-spacing:-0.9px">PROBLEMS</span>
<span class="t" style="left:97.9px;top:8px;font-size:11px;line-height:22px;color:#969696;letter-spacing:-0.9px">OUTPUT</span>
<span class="t" style="left:162.9px;top:8px;font-size:11px;line-height:22px;color:#969696;letter-spacing:-0.9px">DEBUG CONSOLE</span>
<span class="t" style="left:272.5px;top:8px;font-size:11px;line-height:22px;color:#e7e7e7;letter-spacing:-0.69px">TERMINAL</span>
<span class="t" style="left:347.5px;top:8px;font-size:11px;line-height:22px;color:#969696;letter-spacing:-0.9px">PORTS</span>
<div class="a" style="left:270px;top:29px;width:56px;height:1px;background:#e7e7e7"></div>
<svg style="left:1495px;top:12.5px" width="13" height="13" viewBox="0 0 13 13" stroke="#c5c5c5" stroke-width="1.2"><path d="M6.5 0 V13 M0 6.5 H13"/></svg>
<svg style="left:1514px;top:17px" width="8" height="5" viewBox="0 0 8 5" fill="none" stroke="#c5c5c5" stroke-width="1.1"><path d="M0.5 0.5 L4 4 L7.5 0.5"/></svg>
<svg style="left:1533px;top:17px" width="16" height="4" viewBox="0 0 16 4" fill="#c5c5c5"><circle cx="3" cy="2" r="1.1"/><circle cx="8" cy="2" r="1.1"/><circle cx="13" cy="2" r="1.1"/></svg>
<div class="a" style="left:1560px;top:10px;width:1px;height:16px;background:#5a5a5a"></div>
<svg style="left:1573px;top:12px" width="14" height="13" viewBox="0 0 14 13" fill="none" stroke="#c5c5c5" stroke-width="1.1"><path d="M0.5 4 V0.5 H4 M10 0.5 H13.5 V4 M13.5 9 V12.5 H10 M4 12.5 H0.5 V9"/></svg>
<svg style="left:1601px;top:14px" width="10" height="10" viewBox="0 0 10 10" stroke="#c5c5c5" stroke-width="1.2"><path d="M0.5 0.5 L9.5 9.5 M9.5 0.5 L0.5 9.5"/></svg>
<div class="a" style="left:4px;top:44px;width:1px;height:459px;background:#4b4b4b"></div>
<div class="a" style="left:1520px;top:44px;width:15px;height:493px;border-left:1px solid #3c3c3c;border-top:1px solid #3c3c3c"></div>
<div class="a" style="left:1534px;top:35px;width:1px;height:502px;background:#454545"></div>
<div class="a" style="left:125px;top:350.0px;width:1071px;height:17px;background:#cccccc"></div>
<div class="a" style="left:139px;top:367.0px;width:1162px;height:17px;background:#cccccc"></div>
<div class="a" style="left:125px;top:503.0px;width:490px;height:17px;background:#cccccc"></div>
<div class="a" style="left:1511px;top:503.5px;width:7px;height:16px;background:#cccccc"></div>
<span class="t mono" style="left:20px;top:46.2px;font-size:12.5px;line-height:17px;letter-spacing:-0.50px;color:#cccccc">PS C:\Users\Aorus15\Desktop\Tech\UnifiedBeez\new_onboarding_task\tag-system-ml&gt; &amp; <span style="color:#e5e510">C:/Users/Aorus15/AppData/Local/Programs/Python/Python312/python.exe</span> c:/Users/Aorus15/Desktop/Tech/UnifiedBeez/new_onboarding_task/ta</span>
<span class="t mono" style="left:20px;top:63.2px;font-size:12.5px;line-height:17px;letter-spacing:-0.50px;color:#cccccc">g-system-ml/scripts/train_multilabel.py</span>
<span class="t mono" style="left:20px;top:80.2px;font-size:12.5px;line-height:17px;letter-spacing:-0.50px;color:#cccccc">Starting training at 2025-10-02 01:08:28</span>
<span class="t mono" style="left:20px;top:97.2px;font-size:12.5px;line-height:17px;letter-spacing:-0.50px;color:#cccccc">Model: distilbert-base-uncased</span>
<span class="t mono" style="left:20px;top:114.2px;font-size:12.5px;line-height:17px;letter-spacing:-0.50px;color:#cccccc">Device: cpu</span>
<span class="t mono" style="left:20px;top:131.2px;font-size:12.5px;line-height:17px;letter-spacing:-0.50px;color:#cccccc">Number of labels: 5</span>
<span class="t mono" style="left:20px;top:148.2px;font-size:12.5px;line-height:17px;letter-spacing:-0.50px;color:#cccccc">Tags: [&#x27;First-time-visitor&#x27;, &#x27;Wishlist-user&#x27;, &#x27;Deal-seeker&#x27;, &#x27;Window-shopper&#x27;, &#x27;Hot-buyer&#x27;]</span>
<span class="t mono" style="left:20px;top:182.2px;font-size:12.5px;line-height:17px;letter-spacing:-0.50px;color:#cccccc">Loading tokenizer and model...</span>
<span class="t mono" style="left:20px;top:216.2px;font-size:12.5px;line-height:17px;letter-spacing:-0.50px;color:#cccccc">Loading datasets...</span>
<span class="t mono" style="left:20px;top:233.2px;font-size:12.5px;line-height:17px;letter-spacing:-0.50px;color:#cccccc">Train samples: 172</span>
<span class="t mono" style="left:20px;top:250.2px;font-size:12.5px;line-height:17px;letter-spacing:-0.50px;color:#cccccc">Val samples: 39</span>
<span class="t mono" style="left:20px;top:267.2px;font-size:12.5px;line-height:17px;letter-spacing:-0.50px;color:#cccccc">Test samples: 45</span>
<span class="t mono" style="left:20px;top:301.2px;font-size:12.5px;line-height:17px;letter-spacing:-0.50px;color:#cccccc">Starting training for 10 epochs...</span>
<span class="t mono" style="left:20px;top:335.2px;font-size:12.5px;line-height:17px;letter-spacing:-0.50px;color:#cccccc">Epoch 1/10</span>
<span class="t mono" style="left:20px;top:352.2px;font-size:12.5px;line-height:17px;letter-spacing:-0.50px;color:#cccccc">Training: 100%|</span>
<span class="t mono" style="left:20px;top:369.2px;font-size:12.5px;line-height:17px;letter-spacing:-0.50px;color:#cccccc">Evaluating: 100%|</span>
<span class="t mono" style="left:20px;top:386.2px;font-size:12.5px;line-height:17px;letter-spacing:-0.50px;color:#cccccc">Train Loss: 0.6934</span>
<span class="t mono" style="left:20px;top:403.2px;font-size:12.5px;line-height:17px;letter-spacing:-0.50px;color:#cccccc">Val Loss: 0.6048</span>
<span class="t mono" style="left:20px;top:420.2px;font-size:12.5px;line-height:17px;letter-spacing:-0.50px;color:#cccccc">Val Micro-F1: 0.3401</span>
<span class="t mono" style="left:20px;top:437.2px;font-size:12.5px;line-height:17px;letter-spacing:-0.50px;color:#cccccc">Val Macro-F1: 0.2801</span>
<span class="t mono" style="left:20px;top:454.2px;font-size:12.5px;line-height:17px;letter-spacing:-0.50px;color:#cccccc">New best model! Micro-F1: 0.3401</span>
<span class="t mono" style="left:20px;top:488.2px;font-size:12.5px;line-height:17px;letter-spacing:-0.50px;color:#cccccc">Epoch 2/10</span>
<span class="t mono" style="left:20px;top:505.2px;font-size:12.5px;line-height:17px;letter-spacing:-0.50px;color:#cccccc">Training:  45%|</span>
<span class="t mono" style="left:1196px;top:352.2px;font-size:12.5px;line-height:17px;letter-spacing:-0.50px;color:#cccccc">| 11/11 [00:20&lt;00:00,  1.86s/it, loss=0.6156]</span>
<span class="t mono" style="left:1301px;top:369.2px;font-size:12.5px;line-height:17px;letter-spacing:-0.50px;color:#cccccc">| 3/3 [00:00&lt;00:00,  3.22it/s]</span>
<span class="t mono" style="left:1203px;top:505.2px;font-size:12.5px;line-height:17px;letter-spacing:-0.50px;color:#cccccc">| 5/11 [00:10&lt;00:11,  1.97s/it, loss=0.5287]</span>
<div class="a" style="left:1535px;top:101px;width:93px;height:22px;background:#37373d"></div>
<svg style="left:1549px;top:42.8px" width="7" height="9" viewBox="0 0 7 9" fill="none" stroke="#cca700" stroke-width="1.6"><path d="M1 9 V1 H7"/></svg>
<svg style="left:1558px;top:38.8px" width="15" height="14" viewBox="0 0 15 14" fill="none" stroke="#c5c5c5" stroke-width="1.1"><rect x="0.6" y="0.6" width="13.8" height="12.8" rx="1"/><path d="M3 3.5 L6.5 7 L3 10.5 M7 10.5 H12"/></svg>
<span class="t" style="left:1577.8px;top:34.8px;font-size:13px;line-height:22px;color:#cca700">p...</span>
<svg style="left:1549px;top:60.2px" width="7" height="16" viewBox="0 0 7 16" fill="none" stroke="#cccccc" stroke-width="1.6"><path d="M1 0 V16 M1 8 H7"/></svg>
<svg style="left:1558px;top:61.2px" width="15" height="14" viewBox="0 0 15 14" fill="none" stroke="#c5c5c5" stroke-width="1.1"><rect x="0.6" y="0.6" width="13.8" height="12.8" rx="1"/><path d="M3 3.5 L6.5 7 L3 10.5 M7 10.5 H12"/></svg>
<span class="t" style="left:1577.8px;top:57.2px;font-size:13px;line-height:22px;color:#cccccc">pwsh...</span>
<svg style="left:1549px;top:84px" width="7" height="9" viewBox="0 0 7 9" fill="none" stroke="#cccccc" stroke-width="1.6"><path d="M1 0 V8 H7"/></svg>
<svg style="left:1558px;top:83px" width="15" height="14" viewBox="0 0 15 14" fill="none" stroke="#c5c5c5" stroke-width="1.1"><rect x="0.6" y="0.6" width="13.8" height="12.8" rx="1"/><path d="M3 3.5 L6.5 7 L3 10.5 M7 10.5 H12"/></svg>
<span class="t" style="left:1577.8px;top:79px;font-size:13px;line-height:22px;color:#cccccc">node...</span>
<svg style="left:1604px;top:39px" width="14" height="13" viewBox="0 0 14 13" fill="none" stroke="#cca700" stroke-width="1.1"><path d="M7 0.8 L13.3 12.3 H0.7 Z M7 4.5 V8.5 M7 9.8 V11"/></svg>
<svg style="left:1545.7px;top:104.9px" width="15" height="14" viewBox="0 0 15 14" fill="none" stroke="#c5c5c5" stroke-width="1.1"><rect x="0.6" y="0.6" width="13.8" height="12.8" rx="1"/><path d="M3 3.5 L6.5 7 L3 10.5 M7 10.5 H12"/></svg>
<span class="t" style="left:1564.8px;top:101px;font-size:13px;line-height:22px;color:#cccccc">Python...</span>
</div>
<!-- status -->
<div id="status" class="a">
<div class="a" style="left:0;top:0;width:34px;height:23px;background:#16825d"></div>
<svg style="left:11px;top:6px" width="11" height="11" viewBox="0 0 11 11" fill="none" stroke="#ffffff" stroke-width="1.2"><path d="M0.8 3.5 L4 6.5 L0.8 9.8 M10.2 0.8 L7 4 L10.2 7.3"/></svg>
<svg style="left:42px;top:5px" width="13" height="13" viewBox="0 0 13 13" fill="none" stroke="#fff" stroke-width="1.1"><path d="M12.5 0.5 Q7 0.8 4 5.5 L7.5 9 Q12.2 6 12.5 0.5 Z M4 5.5 H1 L3 3 H6 M7.5 9 V12 L10 10 V7 M3.5 9.5 L1 12"/><circle cx="9" cy="4" r="1"/></svg>
<svg style="left:57px;top:5px" width="12" height="13" viewBox="0 0 12 13" fill="none" stroke="#fff" stroke-width="1.1"><path d="M11.5 0.5 L8 0.8 L3 6 L6 9 L11.2 4 Z M3 6 L0.7 8.5 L3.5 12.3 L6 9"/><circle cx="8.5" cy="3.5" r="0.9"/></svg>
<span class="t" style="left:73.4px;top:0;font-size:12px;line-height:24px;color:#ffffff;letter-spacing:-0.25px">Launchpad</span>
<svg style="left:148px;top:6px" width="12" height="12" viewBox="0 0 12 12" fill="none" stroke="#fff" stroke-width="1.1"><circle cx="6" cy="6" r="5.4"/><path d="M3.8 3.8 L8.2 8.2 M8.2 3.8 L3.8 8.2"/></svg>
<span class="t" style="left:164.8px;top:0;font-size:12px;line-height:24px;color:#ffffff;">0</span>
<svg style="left:175px;top:5.5px" width="13" height="12" viewBox="0 0 13 12" fill="none" stroke="#fff" stroke-width="1.1"><path d="M6.5 0.8 L12.3 11.4 H0.7 Z M6.5 4.3 V8 M6.5 9.2 V10.3"/></svg>
<span class="t" style="left:191.4px;top:0;font-size:12px;line-height:24px;color:#ffffff;">0</span>
<svg style="left:214.5px;top:5.5px" width="12" height="12" viewBox="0 0 12 12" fill="none" stroke="#fff" stroke-width="1.1"><path d="M0.7 6 L6 0.9 L11.3 6 M2.3 4.7 V11.3 H4.8 V7.8 H7.2 V11.3 H9.7 V4.7"/></svg>
<svg style="left:246px;top:5px" width="10" height="13" viewBox="0 0 10 13" fill="none" stroke="#fff" stroke-width="1.1"><ellipse cx="5" cy="2.5" rx="4.3" ry="1.9"/><path d="M0.7 2.5 V10.5 Q0.7 12.4 5 12.4 Q9.3 12.4 9.3 10.5 V2.5"/></svg>
<span class="t" style="left:261.3px;top:0;font-size:12px;line-height:24px;color:#ffffff;letter-spacing:-0.2px">Connect</span>
<svg style="left:321px;top:6px" width="12" height="11" viewBox="0 0 12 11" fill="none" stroke="#fff" stroke-width="1.2"><path d="M0.7 5.8 L4 9.5 L11.3 0.8"/></svg>
<span class="t" style="left:338.8px;top:0;font-size:12px;line-height:24px;color:#ffffff;letter-spacing:-0.1px">AWS: profile:default</span>
<svg style="left:459px;top:4px" width="14" height="14" viewBox="0 0 14 14" fill="none" stroke="#fff" stroke-width="1.1"><path d="M1 6 H10 V10 Q10 13 5.5 13 Q1 13 1 10 Z M10 7 H11.5 Q13 7 13 8.7 Q13 10.5 11.5 10.5 H10 M3.5 1 Q2.5 2.5 3.5 4 M5.5 0.5 Q4.5 2.3 5.5 4 M7.5 1 Q6.5 2.5 7.5 4"/></svg>
<span class="t" style="left:476px;top:0;font-size:12px;line-height:24px;color:#ffffff;letter-spacing:-0.6px">Java: Ready</span>
<span class="t" style="left:1324.2px;top:0;font-size:12px;line-height:24px;color:#ffffff;letter-spacing:-0.37px">Ln 35, Col 1</span>
<span class="t" style="left:1401.6px;top:0;font-size:12px;line-height:24px;color:#ffffff;letter-spacing:-0.55px">Spaces: 4</span>
<span class="t" style="left:1466px;top:0;font-size:12px;line-height:24px;color:#ffffff;letter-spacing:-0.3px">UTF-8</span>
<span class="t" style="left:1513.5px;top:0;font-size:12px;line-height:24px;color:#ffffff;letter-spacing:-0.3px">CRLF</span>
<span class="t" style="left:1557.5px;top:0;font-size:12px;line-height:24px;color:#ffffff;letter-spacing:-0.5px">{ }</span>
<span class="t" style="left:1576.5px;top:0;font-size:12px;line-height:24px;color:#ffffff;letter-spacing:-0.3px">Python</span>
<svg style="left:1629px;top:4.5px" width="15" height="13" viewBox="0 0 15 13"><path d="M1.5 6.5 Q0.5 2 3 1 Q5.5 0 7.5 2 Q9.5 0 12 1 Q14.5 2 13.5 6.5 Q14.8 7.5 14.5 9.5 Q14 12.3 7.5 12.7 Q1 12.3 0.5 9.5 Q0.2 7.5 1.5 6.5 Z" fill="#ffffff"/><circle cx="4.6" cy="4.2" r="1.7" fill="#007acc"/><circle cx="10.4" cy="4.2" r="1.7" fill="#007acc"/><rect x="3.2" y="7.3" width="3" height="3.3" fill="#007acc"/><rect x="8.8" y="7.3" width="3" height="3.3" fill="#007acc"/><path d="M1.2 0.8 L13.8 12.2" stroke="#007acc" stroke-width="2.2"/><path d="M1.2 0.8 L13.8 12.2" stroke="#ffffff" stroke-width="0.9"/></svg>
<span class="t" style="left:1659.7px;top:0;font-size:12px;line-height:24px;color:#ffffff;letter-spacing:-0.3px">3.12.10</span>
<svg style="left:1713px;top:5px" width="13" height="14" viewBox="0 0 13 14" fill="none" stroke="#fff" stroke-width="1.1"><circle cx="6.5" cy="5.5" r="1.3"/><path d="M6.5 7 V13.5 M3.8 8.5 Q2.3 7.3 2.3 5.5 Q2.3 1.5 6.5 1.5 Q10.7 1.5 10.7 5.5 Q10.7 7.3 9.2 8.5 M2.2 10.5 Q0.5 8.7 0.5 5.5 Q0.5 0.5 6.5 0.5 M10.8 10.5 Q12.5 8.7 12.5 5.5 Q12.5 0.5 6.5 0.5"/></svg>
<span class="t" style="left:1730.6px;top:0;font-size:12px;line-height:24px;color:#ffffff;letter-spacing:-0.37px">Go Live</span>
<div class="a" style="left:1777px;top:0;width:34px;height:23px;background:#7c6500"></div>
<svg style="left:1786px;top:4px" width="16" height="16" viewBox="0 0 16 16"><path d="M8 1 Q8.7 7.3 15 8 Q8.7 8.7 8 15 Q7.3 8.7 1 8 Q7.3 7.3 8 1 Z" fill="#ffffff"/><path d="M2 1.2 L14.8 12.5" stroke="#7c6500" stroke-width="1.6"/><path d="M1 2.6 L13.8 14" stroke="#ffffff" stroke-width="1.4" stroke-linecap="round"/></svg>
<svg style="left:1820px;top:5.5px" width="12" height="12" viewBox="0 0 12 12" fill="none" stroke="#fff" stroke-width="1.1"><circle cx="6" cy="6" r="5.3"/><path d="M2.3 9.7 L9.7 2.3"/></svg>
<span class="t" style="left:1836.5px;top:0;font-size:12px;line-height:24px;color:#ffffff;letter-spacing:0px">Prettier</span>
<svg style="left:1892px;top:5px" width="13" height="13" viewBox="0 0 13 13" fill="none" stroke="#fff" stroke-width="1.1"><path d="M2 10 V6 Q2 1.5 6.5 1.5 Q11 1.5 11 6 V10 H12.3 H0.7 Z M5 11.5 Q6.5 13 8 11.5"/></svg>
</div>
</body></html>
